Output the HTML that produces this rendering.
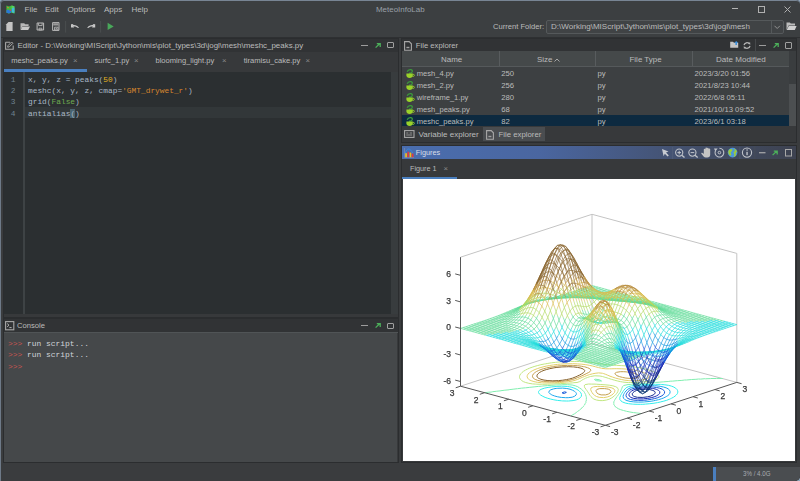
<!DOCTYPE html>
<html><head><meta charset="utf-8">
<style>
*{margin:0;padding:0;box-sizing:border-box}
html{background:#8fa6bc}body{width:800px;height:481px;overflow:hidden;background:#3c3f41;border-radius:4px 4px 5px 0}
body{position:relative;font-family:"Liberation Sans",sans-serif;font-size:7.8px;color:#bbbbbb}
.a{position:absolute}
.t{position:absolute;white-space:nowrap;line-height:10px}
.mono{font-family:"Liberation Mono",monospace;font-size:7.85px}
svg.a{overflow:visible}
</style></head><body>
<!-- workspace bg -->
<div class="a" style="left:0;top:37px;width:800px;height:444px;background:#3a3c3e"></div>
<!-- window frame -->
<div class="a" style="left:0;top:0;width:800px;height:481px;border-top:1px solid #788594;border-left:1px solid #6e7a88;border-radius:4px 4px 4px 0;pointer-events:none"></div>
<!-- title/menu -->
<svg class="a" style="left:5.8px;top:4.8px" width="9" height="9" viewBox="0 0 9 9"><path d="M0.4 0.6L3 1.4L5.6 0.4L8.4 1.2V8.4L5.6 7.6L3 8.6L0.4 7.8Z" fill="#3cbc3c"/><path d="M5.6 0.4L8.4 1.2V8.4L5.6 7.6Z" fill="#58d060"/><path d="M6 3.2L8.4 2.6V7.8L6 7.2Z" fill="#40b8e0"/><path d="M0.4 5.2L2 4.6L3.6 5.6L5.4 4.2V7.6L3 8.6L0.4 7.8Z" fill="#2a78d8"/><circle cx="2" cy="2.6" r="0.8" fill="#e07a30"/><circle cx="4.4" cy="5.2" r="0.7" fill="#d04060"/></svg>
<div class="t" style="left:24.5px;top:5px;font-size:8px">File</div>
<div class="t" style="left:45px;top:5px;font-size:8px">Edit</div>
<div class="t" style="left:67.5px;top:5px;font-size:8.1px">Options</div>
<div class="t" style="left:104px;top:5px;font-size:8px">Apps</div>
<div class="t" style="left:131.5px;top:5px;font-size:8px">Help</div>
<div class="t" style="left:376px;top:5px;color:#9aa0a8;font-size:7.95px">MeteoInfoLab</div>
<div class="a" style="left:732px;top:8px;width:6px;height:1px;background:#b4b4b4"></div>
<div class="a" style="left:758px;top:6px;width:6.5px;height:6.5px;border:1px solid #b0b0b0"></div>
<svg class="a" style="left:784px;top:6px" width="7" height="7"><path d="M0.5 0.5L6.5 6.5M6.5 0.5L0.5 6.5" stroke="#b0b0b0" stroke-width="1"/></svg>

<!-- toolbar icons -->
<svg class="a" style="left:0;top:0" width="120" height="37">
 <path d="M8.5 22H12.6V31.1H6.3V24.2Z" fill="#c4c4c4"/>
 <path d="M20.5 23.2H24.2L25.2 24.3H28.6V26H22.6L20.5 30Z" fill="#b8b8b8"/><path d="M22.4 26.6H30L28.2 30H20.6Z" fill="#c8c8c8"/>
 <path d="M37.1 23H43.6V30H37.1Z" fill="none" stroke="#bcbcbc" stroke-width="1"/><path d="M38.6 23.2V25.6H42.1V23.2" fill="none" stroke="#bcbcbc" stroke-width="0.9"/><path d="M39 28.2H41.8V30H39Z" fill="none" stroke="#bcbcbc" stroke-width="0.8"/>
 <path d="M52.6 22.6H59V30.4H52.6Z" fill="none" stroke="#b8b8b8" stroke-width="1"/><path d="M53.2 23.2H58.4V25.4H53.2Z" fill="#9c9c9c"/><path d="M54.6 27.2H58V30H54.6Z" fill="none" stroke="#b8b8b8" stroke-width="0.9"/><path d="M55.6 28.2H57V29.2H55.6Z" fill="#b8b8b8"/>
 <rect x="65.2" y="21" width="0.9" height="11.6" fill="#4c5052"/>
 <path d="M71 24.2L73.6 24.1L72.6 25.2C74.8 24.8 77.6 25.3 79 28.1L78 28.1C76.8 26.6 74.8 26.2 73.3 26.5L74.2 27.6L71 27.6Z" fill="#c8c8c8"/>
 <path d="M95.2 24.2L92.6 24.1L93.6 25.2C91.4 24.8 88.6 25.3 87.2 28.1L88.2 28.1C89.4 26.6 91.4 26.2 92.9 26.5L92 27.6L95.2 27.6Z" fill="#c8c8c8"/>
 <rect x="100.2" y="21" width="0.9" height="11.6" fill="#4c5052"/>
 <path d="M107.6 22.8L113.7 26.5L107.6 30.1Z" fill="#49a85a"/>
</svg>
<div class="t" style="left:493px;top:22px;font-size:7.6px">Current Folder:</div>
<div class="a" style="left:546px;top:19.5px;width:238px;height:14.5px;background:#404345;border:1px solid #55595b;border-radius:2px"></div>
<div class="a" style="left:770.5px;top:20.5px;width:1px;height:12.5px;background:#55595b"></div>
<div class="t" style="left:551px;top:22px;font-size:8.05px">D:\Working\MIScript\Jython\mis\plot_types\3d\jogl\mesh</div>
<svg class="a" style="left:773.5px;top:25px" width="7" height="5"><path d="M0.5 0.8L3.2 3.5L5.9 0.8" stroke="#9a9a9a" fill="none" stroke-width="0.9"/></svg>
<svg class="a" style="left:786px;top:22px" width="11" height="9"><path d="M0.5 0.5H3.8L4.8 1.6H9V3.4H2.6L0.5 8Z" fill="#bcbcbc"/><path d="M2.8 3.9H10.6L8.8 8H0.7Z" fill="#d0d0d0"/></svg>
<div class="a" style="left:1px;top:37px;width:799px;height:1px;background:#2e3032"></div>

<!-- ===== Editor panel ===== -->
<div class="a" style="left:3px;top:38px;width:396px;height:279.5px;background:#37393b;border:1px solid #2b2d2f"></div>
<div class="a" style="left:4px;top:39px;width:394px;height:13px;background:#313335"></div>
<svg class="a" style="left:5px;top:41px" width="9" height="9"><path d="M0.6 1.2H5M8.2 4.4V8.3H0.6V1.2" fill="none" stroke="#a8a8a8" stroke-width="1.1"/><path d="M2.6 6.2L3 4.6L6.6 1L7.9 2.3L4.3 5.9Z" fill="none" stroke="#a8a8a8" stroke-width="1"/></svg>
<div class="t" style="left:17.5px;top:40.5px;font-size:7.95px">Editor - D:\Working\MIScript\Jython\mis\plot_types\3d\jogl\mesh\meshc_peaks.py</div>
<div class="a" style="left:361px;top:45px;width:7px;height:1.2px;background:#9c9c9c"></div>
<svg class="a" style="left:375px;top:42.5px" width="6" height="5"><path d="M0.6 4.6L4.6 0.8M1.8 0.6H5.2V4" fill="none" stroke="#4caf5a" stroke-width="1.3"/></svg>
<div class="a" style="left:387px;top:42px;width:7px;height:6px;border:1px solid #a0a0a0;border-radius:1px"></div>
<!-- tabs -->
<div class="t" style="left:11.2px;top:56px;font-size:7.55px">meshc_peaks.py</div><div class="t" style="left:73px;top:56px;color:#8a8a8a">×</div>
<div class="t" style="left:94.5px;top:56px;font-size:7.55px">surfc_1.py</div><div class="t" style="left:134px;top:56px;color:#8a8a8a">×</div>
<div class="t" style="left:155.5px;top:56px;font-size:7.55px">blooming_light.py</div><div class="t" style="left:222px;top:56px;color:#8a8a8a">×</div>
<div class="t" style="left:243.7px;top:56px;font-size:7.55px">tiramisu_cake.py</div><div class="t" style="left:305.5px;top:56px;color:#8a8a8a">×</div>
<div class="a" style="left:4px;top:69px;width:83px;height:2.5px;background:#4a7fbf"></div>
<!-- code -->
<div class="a" style="left:4px;top:71.5px;width:387px;height:242px;background:#2b2f31"></div>
<div class="a" style="left:391px;top:71.5px;width:7px;height:242px;background:#383c3e"></div>
<div class="a" style="left:23px;top:71.5px;width:2px;height:242px;background:#3e4345"></div>
<div class="a" style="left:25px;top:107px;width:366px;height:10.5px;background:#323739"></div>
<div class="t mono" style="left:10.8px;top:73.9px;color:#6f8290;line-height:11.2px">1<br>2<br>3<br>4</div>
<div class="t mono" style="left:28px;top:73.9px;color:#a9b7c6;line-height:11.2px;font-size:7.85px">x, y, z = peaks(<span style="color:#e6b422">50</span>)<br>meshc(x, y, z, cmap=<span style="color:#d7852e">'GMT_drywet_r'</span>)<br>grid(<span style="color:#6eaa50">False</span>)<br>antialias<span style="background:#4a6470">(</span>)</div>

<!-- ===== Console ===== -->
<div class="a" style="left:3px;top:318px;width:396px;height:145px;background:#37393b;border:1px solid #2b2d2f"></div>
<div class="a" style="left:4px;top:319px;width:394px;height:13px;background:#313335"></div>
<svg class="a" style="left:5px;top:321px" width="10" height="9"><rect x="0.6" y="0.6" width="8.2" height="8.2" fill="none" stroke="#a8a8a8" stroke-width="1.1"/><path d="M2.2 2.6L4 4.2L2.2 5.8M4.4 6.6H6.6" fill="none" stroke="#c0c0c0" stroke-width="0.9"/></svg>
<div class="t" style="left:17px;top:321px;font-size:7.65px">Console</div>
<div class="a" style="left:361px;top:325px;width:7px;height:1.2px;background:#9c9c9c"></div>
<svg class="a" style="left:375px;top:322.5px" width="6" height="5"><path d="M0.6 4.6L4.6 0.8M1.8 0.6H5.2V4" fill="none" stroke="#4caf5a" stroke-width="1.3"/></svg>
<div class="a" style="left:387px;top:322.5px;width:7px;height:6.5px;border:1px solid #a0a0a0;border-radius:1px"></div>
<div class="a" style="left:4px;top:332px;width:394px;height:1px;background:#505456"></div>
<div class="a" style="left:4px;top:333px;width:393px;height:129px;background:#45484a"></div>
<div class="t mono" style="left:8px;top:338.2px;color:#c75450;line-height:11.2px;font-size:7.95px">&gt;&gt;&gt;<br>&gt;&gt;&gt;<br>&gt;&gt;&gt;</div>
<div class="t mono" style="left:27px;top:338.2px;color:#d0d4d8;line-height:11.2px;font-size:7.95px">run script...<br>run script...</div>

<!-- ===== File explorer ===== -->
<div class="a" style="left:401px;top:38px;width:396px;height:104.5px;background:#37393b;border:1px solid #2b2d2f"></div>
<div class="a" style="left:402px;top:39px;width:394px;height:12px;background:#313335"></div>
<svg class="a" style="left:404px;top:40.5px" width="8" height="10"><path d="M0.6 0.6H5.2L7.4 2.8V9.2H0.6Z" fill="none" stroke="#a8a8a8" stroke-width="1.1"/><path d="M2.4 5.8H5.4V7.2H2.4Z" fill="#a0a0a0"/></svg>
<div class="t" style="left:415.8px;top:40.5px;font-size:7.7px">File explorer</div>
<svg class="a" style="left:730px;top:41px" width="9" height="7"><path d="M0.2 0.8H3L4 1.8H8.2V6.8H0.2Z" fill="#c4c4c4"/><path d="M6.2 0L8.2 2H7V4H5.4V2H4.2Z" fill="#3f8fd8"/></svg>
<svg class="a" style="left:743px;top:41.5px" width="8" height="7"><path d="M1 3.2A3 3 0 0 1 6.4 2M7 3.8A3 3 0 0 1 1.6 5" fill="none" stroke="#b8b8b8" stroke-width="1.2"/><path d="M5 0.6L7.2 0.6L7.2 2.9Z" fill="#b8b8b8"/><path d="M3 6.4L0.8 6.4L0.8 4.1Z" fill="#b8b8b8"/></svg>
<div class="a" style="left:754.5px;top:39px;width:1px;height:12px;background:#46494b"></div>
<div class="a" style="left:759px;top:45px;width:6.5px;height:1.2px;background:#9c9c9c"></div>
<svg class="a" style="left:772.5px;top:42.5px" width="6" height="5"><path d="M0.6 4.6L4.6 0.8M1.8 0.6H5.2V4" fill="none" stroke="#4caf5a" stroke-width="1.3"/></svg>
<div class="a" style="left:785px;top:42px;width:6.5px;height:6.5px;border:1px solid #a0a0a0;border-radius:1px"></div>
<div class="a" style="left:402px;top:51px;width:387px;height:15.5px;background:#45494a"></div>
<div class="a" style="left:402px;top:66px;width:387px;height:1px;background:#55595b"></div>
<div class="a" style="left:499px;top:51px;width:1px;height:15px;background:#585c5e"></div>
<div class="a" style="left:595px;top:51px;width:1px;height:15px;background:#585c5e"></div>
<div class="a" style="left:692px;top:51px;width:1px;height:15px;background:#585c5e"></div>
<div class="t" style="left:441px;top:55px;font-size:7.95px">Name</div>
<div class="t" style="left:537px;top:55px;font-size:7.95px">Size</div>
<svg class="a" style="left:553.5px;top:57.5px" width="6" height="4"><path d="M0.5 3.5L3 1L5.5 3.5" fill="none" stroke="#b0b0b0" stroke-width="0.9"/></svg>
<div class="t" style="left:629.5px;top:55px;font-size:7.95px">File Type</div>
<div class="t" style="left:716px;top:55px;font-size:8.05px">Date Modified</div>
<div class="a" style="left:402px;top:67px;width:387px;height:59px;background:#3d4042"></div>
<div class="a" style="left:402px;top:115px;width:387px;height:11px;background:#0d2a40"></div>
<div class="a" style="left:789px;top:51px;width:7px;height:75px;background:#4c4f51"></div>
<div class="a" style="left:789px;top:51px;width:7px;height:33px;background:#3a3d3f"></div>
<div id="rows">
<svg class="a" style="left:406px;top:68.7px" width="9" height="9"><path d="M1.2 2.8Q2 0.4 4.6 0.6Q7 0.8 6 3Q5.2 4.4 3 4.2" fill="none" stroke="#3c9a3c" stroke-width="1.3"/><path d="M0.4 4.4H6.8V6.6Q6.6 9 3.6 9Q0.6 9 0.4 6.6Z" fill="#9ad22a"/><path d="M6.6 5.2Q8.6 5.2 8.4 6.6Q8.2 7.6 6.4 7.4" fill="none" stroke="#9ad22a" stroke-width="0.8"/></svg>
<div class="t" style="left:416.8px;top:68.8px;font-size:7.55px">mesh_4.py</div>
<div class="t" style="left:501.3px;top:68.8px;font-size:7.7px">250</div>
<div class="t" style="left:597.5px;top:68.8px;font-size:7.7px">py</div>
<div class="t" style="left:694.5px;top:68.8px;font-size:7.7px">2023/3/20 01:56</div>
<svg class="a" style="left:406px;top:80.7px" width="9" height="9"><path d="M1.2 2.8Q2 0.4 4.6 0.6Q7 0.8 6 3Q5.2 4.4 3 4.2" fill="none" stroke="#3c9a3c" stroke-width="1.3"/><path d="M0.4 4.4H6.8V6.6Q6.6 9 3.6 9Q0.6 9 0.4 6.6Z" fill="#9ad22a"/><path d="M6.6 5.2Q8.6 5.2 8.4 6.6Q8.2 7.6 6.4 7.4" fill="none" stroke="#9ad22a" stroke-width="0.8"/></svg>
<div class="t" style="left:416.8px;top:80.8px;font-size:7.55px">mesh_2.py</div>
<div class="t" style="left:501.3px;top:80.8px;font-size:7.7px">256</div>
<div class="t" style="left:597.5px;top:80.8px;font-size:7.7px">py</div>
<div class="t" style="left:694.5px;top:80.8px;font-size:7.7px">2021/8/23 10:44</div>
<svg class="a" style="left:406px;top:92.7px" width="9" height="9"><path d="M1.2 2.8Q2 0.4 4.6 0.6Q7 0.8 6 3Q5.2 4.4 3 4.2" fill="none" stroke="#3c9a3c" stroke-width="1.3"/><path d="M0.4 4.4H6.8V6.6Q6.6 9 3.6 9Q0.6 9 0.4 6.6Z" fill="#9ad22a"/><path d="M6.6 5.2Q8.6 5.2 8.4 6.6Q8.2 7.6 6.4 7.4" fill="none" stroke="#9ad22a" stroke-width="0.8"/></svg>
<div class="t" style="left:416.8px;top:92.8px;font-size:7.55px">wireframe_1.py</div>
<div class="t" style="left:501.3px;top:92.8px;font-size:7.7px">280</div>
<div class="t" style="left:597.5px;top:92.8px;font-size:7.7px">py</div>
<div class="t" style="left:694.5px;top:92.8px;font-size:7.7px">2022/6/8 05:11</div>
<svg class="a" style="left:406px;top:104.7px" width="9" height="9"><path d="M1.2 2.8Q2 0.4 4.6 0.6Q7 0.8 6 3Q5.2 4.4 3 4.2" fill="none" stroke="#3c9a3c" stroke-width="1.3"/><path d="M0.4 4.4H6.8V6.6Q6.6 9 3.6 9Q0.6 9 0.4 6.6Z" fill="#9ad22a"/><path d="M6.6 5.2Q8.6 5.2 8.4 6.6Q8.2 7.6 6.4 7.4" fill="none" stroke="#9ad22a" stroke-width="0.8"/></svg>
<div class="t" style="left:416.8px;top:104.8px;font-size:7.55px">mesh_peaks.py</div>
<div class="t" style="left:501.3px;top:104.8px;font-size:7.7px">68</div>
<div class="t" style="left:597.5px;top:104.8px;font-size:7.7px">py</div>
<div class="t" style="left:694.5px;top:104.8px;font-size:7.7px">2021/10/13 09:52</div>
<svg class="a" style="left:406px;top:116.7px" width="9" height="9"><path d="M1.2 2.8Q2 0.4 4.6 0.6Q7 0.8 6 3Q5.2 4.4 3 4.2" fill="none" stroke="#3c9a3c" stroke-width="1.3"/><path d="M0.4 4.4H6.8V6.6Q6.6 9 3.6 9Q0.6 9 0.4 6.6Z" fill="#9ad22a"/><path d="M6.6 5.2Q8.6 5.2 8.4 6.6Q8.2 7.6 6.4 7.4" fill="none" stroke="#9ad22a" stroke-width="0.8"/></svg>
<div class="t" style="left:416.8px;top:116.8px;font-size:7.55px">meshc_peaks.py</div>
<div class="t" style="left:501.3px;top:116.8px;font-size:7.7px">82</div>
<div class="t" style="left:597.5px;top:116.8px;font-size:7.7px">py</div>
<div class="t" style="left:694.5px;top:116.8px;font-size:7.7px">2023/6/1 03:18</div>
</div>
<div class="a" style="left:402px;top:126px;width:394px;height:16px;background:#37393b"></div>
<div class="a" style="left:483px;top:127px;width:62px;height:14px;background:#4a4d50"></div>
<svg class="a" style="left:404px;top:130px" width="11" height="8"><rect x="0.6" y="0.6" width="9.4" height="6.8" fill="none" stroke="#a8a8a8" stroke-width="1.1"/><path d="M2.2 3H4.4M5.6 3H8.2M2.2 5H8.2" stroke="#a0a0a0" stroke-width="0.9"/></svg>
<div class="t" style="left:418.5px;top:129.5px;font-size:8.05px">Variable explorer</div>
<svg class="a" style="left:486px;top:129.5px" width="8" height="10"><path d="M0.6 0.6H5.2L7.4 2.8V9.2H0.6Z" fill="none" stroke="#a8a8a8" stroke-width="1.1"/><path d="M2.4 5.8H5.4V7.2H2.4Z" fill="#a0a0a0"/></svg>
<div class="t" style="left:498.5px;top:129.5px;font-size:7.8px">File explorer</div>

<!-- ===== Figures ===== -->
<div class="a" style="left:401px;top:145px;width:396px;height:318px;background:#37393b;border:1px solid #2b2d2f"></div>
<div class="a" style="left:402px;top:146px;width:394px;height:13px;background:linear-gradient(90deg,#4a6eaf 0%,#4a66a0 35%,#434f6a 75%,#3d4250 100%)"></div>
<svg class="a" style="left:404px;top:148px" width="10" height="10"><path d="M0.5 0V9.5H10" stroke="#8090b0" stroke-width="0.6" fill="none"/><path d="M1 5.5C3 -0.5 6 -0.5 9 5.5" stroke="#3a8ae0" stroke-width="0.9" fill="none"/><rect x="1.2" y="5.2" width="1.7" height="4" fill="#f0c020"/><rect x="3.4" y="3.8" width="1.7" height="5.4" fill="#e03a40"/><rect x="5.6" y="4.6" width="1.7" height="4.6" fill="#f0c020"/><rect x="7.8" y="5.6" width="1.7" height="3.6" fill="#e03a40"/></svg>
<div class="t" style="left:415.8px;top:148px;color:#d8dee8;font-size:7.3px">Figures</div>
<!-- figure toolbar -->
<svg class="a" style="left:655px;top:144px" width="145" height="18">
 <path d="M7 5L13.5 7.5L11 8.6L13.8 11.4L12.6 12.6L9.8 9.8L8.6 12.2Z" fill="#c8ccd2"/>
 <rect x="17.3" y="3" width="0.8" height="12" fill="#52607a"/>
 <circle cx="24.2" cy="8.6" r="3.6" fill="none" stroke="#c0c4ca" stroke-width="1.1"/><path d="M22.4 8.6H26M24.2 6.8V10.4" stroke="#c0c4ca" stroke-width="1"/><path d="M26.8 11.2L29.5 13.6" stroke="#c0c4ca" stroke-width="1.3"/>
 <circle cx="37.4" cy="8.6" r="3.6" fill="none" stroke="#c0c4ca" stroke-width="1.1"/><path d="M35.6 8.6H39.2" stroke="#c0c4ca" stroke-width="1"/><path d="M40 11.2L42.7 13.6" stroke="#c0c4ca" stroke-width="1.3"/>
 <path d="M48.6 12.6L46.4 9.8Q45.9 9 46.7 8.7Q47.4 8.5 48 9.2L48.8 10V5.6Q48.8 4.8 49.6 4.8Q50.4 4.8 50.4 5.6V4.4Q50.4 3.6 51.2 3.6Q52 3.6 52 4.4V4.6Q52 3.8 52.8 3.8Q53.6 3.8 53.6 4.6V5.4Q53.6 4.6 54.4 4.6Q55.2 4.6 55.2 5.4V10.6Q55.2 13.6 52.2 13.6H50.8Q49.4 13.6 48.6 12.6Z" fill="#c4c4c4"/>
 <path d="M64.4 4.2A4.4 4.4 0 1 1 60.6 6.4" fill="none" stroke="#c0c4ca" stroke-width="1.1"/><path d="M59 4.4L62.6 4.6L60.4 7.6Z" fill="#c0c4ca"/><circle cx="64.4" cy="8.6" r="1.3" fill="none" stroke="#c0c4ca" stroke-width="1"/>
 <circle cx="77.6" cy="8.6" r="4.8" fill="#4a96dc"/><path d="M74.2 5.6Q76 4.4 77.4 5.2L77 7L75.6 8.4L76.4 10.6L75.4 12Q73 10.4 73.2 7.6Z" fill="#9ccc3a"/><path d="M79.2 4.4Q81.4 5.2 82 7.4L80.6 9.2L81 11.2Q79.8 12.6 78.6 13L79.4 10.6L78.4 8.6L79.8 7Z" fill="#9ccc3a"/>
 <rect x="84.5" y="3" width="0.8" height="12" fill="#4e5870"/>
 <circle cx="92" cy="8.6" r="4.6" fill="none" stroke="#c0c4ca" stroke-width="1.1"/><rect x="91.4" y="7.8" width="1.3" height="3.4" fill="#c8ccd2"/><circle cx="92.05" cy="6.1" r="0.75" fill="#c8ccd2"/>
 <rect x="99.5" y="2" width="0.8" height="13" fill="#474d58"/>
 <rect x="104" y="8.2" width="6.5" height="1.1" fill="#b4b4b4"/>
 <path d="M117.6 11.1L121.6 7.3M118.8 7.1H122.2V10.5" fill="none" stroke="#4caf5a" stroke-width="1.3"/>
 <rect x="130.5" y="5.5" width="6" height="6.5" fill="none" stroke="#a8a8a8" stroke-width="1"/>
</svg>
<div class="t" style="left:410px;top:164px;font-size:7.25px">Figure 1</div><div class="t" style="left:443.5px;top:163.5px;color:#8a8a8a">×</div>
<div class="a" style="left:402px;top:177px;width:55px;height:2px;background:#4a7fbf"></div>
<div class="a" style="left:402.5px;top:179px;width:392.5px;height:282px;background:#ffffff"></div>

<!-- status -->
<div class="a" style="left:713px;top:467px;width:87px;height:14px;background:#4a4d50;border-bottom-right-radius:5px"></div>
<div class="a" style="left:713px;top:467px;width:3px;height:14px;background:#4a7fbf"></div>
<div class="t" style="left:743px;top:468.8px;color:#a8acb0;font-size:7.1px;transform:scaleX(0.87);transform-origin:0 0">3% / 4.0G</div>
<svg class="a" style="left:0;top:0;will-change:transform" width="800" height="481" viewBox="0 0 800 481"><g><path d="M460.5 257.2L592 214.3" stroke="#c4c4c4" stroke-width="1" fill="none"/><path d="M592 214.3L736.8 253.4" stroke="#c4c4c4" stroke-width="1" fill="none"/><path d="M592 343.3L592 214.3" stroke="#c4c4c4" stroke-width="1" fill="none"/><path d="M736.8 382.4L736.8 253.4" stroke="#c4c4c4" stroke-width="1" fill="none"/><path d="M460.5 386.2L592 343.3" stroke="#c4c4c4" stroke-width="1" fill="none"/><path d="M592 343.3L736.8 382.4" stroke="#c4c4c4" stroke-width="1" fill="none"/><path d="M645.5 389.3L649.9 389.6L652.9 390.4L654.8 391.5L655.2 392.4L655.1 393.2L654.7 393.8L653.1 395L650.8 396L647.7 396.8L643.9 397.3L642.1 397.4L637.9 397.3L637.3 397.3L634.2 396.5L633.7 396.2L632.5 395.3L632.3 394.2L632.3 393.6L632.9 392.7L634.3 391.5L636.4 390.5L639.6 389.7L643.9 389.3L645.5 389.3" stroke="#12268e" stroke-width="1" fill="none"/><path d="M643.9 388L645 388L649.2 388.1L652.5 388.4L653.2 388.5L656.3 389.3L657.4 389.8L658.5 390.3L659.8 391.7L659.9 392L659.6 393.5L659.6 393.6L658.3 394.8L656.5 395.9L654.1 396.9L651.2 397.7L647.8 398.4L643.6 398.8L643.1 398.9L637.9 398.9L637.6 398.9L633.8 398.4L631 397.5L630.1 396.8L629.4 396.3L628.9 394.9L628.9 394.7L629.4 393.4L629.8 392.6L630.3 392.1L631.8 390.9L633.9 389.8L636.6 389L640.3 388.3L643.9 388" stroke="#1a28b4" stroke-width="1" fill="none"/><path d="M641.6 387L646.5 386.8L647.7 386.8L652.5 387L653.5 387.1L656.5 387.5L659.7 388.2L662.1 389.1L662.9 389.6L663.8 390.3L664.6 391.7L664.7 391.8L664.4 393.3L664.1 393.8L663.5 394.6L661.9 395.8L659.8 396.8L658 397.5L657.4 397.8L656 398.2L654.6 398.6L651.4 399.3L647.6 399.9L644.3 400.3L643.2 400.3L638.3 400.4L637.5 400.4L633.9 400.1L630.5 399.5L628 398.5L626.9 397.5L626.5 397.2L626 395.7L626 395.6L626.3 394.2L626.5 393.7L627.1 392.8L628.1 391.5L628.2 391.4L629.6 390.2L631.5 389.2L634 388.3L637.3 387.5L641.4 387L641.6 387M566.2 392.2L566.4 392.4L564.3 393.4L563 393.3L562.1 392.8L564.4 391.9L566.2 392.2" stroke="#1558d8" stroke-width="1" fill="none"/><path d="M638.8 386.2L642.9 385.8L645.7 385.7L648.1 385.7L651.3 385.6L654.5 385.8L656 385.8L660.1 386.3L663.4 387L666.1 387.8L668.2 388.9L669 389.7L669.6 390.2L670.1 391.6L670.1 391.8L669.9 393.1L669.6 393.8L669.1 394.5L667.7 395.7L666.2 396.6L665.9 396.8L663.8 397.9L661.3 398.8L658.5 399.7L655.4 400.4L653.5 400.8L651.9 401.1L648 401.6L644.6 401.9L643.4 402L638.6 402.1L637.9 402.1L633.8 401.9L630 401.4L627 400.6L624.8 399.6L623.5 398.2L623.5 398.2L623.1 396.6L623.1 396.5L623.4 395L623.5 394.7L624.1 393.6L624.7 392.5L625 392.2L626 390.9L627 390L627.3 389.6L629 388.5L631.4 387.5L634.5 386.8L638.3 386.2L638.8 386.2M556.2 388.4L557.2 388.3L562.3 388.1L562.7 388.1L566.8 388.5L570 389.2L572.5 390.2L574.6 391.3L574.8 391.5L575.9 392.6L576.4 393.5L576.3 394.2L576.1 395L574.7 396.2L572.2 397.2L568.2 397.7L565.6 397.7L561.3 397.4L561.2 397.4L557.7 396.8L554.7 396L552.2 395.1L551.8 394.9L550.2 393.9L548.9 392.6L548.9 392.5L549.2 390.9L549.5 390.6L550.8 389.8L553.5 388.9L556.2 388.4" stroke="#1ba7ed" stroke-width="1" fill="none"/><path d="M636.3 385.2L639.5 384.9L643.5 384.6L644.2 384.6L649.3 384.4L649.8 384.3L654.9 384.3L655.5 384.3L660.5 384.4L661.7 384.5L664.8 384.8L668.4 385.3L671.4 386.1L673.9 387.1L675.7 388.2L675.8 388.3L677.1 389.6L677.5 390.4L677.8 391.1L677.8 392.1L677.6 392.9L677.4 393.6L676.4 394.9L676.1 395.2L675.1 396.1L673.4 397.3L671.4 398.3L670.4 398.8L669.2 399.3L666.7 400.3L663.9 401.1L661 401.8L660.8 401.9L657.6 402.6L654 403.2L649.8 403.7L649.8 403.7L645.4 404.1L642.8 404.3L640.3 404.3L637.1 404.3L633.8 404.2L632.5 404.1L628.5 403.7L625.2 403L622.6 402L620.8 400.8L620.8 400.7L619.8 399.4L619.9 398.8L619.7 397.7L619.9 397.3L620.5 395.8L620.5 395.7L621.2 394.4L621.7 393.5L622 393L622.9 391.7L623.2 391.3L623.8 390.3L624.9 389L625.1 388.9L626.2 387.7L628.3 386.7L631.3 385.9L635.1 385.3L636.3 385.2M548.9 387.3L551.9 386.9L556.2 386.5L557.1 386.4L561.4 386.2L563 386.2L567.6 386.5L569.6 386.8L571.1 387.1L573.9 388L574 388L576.1 389L578.1 390.1L579.3 391.1L579.6 391.4L580.8 392.8L581 393.1L581.4 394.3L581.5 394.9L581.3 396.1L581.3 396.4L580.3 397.7L579 398.7L578.7 398.9L576.3 399.9L573.1 400.6L573 400.6L568.6 401L566.3 401L562.3 400.9L561.5 400.8L557.4 400.4L553.9 399.8L550.7 399.1L547.8 398.3L545.1 397.4L542.8 396.3L540.9 395.2L540.7 395.1L539.4 394L538.7 392.9L538.5 392.5L538.7 391.3L539.4 390.4L539.8 390L541.9 389L544.7 388.1L548 387.4L548.9 387.3" stroke="#32eeeb" stroke-width="1" fill="none"/><path d="M641.3 413.6L637.4 413L636.5 412.9L633.5 412.6L629.9 412L626.6 411.3L623.5 410.5L620.7 409.7L618.3 408.7L616.6 407.6L616.6 407.5L614.8 406.3L614.5 405.4L613.9 404.9L613.9 403.6L613.6 403.2L614 402L614 401.3L614.5 400.6L615.2 399.2L615.2 399.2L616.2 397.8L616.7 396.9L617.1 396.5L618.1 395.2L618.5 394.6L619 393.8L620 392.5L620.1 392.3L620.7 391.1L621.2 390.1L621.3 389.6L621.9 388.2L622 388.1L622.3 386.7L623.5 385.9L623.7 385.5L627 384.8L627 384.7L631.1 384.3L634.5 384L635.8 383.9L640.5 383.6L641.5 383.5L645.2 383.3L648.6 383L649.8 382.9L654.4 382.6L655.7 382.4L659.1 382.2L662.9 381.9L663.6 381.8L668.2 381.5L670.2 381.2L672.7 381.1L677.1 380.7L677.3 380.7L681.9 380.4L684.7 380L686.5 380L691 379.6L691.6 379.5L695.9 379.3L698.6 379L700.7 379.1L704.9 378.7L705.6 378.8L710.7 378.6L710.8 378.5L716.3 378.5L716.6 378.4L721.9 378.5L722.7 378.6M484.7 392.7L488.7 392.2L491.1 392.1L492.8 391.7L496.8 391.2L500 390.9L501 390.7L504.9 390.2L509 389.8L509.1 389.7L513.1 389.2L517.3 388.7L517.5 388.7L521.3 388.2L525.6 387.8L525.9 387.8L529.8 387.3L534 386.9L534.1 386.9L538.4 386.4L541.6 386.2L542.8 386L547.3 385.6L549 385.5L551.9 385.3L555.9 385L556.8 385L561.8 384.8L562.2 384.7L567.6 384.7L567.7 384.7L572.1 385L575.3 385.8L577.7 386.7L579.5 387.9L579.6 388L581.3 389.1L582.7 390.4L582.8 390.4L584 391.7L584.5 392.5L584.9 393.2L585.6 394.4L585.6 394.7L586.1 396.1L586.1 396.3L586.4 397.8L586.3 398L586.4 399.4L586.2 399.8L586.3 401L585.8 401.7L585.9 402.5L585.1 403.7L585.1 403.9L584.4 405.2L583.5 406L583.3 406.6L582.1 407.8L581 408.6L580.8 409.1L579.3 410.3L577.6 411.4L577.5 411.5L576.2 412.6L574.5 413.8L572.6 414.8L572.6 414.9L571 416M595.3 379.2L599.2 379.7L601.3 380.8L601.6 381.1L600.5 381L596.2 380.7L594.4 379.5L594.8 379.3L595.3 379.2" stroke="#80eeaf" stroke-width="1" fill="none"/><path d="M588.7 384L585.1 384.6L584 386L584.3 386.3L584.8 387.8L585 387.9L586 389.3L586.2 389.7L587 390.7L587.7 391.7L588 392.2L588.9 393.6L588.9 393.7L589.8 395.1L590.3 395.7L590.9 396.5L592.1 397.7L592.2 397.9L593.9 399.1L596.4 400L599.9 400.6L602.8 400.6L606.6 400L609.2 399.2L611.3 398.1L613 397L614.3 395.9L614.5 395.8L615.8 394.5L616.7 393.4L616.9 393.2L617.7 391.8L618 391.2L618.1 390.3L618.3 389.4L617.9 388.7L617.6 387.8L615.7 386.7L612.9 385.8L609.2 385.2L605.1 384.8L603 384.7L600.8 384.5L596.3 384.2L595 384.1L591.3 384.1L588.7 384M544.3 364L540.9 364.7L537.8 365.5L534.9 366.3L532.2 367.2L529.7 368.1L527.5 369.1L525.5 370.1L525.1 370.4L523.6 371.2L522.1 372.4L521.1 373.5L520.9 373.7L519.9 375L519.7 375.7L519.5 376.5L519.5 377.5L519.8 378.2L520.2 379.1L521.4 380.2L521.5 380.4L523.3 381.6L525.7 382.5L528.8 383.3L532.4 383.9L535.7 384.1L536.8 384.2L541.9 384.3L542.3 384.3L547.7 384.2L547.8 384.2L553 384L553.9 383.9L558 383.7L560.3 383.6L563 383.5L566.9 383.2L567.9 383.2L572.6 382.9L573.9 382.7L577 382.5L579.8 381.6L581.6 380.5L582.1 380L583.3 379.4L585.4 378.3L587.7 377.4L590.5 376.5L594.1 375.9L595.1 375.8L599.9 376L602.5 376.5L603.1 376.7L604.1 377L605.9 377.5L608.6 378.4L611.4 379.3L614.2 380.1L617.2 380.9L620.3 381.6L622.7 382L624 382.2L628.3 382.6L630.7 382.5L633.7 382.5L636.2 382.4L640.2 382.2L641 382.1L645.3 381.7L648.5 381.2L649.2 381.2L652.7 380.5L655.5 379.7L657.7 378.6L658.3 378.1L658.9 377.4L658.9 376.1L658.7 375.7L658 374.6L656.5 373.5L656.4 373.4L654.4 372.3L652.2 371.2L649.6 370.3L646.9 369.5L643.9 368.7L640.7 367.9L637.2 367.3L633.5 366.8L629.9 366.3L629.5 366.3L625.4 365.9L621.3 365.6L620.9 365.6L616.3 365.3L613.7 365.2L611.8 365L607.5 364.7L605 364.4L603.5 364.2L599.7 363.7L596 363.1L593 362.8L592.1 362.6L588.2 362.2L583.9 361.8L583.4 361.8L579.4 361.5L576.2 361.4L574.3 361.4L570.2 361.4L568.8 361.4L564.9 361.6L562.6 361.7L560.1 361.9L555.7 362.3L555.1 362.4L551.6 362.8L547.8 363.4L545.2 363.9L544.3 364" stroke="#c0e680" stroke-width="1" fill="none"/><path d="M593.3 386.8L592.8 387.1L591.1 387.9L590.7 389.3L590.7 389.5L591.2 391.1L591.2 391.1L592.1 392.6L592.3 393L593.1 394L594.4 395.1L594.5 395.3L596.5 396.5L599.2 397.3L603.5 397.6L603.8 397.6L607.2 397L609.8 396.1L611.8 395L611.9 395L613.2 393.8L614.4 392.5L614.5 392.3L614.8 391.1L614.9 390.4L614.2 389.3L614 389L611.9 387.9L608.8 387.2L604.9 386.7L604.3 386.6L600.2 386.4L597.5 386.4L593.7 386.8L593.3 386.8M549.7 365.5L546.2 366.1L543 366.9L540.1 367.7L537.4 368.6L535 369.5L532.8 370.5L530.9 371.6L529.9 372.4L529.3 372.8L528.1 374L527.6 374.9L527.3 375.4L527.1 376.8L527.2 377L527.8 378.4L528.3 378.9L529.2 379.7L531.2 380.7L533.9 381.6L537.3 382.3L541.4 382.7L542.6 382.8L546.1 382.9L549.1 382.9L551.6 382.9L554.5 382.8L557.8 382.6L559.5 382.5L564.1 382.2L564.9 382.1L568.4 381.7L572 381.1L575 380.3L577.6 379.4L579.9 378.4L582.2 377.4L584.5 376.5L586.9 375.5L589.5 374.6L592.5 373.8L595.9 373.2L598.6 372.9L602.1 373.2L602.6 373.3L603.3 373.5L605.3 374.2L607.7 375.2L610 376.2L612.6 377.1L615.3 378L618.2 378.8L621.4 379.5L624.9 380.2L628.8 380.6L629.7 380.7L633.8 380.8L635.8 380.7L640.3 380.4L640.5 380.3L643.9 379.7L646.6 378.9L648.3 377.8L648.4 377.7L648.7 376.2L648.6 375.9L647.3 374.6L646.4 374L645.5 373.4L643.2 372.4L640.5 371.5L637.5 370.7L634.2 370.1L630.5 369.5L629.2 369.4L626.4 369.1L621.9 368.8L621.1 368.8L616.8 368.7L614.9 368.7L611.1 368.8L609.2 368.8L605.7 368.8L601.7 368.3L601.4 368.2L598.6 367.6L595.6 366.8L592.6 366L589.3 365.3L585.8 364.7L581.8 364.2L580.2 364.1L577.5 363.9L572.9 363.7L572.6 363.7L567.1 363.8L567 363.8L562 364L560.5 364.1L557.5 364.4L553.5 364.9L552.2 365.1L549.7 365.5" stroke="#e2cf6b" stroke-width="1" fill="none"/><path d="M599.8 388.6L596.9 389.4L595.9 390.8L596.1 391.3L596.6 392.5L596.8 392.8L598.5 394L601.1 394.9L605.5 394.9L608.3 394.1L610 393L611 391.7L611 391.6L610.3 390.2L608.8 389.4L608.1 389.1L606.8 388.9L604.4 388.6L599.8 388.6M616.4 372.3L616.4 372.4L614.8 373.5L615.4 374.4L616.9 375.6L617 375.7L619.5 376.6L622.5 377.4L625.9 378.1L626 378.1L630.3 378.4L633.1 378.4L637 377.9L638.9 376.8L638.7 375.6L638.1 375L637.2 374.4L634.8 373.4L631.8 372.6L628.2 372L626.7 371.9L623.7 371.7L620.3 371.7L616.6 372.3L616.4 372.3M550 367.2L546.7 367.9L543.7 368.7L541 369.5L538.6 370.5L536.5 371.5L535.2 372.4L534.8 372.7L533.4 373.9L532.8 375L532.6 375.3L532.5 376.8L532.6 376.9L533.4 378.3L534.5 379L535.2 379.4L537.7 380.4L540.9 381.1L543.6 381.4L544.9 381.6L549.6 381.8L550.9 381.8L555.2 381.7L556.4 381.7L561.2 381.4L561.9 381.3L565.4 380.9L569 380.3L572.2 379.5L574.9 378.7L577.3 377.7L579.6 376.8L581.8 375.8L584 374.8L586.2 373.7L588.2 372.7L588.3 372.7L590 371.6L590.9 370.2L590.9 370.1L589.8 368.7L587.6 367.7L587.5 367.7L584.7 366.8L583.7 366.7L581.3 366.2L577.3 365.7L573.3 365.5L572.8 365.4L567.6 365.4L567.1 365.4L562 365.6L561.2 365.7L557.6 366L553.6 366.5L552.7 366.7L550 367.2" stroke="#c49e4d" stroke-width="1" fill="none"/><path d="M553.1 368L549.7 368.7L546.7 369.5L544 370.3L541.7 371.3L539.7 372.4L539 372.9L538.2 373.6L537.1 374.9L537 375.3L537 376.5L537.2 377L538.6 378.3L539.6 378.7L540.9 379.3L544 380.1L545.1 380.2L547.9 380.6L552.7 380.8L553 380.8L558.3 380.6L558.8 380.6L562.7 380.2L566.5 379.6L568.3 379.2L569.8 378.9L572.6 378.1L575.1 377.1L576.1 376.7L577.3 376.1L579.5 375.1L581.4 374L583.2 372.9L583.8 372.4L584.4 371.6L584.7 370.4L584.4 370.1L583.3 369L580.8 368.1L577.5 367.4L573.5 366.9L572.7 366.9L568.8 366.7L566.3 366.8L562.9 366.9L561.2 367L556.9 367.4L554.9 367.7L553.1 368" stroke="#86612a" stroke-width="1" fill="none"/><path d="M605.3 367.5L608 366.6M605.3 367.5L602.3 366.7M608 366.6L610.7 365.8M602.3 366.7L599.4 365.9M610.7 365.8L613.4 364.9M599.4 365.9L596.4 365.1M613.4 364.9L616 364M596.4 365.1L593.5 364.3M616 364L618.7 363.1M593.5 364.3L590.5 363.5M618.7 363.1L621.4 362.3M590.5 363.5L587.6 362.7M621.4 362.3L624.1 361.4M587.6 362.7L584.6 361.9M624.1 361.4L626.8 360.5M584.6 361.9L581.7 361.1M626.8 360.5L629.5 359.6M581.7 361.1L578.7 360.3M629.5 359.6L632.1 358.7M578.7 360.3L575.7 359.5M632.1 358.7L634.8 357.8M575.7 359.5L572.8 358.7M634.8 357.8L637.5 357M572.8 358.7L571.3 358.3M637.5 357L640.2 356.1M640.2 356.1L641.5 355.7M485.6 335.2L484.1 334.8M484.1 334.8L481.2 334M481.2 334L478.2 333.2M478.2 333.2L475.3 332.4M475.3 332.4L472.3 331.6M472.3 331.6L469.4 330.8M469.4 330.8L466.4 330M466.4 330L463.5 329.2M463.5 329.2L460.5 328.4M602.3 366.7L605 365.8M608 366.6L605 365.8M605 365.8L607.7 365M605 365.8L602.1 365M607.7 365L610.4 364.1M602.1 365L599.1 364.2M610.4 364.1L613.1 363.2M599.1 364.2L596.2 363.4M613.1 363.2L615.8 362.3M596.2 363.4L593.2 362.6M615.8 362.3L618.4 361.4M593.2 362.6L590.3 361.8M618.4 361.4L621.1 360.6M590.3 361.8L587.3 361M621.1 360.6L623.8 359.7M587.3 361L584.3 360.2M623.8 359.7L626.5 358.8M584.3 360.2L581.4 359.4M626.5 358.8L629.2 357.9M581.4 359.4L578.4 358.7M629.2 357.9L631.9 357M578.4 358.7L575.5 357.9M631.9 357L634.5 356.2M575.5 357.9L574 357.5M634.5 356.2L637.2 355.3M637.2 355.3L638.6 354.9M488.3 334.3L486.8 333.9M486.8 333.9L483.9 333.1M483.9 333.1L480.9 332.3M480.9 332.3L478 331.5M478 331.5L475 330.7M475 330.7L472 329.9M472 329.9L469.1 329.1M469.1 329.1L466.1 328.3M466.1 328.3L463.2 327.5M599.4 365.9L602.1 365M610.7 365.8L607.7 365M602.1 365L604.8 364.2M607.7 365L604.8 364.2M604.8 364.2L607.4 363.3M604.8 364.2L601.8 363.4M607.4 363.3L610.1 362.4M601.8 363.4L598.8 362.6M610.1 362.4L612.8 361.5M598.8 362.6L595.9 361.8M612.8 361.5L615.5 360.6M595.9 361.8L592.9 361M615.5 360.6L618.2 359.7M592.9 361L590 360.2M618.2 359.7L620.9 358.9M590 360.2L587 359.4M620.9 358.9L623.5 358M587 359.4L584.1 358.6M623.5 358L626.2 357.1M584.1 358.6L581.1 357.8M626.2 357.1L628.9 356.2M581.1 357.8L578.2 357M628.9 356.2L631.6 355.4M578.2 357L575.2 356.2M631.6 355.4L632.9 355M575.2 356.2L573.7 355.8M493.9 334.3L492.5 333.8M492.5 333.8L489.5 333M489.5 333L486.6 332.2M486.6 332.2L483.6 331.4M483.6 331.4L480.6 330.6M480.6 330.6L477.7 329.9M477.7 329.9L474.7 329.1M474.7 329.1L471.8 328.3M471.8 328.3L468.8 327.5M468.8 327.5L465.9 326.7M596.4 365.1L599.1 364.2M613.4 364.9L610.4 364.1M599.1 364.2L601.8 363.4M610.4 364.1L607.4 363.3M601.8 363.4L604.5 362.5M607.4 363.3L604.5 362.5M604.5 362.5L607.2 361.6M604.5 362.5L601.5 361.7M607.2 361.6L609.9 360.7M601.5 361.7L598.6 360.9M609.9 360.7L612.5 359.8M598.6 360.9L595.6 360.1M612.5 359.8L615.2 358.9M595.6 360.1L592.7 359.3M615.2 358.9L617.9 358M592.7 359.3L589.7 358.5M617.9 358L620.6 357.1M589.7 358.5L586.8 357.7M620.6 357.1L623.3 356.3M586.8 357.7L583.8 356.9M623.3 356.3L626 355.4M583.8 356.9L580.8 356.1M626 355.4L628.6 354.6M580.8 356.1L577.9 355.3M628.6 354.6L630 354.2M577.9 355.3L576.4 354.9M496.6 333.4L495.1 333M495.1 333L492.2 332.2M492.2 332.2L489.2 331.4M489.2 331.4L486.3 330.6M486.3 330.6L483.3 329.8M483.3 329.8L480.4 329M480.4 329L477.4 328.2M477.4 328.2L474.5 327.4M474.5 327.4L471.5 326.6M471.5 326.6L468.6 325.8M593.5 364.3L596.2 363.4M616 364L613.1 363.2M596.2 363.4L598.8 362.6M613.1 363.2L610.1 362.4M598.8 362.6L601.5 361.7M610.1 362.4L607.2 361.6M601.5 361.7L604.2 360.8M607.2 361.6L604.2 360.8M604.2 360.8L606.9 359.9M604.2 360.8L601.3 360M606.9 359.9L609.6 359M601.3 360L598.3 359.2M609.6 359L612.3 358.1M598.3 359.2L595.3 358.4M612.3 358.1L614.9 357.2M595.3 358.4L592.4 357.6M614.9 357.2L617.6 356.3M592.4 357.6L589.4 356.8M617.6 356.3L620.3 355.4M589.4 356.8L586.5 356M620.3 355.4L623 354.6M586.5 356L583.5 355.2M623 354.6L625.7 353.8M583.5 355.2L580.6 354.4M625.7 353.8L627 353.4M580.6 354.4L577.6 353.6M577.6 353.6L576.1 353.3M502.3 333.3L500.8 332.9M500.8 332.9L497.8 332.1M497.8 332.1L494.9 331.3M494.9 331.3L491.9 330.5M491.9 330.5L489 329.7M489 329.7L486 328.9M486 328.9L483.1 328.1M483.1 328.1L480.1 327.3M480.1 327.3L477.1 326.5M477.1 326.5L474.2 325.7M474.2 325.7L471.2 324.9M590.5 363.5L593.2 362.6M618.7 363.1L615.8 362.3M593.2 362.6L595.9 361.8M615.8 362.3L612.8 361.5M595.9 361.8L598.6 360.9M612.8 361.5L609.9 360.7M598.6 360.9L601.3 360M609.9 360.7L606.9 359.9M601.3 360L603.9 359.1M606.9 359.9L603.9 359.1M603.9 359.1L606.6 358.2M603.9 359.1L601 358.3M606.6 358.2L609.3 357.3M601 358.3L598 357.5M609.3 357.3L612 356.4M598 357.5L595.1 356.6M612 356.4L614.7 355.4M595.1 356.6L592.1 355.8M614.7 355.4L617.4 354.6M592.1 355.8L589.2 355M617.4 354.6L620 353.7M589.2 355L586.2 354.2M620 353.7L622.7 352.9M586.2 354.2L583.3 353.5M622.7 352.9L624.1 352.6M583.3 353.5L580.3 352.7M580.3 352.7L578.8 352.4M504.9 332.4L503.5 332M503.5 332L500.5 331.1M500.5 331.1L497.6 330.3M497.6 330.3L494.6 329.5M494.6 329.5L491.6 328.8M491.6 328.8L488.7 328M488.7 328L485.7 327.2M485.7 327.2L482.8 326.4M482.8 326.4L479.8 325.6M479.8 325.6L476.9 324.8M720.7 321.1L722 320.6M476.9 324.8L473.9 324M587.6 362.7L590.3 361.8M621.4 362.3L618.4 361.4M590.3 361.8L592.9 361M618.4 361.4L615.5 360.6M592.9 361L595.6 360.1M615.5 360.6L612.5 359.8M595.6 360.1L598.3 359.2M612.5 359.8L609.6 359M598.3 359.2L601 358.3M609.6 359L606.6 358.2M601 358.3L603.7 357.4M606.6 358.2L603.7 357.4M603.7 357.4L606.4 356.4M603.7 357.4L600.7 356.5M606.4 356.4L609 355.5M600.7 356.5L597.8 355.7M609 355.5L611.7 354.6M597.8 355.7L594.8 354.9M611.7 354.6L614.4 353.7M594.8 354.9L591.9 354M614.4 353.7L617.1 352.8M591.9 354L588.9 353.2M617.1 352.8L619.8 352.1M588.9 353.2L585.9 352.5M619.8 352.1L621.1 351.8M585.9 352.5L583 351.8M583 351.8L581.5 351.4M510.6 332.4L509.1 331.9M509.1 331.9L506.2 331M506.2 331L503.2 330.2M503.2 330.2L500.2 329.4M500.2 329.4L497.3 328.6M497.3 328.6L494.3 327.8M494.3 327.8L491.4 327M491.4 327L488.4 326.3M488.4 326.3L485.5 325.5M485.5 325.5L482.5 324.7M482.5 324.7L479.6 323.9M717.7 320.3L719.1 319.8M479.6 323.9L476.6 323.2M584.6 361.9L587.3 361M624.1 361.4L621.1 360.6M587.3 361L590 360.2M621.1 360.6L618.2 359.7M590 360.2L592.7 359.3M618.2 359.7L615.2 358.9M592.7 359.3L595.3 358.4M615.2 358.9L612.3 358.1M595.3 358.4L598 357.5M612.3 358.1L609.3 357.3M598 357.5L600.7 356.5M609.3 357.3L606.4 356.4M600.7 356.5L603.4 355.6M606.4 356.4L603.4 355.6M603.4 355.6L606.1 354.6M603.4 355.6L600.4 354.7M606.1 354.6L608.8 353.7M600.4 354.7L597.5 353.9M608.8 353.7L611.5 352.8M597.5 353.9L594.5 353M611.5 352.8L614.1 351.9M594.5 353L591.6 352.2M614.1 351.9L616.8 351.2M591.6 352.2L588.6 351.4M616.8 351.2L618.2 351M588.6 351.4L585.7 350.7M585.7 350.7L582.7 350.1M582.7 350.1L581.2 349.9M513.3 331.5L511.8 330.9M511.8 330.9L508.8 330M508.8 330L505.9 329.1M505.9 329.1L502.9 328.3M502.9 328.3L500 327.6M500 327.6L497 326.8M497 326.8L494.1 326.1M494.1 326.1L491.1 325.3M491.1 325.3L488.2 324.6M488.2 324.6L485.2 323.8M712.1 320.3L713.4 319.9M485.2 323.8L482.2 323M713.4 319.9L716.1 319M482.2 323L479.3 322.3M581.7 361.1L584.3 360.2M626.8 360.5L623.8 359.7M584.3 360.2L587 359.4M623.8 359.7L620.9 358.9M587 359.4L589.7 358.5M620.9 358.9L617.9 358M589.7 358.5L592.4 357.6M617.9 358L614.9 357.2M592.4 357.6L595.1 356.6M614.9 357.2L612 356.4M595.1 356.6L597.8 355.7M612 356.4L609 355.5M597.8 355.7L600.4 354.7M609 355.5L606.1 354.6M600.4 354.7L603.1 353.8M606.1 354.6L603.1 353.8M603.1 353.8L605.8 352.8M603.1 353.8L600.2 352.9M605.8 352.8L608.5 351.8M600.2 352.9L597.2 352M608.5 351.8L611.2 350.9M597.2 352L594.3 351.1M611.2 350.9L613.9 350.2M594.3 351.1L591.3 350.3M613.9 350.2L616.5 349.7M591.3 350.3L588.4 349.6M616.5 349.7L617.9 349.7M588.4 349.6L585.4 349M585.4 349L583.9 348.9M516 330.4L514.5 329.8M514.5 329.8L511.5 328.8M511.5 328.8L508.6 327.9M508.6 327.9L505.6 327.2M505.6 327.2L502.7 326.4M502.7 326.4L499.7 325.8M499.7 325.8L496.7 325.1M496.7 325.1L493.8 324.4M703.8 321.3L705.1 320.9M493.8 324.4L490.8 323.6M705.1 320.9L707.8 320M490.8 323.6L487.9 322.9M707.8 320L710.5 319.1M487.9 322.9L484.9 322.1M710.5 319.1L713.2 318.2M484.9 322.1L482 321.4M578.7 360.3L581.4 359.4M629.5 359.6L626.5 358.8M581.4 359.4L584.1 358.6M626.5 358.8L623.5 358M584.1 358.6L586.8 357.7M623.5 358L620.6 357.1M586.8 357.7L589.4 356.8M620.6 357.1L617.6 356.3M589.4 356.8L592.1 355.8M617.6 356.3L614.7 355.4M592.1 355.8L594.8 354.9M614.7 355.4L611.7 354.6M594.8 354.9L597.5 353.9M611.7 354.6L608.8 353.7M597.5 353.9L600.2 352.9M608.8 353.7L605.8 352.8M600.2 352.9L602.9 351.8M605.8 352.8L602.9 351.8M602.9 351.8L605.5 350.8M602.9 351.8L599.9 350.9M605.5 350.8L608.2 349.9M599.9 350.9L596.9 349.9M608.2 349.9L610.9 349.1M596.9 349.9L594 349M610.9 349.1L613.6 348.6M594 349L591 348.3M613.6 348.6L614.9 348.6M591 348.3L588.1 347.7M588.1 347.7L585.1 347.4M585.1 347.4L583.6 347.5M521.6 330.6L520.1 329.8M520.1 329.8L517.2 328.5M517.2 328.5L514.2 327.4M514.2 327.4L511.2 326.6M511.2 326.6L508.3 325.8M508.3 325.8L505.3 325.2M505.3 325.2L502.4 324.6M502.4 324.6L499.4 324M698.1 321.4L699.5 320.9M499.4 324L496.5 323.3M699.5 320.9L702.2 320M496.5 323.3L493.5 322.7M702.2 320L704.8 319.2M493.5 322.7L490.6 322M704.8 319.2L707.5 318.3M490.6 322L487.6 321.2M707.5 318.3L710.2 317.4M487.6 321.2L484.7 320.5M575.7 359.5L578.4 358.7M632.1 358.7L629.2 357.9M578.4 358.7L581.1 357.8M629.2 357.9L626.2 357.1M581.1 357.8L583.8 356.9M626.2 357.1L623.3 356.3M583.8 356.9L586.5 356M623.3 356.3L620.3 355.4M586.5 356L589.2 355M620.3 355.4L617.4 354.6M589.2 355L591.9 354M617.4 354.6L614.4 353.7M591.9 354L594.5 353M614.4 353.7L611.5 352.8M594.5 353L597.2 352M611.5 352.8L608.5 351.8M597.2 352L599.9 350.9M608.5 351.8L605.5 350.8M599.9 350.9L602.6 349.8M605.5 350.8L602.6 349.8M602.6 349.8L605.3 348.7M602.6 349.8L599.6 348.7M605.3 348.7L608 347.8M599.6 348.7L596.7 347.7M608 347.8L610.6 347.1M596.7 347.7L593.7 346.8M610.6 347.1L613.3 347M593.7 346.8L590.8 346.2M613.3 347L614.7 347.2M590.8 346.2L587.8 345.9M587.8 345.9L586.3 346M524.3 329.2L522.8 328.2M522.8 328.2L519.8 326.8M519.8 326.8L516.9 325.7M516.9 325.7L513.9 324.9M513.9 324.9L511 324.3M511 324.3L508 323.7M508 323.7L505.1 323.2M692.5 321.4L693.8 321M505.1 323.2L502.1 322.7M693.8 321L696.5 320.1M502.1 322.7L499.2 322.2M696.5 320.1L699.2 319.2M499.2 322.2L496.2 321.6M699.2 319.2L701.9 318.4M496.2 321.6L493.2 321M701.9 318.4L704.6 317.5M493.2 321L490.3 320.3M704.6 317.5L707.2 316.6M490.3 320.3L487.3 319.6M572.8 358.7L575.5 357.9M634.8 357.8L631.9 357M575.5 357.9L578.2 357M631.9 357L628.9 356.2M578.2 357L580.8 356.1M628.9 356.2L626 355.4M580.8 356.1L583.5 355.2M626 355.4L623 354.6M583.5 355.2L586.2 354.2M623 354.6L620 353.7M586.2 354.2L588.9 353.2M620 353.7L617.1 352.8M588.9 353.2L591.6 352.2M617.1 352.8L614.1 351.9M591.6 352.2L594.3 351.1M614.1 351.9L611.2 350.9M594.3 351.1L596.9 349.9M611.2 350.9L608.2 349.9M596.9 349.9L599.6 348.7M608.2 349.9L605.3 348.7M599.6 348.7L602.3 347.5M605.3 348.7L602.3 347.5M602.3 347.5L605 346.4M602.3 347.5L599.4 346.3M605 346.4L607.7 345.5M599.4 346.3L596.4 345.2M607.7 345.5L610.4 345M596.4 345.2L593.4 344.4M610.4 345L613 345.2M593.4 344.4L590.5 344M613 345.2L614.4 345.8M590.5 344L587.5 344.2M587.5 344.2L586.1 344.6M529.9 329.7L528.4 328.3M528.4 328.3L525.5 326.2M525.5 326.2L522.5 324.6M522.5 324.6L519.6 323.5M519.6 323.5L516.6 322.8M516.6 322.8L513.7 322.3M684.2 322.4L685.5 321.9M513.7 322.3L510.7 322M685.5 321.9L688.2 321M510.7 322L507.8 321.7M688.2 321L690.9 320.1M507.8 321.7L504.8 321.4M690.9 320.1L693.6 319.2M504.8 321.4L501.8 321M693.6 319.2L696.2 318.4M501.8 321L498.9 320.5M696.2 318.4L698.9 317.5M498.9 320.5L495.9 319.9M698.9 317.5L701.6 316.7M495.9 319.9L493 319.3M701.6 316.7L704.3 315.8M493 319.3L490 318.6M637.5 357L634.5 356.2M573.9 356.6L575.2 356.2M634.5 356.2L631.6 355.4M575.2 356.2L577.9 355.3M631.6 355.4L628.6 354.6M577.9 355.3L580.6 354.4M628.6 354.6L625.7 353.8M580.6 354.4L583.3 353.5M625.7 353.8L622.7 352.9M583.3 353.5L585.9 352.5M622.7 352.9L619.8 352.1M585.9 352.5L588.6 351.4M619.8 352.1L616.8 351.2M588.6 351.4L591.3 350.3M616.8 351.2L613.9 350.2M591.3 350.3L594 349M613.9 350.2L610.9 349.1M594 349L596.7 347.7M610.9 349.1L608 347.8M596.7 347.7L599.4 346.3M608 347.8L605 346.4M599.4 346.3L602 344.9M605 346.4L602 344.9M602 344.9L604.7 343.6M602 344.9L599.1 343.4M604.7 343.6L607.4 342.6M599.1 343.4L596.1 342.3M607.4 342.6L610.1 342.3M596.1 342.3L593.2 341.6M610.1 342.3L612.8 342.8M593.2 341.6L590.2 341.6M612.8 342.8L614.1 343.7M590.2 341.6L587.3 342.6M587.3 342.6L585.8 343.5M535.6 330.9L534.1 329M534.1 329L531.1 325.9M531.1 325.9L528.2 323.5M528.2 323.5L525.2 321.8M525.2 321.8L522.3 320.8M522.3 320.8L519.3 320.2M678.5 322.4L679.9 321.8M519.3 320.2L516.3 320M679.9 321.8L682.6 320.8M516.3 320L513.4 319.9M682.6 320.8L685.2 320M513.4 319.9L510.4 319.9M685.2 320L687.9 319.2M510.4 319.9L507.5 319.8M687.9 319.2L690.6 318.4M507.5 319.8L504.5 319.6M690.6 318.4L693.3 317.5M504.5 319.6L501.6 319.3M693.3 317.5L696 316.7M501.6 319.3L498.6 318.8M696 316.7L698.7 315.9M498.6 318.8L495.7 318.3M698.7 315.9L701.3 315M495.7 318.3L492.7 317.7M640.2 356.1L637.2 355.3M637.2 355.3L635.8 354.9M576.3 354.1L577.6 353.6M577.6 353.6L580.3 352.7M580.3 352.7L583 351.8M583 351.8L585.7 350.7M585.7 350.7L588.4 349.6M618 350.2L616.5 349.7M588.4 349.6L591 348.3M616.5 349.7L613.6 348.6M591 348.3L593.7 346.8M613.6 348.6L610.6 347.1M593.7 346.8L596.4 345.2M610.6 347.1L607.7 345.5M596.4 345.2L599.1 343.4M607.7 345.5L604.7 343.6M599.1 343.4L601.8 341.7M604.7 343.6L601.8 341.7M601.8 341.7L604.5 340.1M601.8 341.7L598.8 340M604.5 340.1L607.1 338.9M598.8 340L595.9 338.8M607.1 338.9L609.8 338.5M595.9 338.8L592.9 338.4M609.8 338.5L612.5 339.2M592.9 338.4L590 339.2M612.5 339.2L615.2 341.3M590 339.2L587 341.1M615.2 341.3L616.5 343.2M587 341.1L585.5 342.5M538.2 328.4L536.8 326.2M536.8 326.2L533.8 322.6M533.8 322.6L530.8 319.9M530.8 319.9L527.9 318.2M670.2 323.4L671.5 322.6M527.9 318.2L524.9 317.2M671.5 322.6L674.2 321.3M524.9 317.2L522 316.9M674.2 321.3L676.9 320.4M522 316.9L519 317.1M676.9 320.4L679.6 319.6M519 317.1L516.1 317.4M679.6 319.6L682.3 318.9M516.1 317.4L513.1 317.7M682.3 318.9L685 318.2M513.1 317.7L510.2 318M685 318.2L687.6 317.4M510.2 318L507.2 318.1M687.6 317.4L690.3 316.7M507.2 318.1L504.3 318M690.3 316.7L693 315.9M504.3 318L501.3 317.7M693 315.9L695.7 315M501.3 317.7L498.3 317.2M695.7 315L698.4 314.2M498.3 317.2L495.4 316.7M581.4 350.6L582.7 350.1M582.7 350.1L585.4 349M585.4 349L588.1 347.7M588.1 347.7L590.8 346.2M614.8 347.8L613.3 347M590.8 346.2L593.4 344.4M613.3 347L610.4 345M593.4 344.4L596.1 342.3M610.4 345L607.4 342.6M596.1 342.3L598.8 340M607.4 342.6L604.5 340.1M598.8 340L601.5 337.6M604.5 340.1L601.5 337.6M601.5 337.6L604.2 335.4M601.5 337.6L598.5 335.6M604.2 335.4L606.9 333.8M598.5 335.6L595.6 334.6M606.9 333.8L609.6 333.2M595.6 334.6L592.6 334.9M609.6 333.2L612.2 333.9M592.6 334.9L589.7 336.5M612.2 333.9L614.9 336.3M589.7 336.5L586.7 339.6M614.9 336.3L616.3 338.4M586.7 339.6L585.2 341.6M543.9 330.3L542.4 327.4M542.4 327.4L539.4 322.4M539.4 322.4L536.5 318.3M661.9 325.1L663.2 323.7M536.5 318.3L535 316.8M663.2 323.7L665.9 321.7M665.9 321.7L668.6 320.3M668.6 320.3L671.3 319.4M671.3 319.4L674 318.8M674 318.8L676.6 318.2M520.2 313.9L518.8 314.3M676.6 318.2L679.3 317.7M518.8 314.3L515.8 315.2M679.3 317.7L682 317.1M515.8 315.2L512.8 315.9M682 317.1L684.7 316.5M512.8 315.9L509.9 316.3M684.7 316.5L687.4 315.8M509.9 316.3L506.9 316.5M687.4 315.8L690.1 315M506.9 316.5L504 316.4M690.1 315L692.7 314.2M504 316.4L501 316.1M692.7 314.2L695.4 313.4M501 316.1L498.1 315.7M583.8 348.1L585.1 347.4M585.1 347.4L587.8 345.9M587.8 345.9L590.5 344M614.5 346.3L613 345.2M590.5 344L593.2 341.6M613 345.2L610.1 342.3M593.2 341.6L595.9 338.8M610.1 342.3L607.1 338.9M595.9 338.8L598.5 335.6M607.1 338.9L604.2 335.4M598.5 335.6L599.9 334M604.2 335.4L602.7 333.9M590.9 332.3L589.4 333.7M613.3 328.4L614.6 329.7M589.4 333.7L586.5 337.8M614.6 329.7L617.3 334.2M586.5 337.8L585 340.2M617.3 334.2L618.7 337.2M546.6 326.2L545.1 323M545.1 323L543.6 320.2M656.2 323.9L657.6 322.2M657.6 322.2L660.3 319.9M660.3 319.9L663 318.5M663 318.5L665.6 317.7M665.6 317.7L668.3 317.3M668.3 317.3L671 317M671 317L673.7 316.7M673.7 316.7L676.4 316.4M520 311.5L518.5 312.2M676.4 316.4L679.1 316M518.5 312.2L515.5 313.5M679.1 316L681.7 315.5M515.5 313.5L512.6 314.4M681.7 315.5L684.4 314.9M512.6 314.4L509.6 314.9M684.4 314.9L687.1 314.1M509.6 314.9L506.7 315.1M687.1 314.1L689.8 313.4M506.7 315.1L503.7 314.9M689.8 313.4L692.5 312.6M503.7 314.9L500.8 314.6M586.2 345.1L587.5 344.2M587.5 344.2L590.2 341.6M614.3 344.6L612.8 342.8M590.2 341.6L592.9 338.4M612.8 342.8L609.8 338.5M592.9 338.4L595.6 334.6M609.8 338.5L606.9 333.8M595.6 334.6L596.9 332.5M606.9 333.8L605.4 331.6M590.6 328.6L589.1 330.6M589.1 330.6L586.2 335.5M615.7 324.8L617.1 327.4M586.2 335.5L584.7 338.1M617.1 327.4L619.7 333.7M619.7 333.7L621.1 337.1M552.2 328.1L550.7 324.5M647.9 326.4L649.3 323.9M550.7 324.5L549.2 321M649.3 323.9L651.9 320M651.9 320L654.6 317.3M654.6 317.3L657.3 315.7M657.3 315.7L660 315M660 315L662.7 314.8M662.7 314.8L665.4 314.9M665.4 314.9L668 315M668 315L670.7 315.1M670.7 315.1L673.4 315.1M673.4 315.1L676.1 314.9M519.7 309.8L518.2 310.7M676.1 314.9L678.8 314.5M518.2 310.7L515.3 312.2M678.8 314.5L681.5 313.9M515.3 312.2L512.3 313.1M681.5 313.9L684.2 313.3M512.3 313.1L509.3 313.6M684.2 313.3L686.8 312.5M509.3 313.6L506.4 313.7M686.8 312.5L689.5 311.7M506.4 313.7L503.4 313.5M585.9 343.8L587.3 342.6M587.3 342.6L590 339.2M614 341.9L612.5 339.2M590 339.2L592.6 334.9M612.5 339.2L609.6 333.2M592.6 334.9L594 332.3M609.6 333.2L608.1 330.2M590.3 324.8L588.9 327.2M588.9 327.2L585.9 332.4M585.9 332.4L584.4 334.8M618.1 324.9L619.5 328.2M619.5 328.2L620.8 331.4M557.8 329.8L556.4 326.3M642.3 324.3L643.6 321.6M556.4 326.3L553.4 318.5M643.6 321.6L646.3 317.2M553.4 318.5L551.9 314.6M646.3 317.2L647.6 315.6M658.4 311.4L659.7 311.7M659.7 311.7L662.4 312.3M662.4 312.3L665.1 313M665.1 313L667.8 313.5M667.8 313.5L670.5 313.7M670.5 313.7L673.1 313.7M673.1 313.7L675.8 313.4M519.4 308.8L517.9 309.8M675.8 313.4L678.5 313M517.9 309.8L515 311.2M678.5 313L681.2 312.4M515 311.2L512 312.1M681.2 312.4L683.9 311.7M512 312.1L509.1 312.4M683.9 311.7L686.6 310.9M509.1 312.4L506.1 312.4M585.7 342.7L587 341.1M616.7 344.5L615.2 341.3M587 341.1L589.7 336.5M615.2 341.3L612.2 333.9M589.7 336.5L591 333.7M612.2 333.9L610.8 330.1M587.1 326L585.6 328.5M585.6 328.5L584.2 330.6M617.9 321.8L619.2 324.9M619.2 324.9L621.9 330.3M621.9 330.3L623.2 332M634 327.3L635.3 324.9M635.3 324.9L638 319.6M560.5 323.7L559 320.1M638 319.6L639.3 317.2M559 320.1L557.6 315.9M658.1 309.1L659.5 309.7M659.5 309.7L662.1 310.8M662.1 310.8L664.8 311.7M664.8 311.7L667.5 312.3M667.5 312.3L670.2 312.5M670.2 312.5L672.9 312.4M522.1 305.9L520.6 307.3M672.9 312.4L675.6 312M520.6 307.3L517.7 309.3M675.6 312L678.2 311.5M517.7 309.3L514.7 310.5M678.2 311.5L680.9 310.8M514.7 310.5L511.8 311.1M680.9 310.8L683.6 310.1M511.8 311.1L508.8 311.3M585.4 341.8L586.7 339.6M616.4 340.7L614.9 336.3M586.7 339.6L589.4 333.7M614.9 336.3L613.4 331.7M589.4 333.7L590.8 330.2M586.8 322.2L585.4 324.4M585.4 324.4L582.4 327.8M617.6 321.2L618.9 323.9M582.4 327.8L580.9 329.1M618.9 323.9L621.6 327.4M621.6 327.4L623 327.9M625.6 327.7L627 327M627 327L629.7 323.4M569.1 328.7L567.6 326.9M629.7 323.4L632.3 318.6M567.6 326.9L564.7 321.2M632.3 318.6L633.7 316M564.7 321.2L563.2 317.4M657.8 307.9L659.2 308.7M659.2 308.7L661.9 310M661.9 310L664.6 310.8M664.6 310.8L667.2 311.2M667.2 311.2L669.9 311.3M669.9 311.3L672.6 311.1M521.8 306L520.4 307.2M672.6 311.1L675.3 310.6M520.4 307.2L517.4 308.9M675.3 310.6L678 310M517.4 308.9L514.4 309.8M678 310L680.7 309.3M514.4 309.8L511.5 310.1M585.1 340.7L586.5 337.8M616.1 335.1L614.6 329.7M586.5 337.8L589.1 330.6M614.6 329.7L613.2 324.5M589.1 330.6L590.5 326.5M614.6 317.9L616 320.5M583.6 322.2L582.1 323.6M616 320.5L618.7 323.8M582.1 323.6L579.2 325.3M618.7 323.8L621.3 324.6M579.2 325.3L576.2 325.9M621.3 324.6L624 322.8M576.2 325.9L573.3 324.7M624 322.8L626.7 319M573.3 324.7L570.3 321.4M626.7 319L628 316.4M570.3 321.4L568.8 318.5M657.6 307.5L658.9 308.3M658.9 308.3L661.6 309.4M661.6 309.4L664.3 310M664.3 310L667 310.2M667 310.2L669.6 310.1M524.5 303.7L523 305.2M669.6 310.1L672.3 309.7M523 305.2L520.1 307.3M672.3 309.7L675 309.1M520.1 307.3L517.1 308.4M675 309.1L677.7 308.4M517.1 308.4L514.2 308.9M618.8 340.2L617.3 334.2M584.8 339.1L586.2 335.5M617.3 334.2L615.9 328.3M586.2 335.5L588.9 327.2M588.9 327.2L590.2 322.9M611.7 317.1L613 319.5M613 319.5L615.7 322.3M583.3 319.8L581.9 320.7M615.7 322.3L618.4 322.7M581.9 320.7L578.9 321.4M618.4 322.7L621.1 320.4M578.9 321.4L576 320.4M621.1 320.4L623.8 316M576 320.4L573 317M623.8 316L625.1 313.2M573 317L571.5 314M654.6 305.8L656 306.7M656 306.7L658.6 308.1M658.6 308.1L661.3 308.9M661.3 308.9L664 309.2M664 309.2L666.7 309.2M666.7 309.2L669.4 308.8M524.2 304.5L522.8 305.7M669.4 308.8L672.1 308.3M522.8 305.7L519.8 307.1M672.1 308.3L674.7 307.6M519.8 307.1L516.9 307.8M618.5 333.8L617.1 327.4M584.6 336.5L585.9 332.4M617.1 327.4L615.6 321.7M585.9 332.4L587.3 328M608.7 317.8L610.1 319.9M610.1 319.9L612.7 322.2M586 317.4L584.6 318.3M612.7 322.2L615.4 322M584.6 318.3L581.6 318.9M615.4 322L618.1 319.1M581.6 318.9L578.6 317.8M618.1 319.1L619.5 316.6M578.6 317.8L577.2 316M651.7 304.2L653 305.3M653 305.3L655.7 306.8M655.7 306.8L658.4 307.8M658.4 307.8L661.1 308.2M661.1 308.2L663.7 308.3M663.7 308.3L666.4 308M526.9 302.9L525.5 304.3M666.4 308L669.1 307.4M525.5 304.3L522.5 305.9M669.1 307.4L671.8 306.8M522.5 305.9L519.5 306.7M621.2 340.5L619.7 333.7M619.7 333.7L618.3 327.7M584.3 332.9L585.6 328.5M585.6 328.5L587 324.3M605.8 319.1L607.1 320.9M607.1 320.9L609.8 322.6M588.7 317.4L587.2 318.1M609.8 322.6L612.5 321.8M587.2 318.1L584.3 318.4M612.5 321.8L615.2 318.4M584.3 318.4L581.3 317M615.2 318.4L616.5 315.6M581.3 317L579.8 315M648.7 302.9L650 304M650 304L652.7 305.7M652.7 305.7L655.4 306.8M655.4 306.8L658.1 307.3M658.1 307.3L660.8 307.4M660.8 307.4L663.5 307.1M529.6 301.6L528.1 303M663.5 307.1L666.1 306.6M528.1 303L525.2 304.8M666.1 306.6L668.8 306M525.2 304.8L522.2 305.7M620.9 334.4L619.5 328.2M619.5 328.2L618 323.4M584 328.6L585.4 324.4M585.4 324.4L586.7 320.9M600.1 317L601.5 318.8M601.5 318.8L604.2 321.8M594.4 317.8L592.9 318.6M604.2 321.8L606.8 323.1M592.9 318.6L589.9 319.5M606.8 323.1L609.5 321.8M589.9 319.5L587 319.4M609.5 321.8L612.2 317.9M587 319.4L584 317.5M612.2 317.9L613.5 314.9M584 317.5L582.5 315.3M645.8 301.8L647.1 303M647.1 303L649.8 304.8M649.8 304.8L652.5 305.9M652.5 305.9L655.1 306.4M655.1 306.4L657.8 306.5M657.8 306.5L660.5 306.3M532.3 300.4L530.8 301.9M660.5 306.3L663.2 305.8M530.8 301.9L527.9 303.8M663.2 305.8L665.9 305.2M527.9 303.8L524.9 304.8M620.7 329.7L619.2 324.9M581.1 331.9L582.4 327.8M619.2 324.9L617.7 321.7M582.4 327.8L583.8 324.4M602.9 318L601.5 318.8M597.2 318.6L598.5 320.1M601.5 318.8L598.5 320.1M598.5 320.1L601.2 322.6M598.5 320.1L595.6 321.1M601.2 322.6L603.9 323.3M595.6 321.1L592.6 321.5M603.9 323.3L606.6 321.6M592.6 321.5L589.6 320.9M606.6 321.6L609.2 317.4M589.6 320.9L586.7 318.6M609.2 317.4L610.6 314.4M586.7 318.6L583.7 313.8M583.7 313.8L582.3 309.9M642.8 301.1L644.1 302.3M644.1 302.3L646.8 304M646.8 304L649.5 305.1M649.5 305.1L652.2 305.7M652.2 305.7L654.9 305.7M654.9 305.7L657.6 305.5M535 299.5L533.5 301.1M657.6 305.5L660.2 305M533.5 301.1L530.5 302.9M660.2 305L662.9 304.4M530.5 302.9L527.6 303.9M623.4 335L621.9 330.3M621.9 330.3L618.9 323.9M580.8 327L582.1 323.6M618.9 323.9L616 320.5M582.1 323.6L583.5 321.2M616 320.5L613 319.5M613 319.5L610.1 319.9M610.1 319.9L607.1 320.9M591.5 317.6L592.9 318.6M607.1 320.9L604.2 321.8M592.9 318.6L595.6 321.1M604.2 321.8L601.2 322.6M595.6 321.1L598.2 323M601.2 322.6L598.2 323M598.2 323L599.6 323.2M598.2 323L595.3 322.9M602.3 322.3L603.6 321.3M595.3 322.9L592.3 321.9M603.6 321.3L606.3 317M592.3 321.9L589.4 319.3M606.3 317L607.6 314M589.4 319.3L586.4 314.4M586.4 314.4L584.9 310.5M639.8 300.6L641.2 301.7M641.2 301.7L643.9 303.4M643.9 303.4L646.5 304.5M646.5 304.5L649.2 304.9M649.2 304.9L651.9 305M651.9 305L654.6 304.7M537.7 298.9L536.2 300.4M654.6 304.7L657.3 304.2M536.2 300.4L533.2 302.2M657.3 304.2L660 303.6M533.2 302.2L530.3 303.1M623.1 330.5L621.6 327.4M577.8 328.6L579.2 325.3M621.6 327.4L618.7 323.8M579.2 325.3L581.9 320.7M618.7 323.8L615.7 322.3M581.9 320.7L584.6 318.3M615.7 322.3L612.7 322.2M584.6 318.3L587.2 318.1M612.7 322.2L609.8 322.6M587.2 318.1L589.9 319.5M609.8 322.6L606.8 323.1M589.9 319.5L592.6 321.5M606.8 323.1L603.9 323.3M592.6 321.5L595.3 322.9M603.9 323.3L602.4 323.3M595.3 322.9L596.6 322.9M599.3 321.8L600.7 320.8M600.7 320.8L603.3 316.6M593.5 320.3L592.1 319M603.3 316.6L604.7 313.6M592.1 319L589.1 314.1M589.1 314.1L587.6 310.4M636.9 300.4L638.2 301.4M638.2 301.4L640.9 303M640.9 303L643.6 303.9M643.6 303.9L646.3 304.3M646.3 304.3L649 304.3M649 304.3L651.6 304M540.3 298.6L538.9 299.9M651.6 304L654.3 303.5M538.9 299.9L535.9 301.5M654.3 303.5L657 302.8M535.9 301.5L533 302.4M574.9 328.9L576.2 325.9M622.8 326.5L621.3 324.6M576.2 325.9L578.9 321.4M621.3 324.6L618.4 322.7M578.9 321.4L581.6 318.9M618.4 322.7L615.4 322M581.6 318.9L584.3 318.4M615.4 322L612.5 321.8M584.3 318.4L587 319.4M612.5 321.8L609.5 321.8M587 319.4L589.6 320.9M609.5 321.8L606.6 321.6M589.6 320.9L592.3 321.9M606.6 321.6L603.6 321.3M592.3 321.9L593.7 321.8M603.6 321.3L600.7 320.8M596.4 320.6L597.7 319.6M600.7 320.8L597.7 319.6M597.7 319.6L600.4 315.6M597.7 319.6L594.7 317.1M600.4 315.6L603.1 310.2M594.7 317.1L591.8 312.7M603.1 310.2L604.4 307.1M591.8 312.7L590.3 309.3M633.9 300.4L635.3 301.3M635.3 301.3L638 302.6M638 302.6L640.6 303.4M640.6 303.4L643.3 303.7M643.3 303.7L646 303.6M646 303.6L648.7 303.3M543 298.4L541.6 299.6M648.7 303.3L651.4 302.7M541.6 299.6L538.6 301M651.4 302.7L654.1 302M538.6 301L535.6 301.7M628.5 330.1L627 327M571.9 327.6L573.3 324.7M627 327L624 322.8M573.3 324.7L576 320.4M624 322.8L621.1 320.4M576 320.4L578.6 317.8M621.1 320.4L618.1 319.1M578.6 317.8L581.3 317M618.1 319.1L615.2 318.4M581.3 317L584 317.5M615.2 318.4L612.2 317.9M584 317.5L586.7 318.6M612.2 317.9L609.2 317.4M586.7 318.6L589.4 319.3M609.2 317.4L606.3 317M589.4 319.3L592.1 319M606.3 317L603.3 316.6M592.1 319L594.7 317.1M603.3 316.6L600.4 315.6M594.7 317.1L597.4 313.6M600.4 315.6L597.4 313.6M597.4 313.6L598.8 311.3M597.4 313.6L594.5 310M594.5 310L593 307.2M628.3 298.7L629.6 299.7M629.6 299.7L632.3 301.3M632.3 301.3L635 302.4M635 302.4L637.7 303M637.7 303L640.4 303.1M640.4 303.1L643.1 303M548.7 295.8L547.2 297.3M643.1 303L645.7 302.6M547.2 297.3L544.2 299.4M645.7 302.6L648.4 302M544.2 299.4L541.3 300.6M648.4 302L651.1 301.3M541.3 300.6L538.3 301.1M566.3 330L567.6 326.9M631.1 326.6L629.7 323.4M567.6 326.9L570.3 321.4M629.7 323.4L626.7 319M570.3 321.4L573 317M626.7 319L623.8 316M573 317L574.3 315.6M623.8 316L622.3 315.1M582.4 313.4L583.7 313.8M583.7 313.8L586.4 314.4M586.4 314.4L589.1 314.1M589.1 314.1L591.8 312.7M604.5 310.4L603.1 310.2M591.8 312.7L594.5 310M603.1 310.2L601.6 309.5M594.5 310L595.8 308.1M625.3 299.2L626.7 300.1M626.7 300.1L629.4 301.3M629.4 301.3L632 302.2M632 302.2L634.7 302.6M634.7 302.6L637.4 302.6M637.4 302.6L640.1 302.3M551.4 296.3L549.9 297.6M640.1 302.3L642.8 301.8M549.9 297.6L546.9 299.2M642.8 301.8L645.5 301.2M546.9 299.2L544 300.1M645.5 301.2L648.1 300.5M544 300.1L541 300.5M636.8 328.7L635.3 324.9M563.3 324.3L564.7 321.2M635.3 324.9L632.3 318.6M564.7 321.2L566 318.4M632.3 318.6L630.9 316.2M619.7 298.2L621 299.1M621 299.1L623.7 300.4M623.7 300.4L626.4 301.4M626.4 301.4L629.1 301.9M629.1 301.9L631.8 302.1M631.8 302.1L634.5 302M557 294.4L555.5 295.8M634.5 302L637.1 301.7M555.5 295.8L552.6 297.8M637.1 301.7L639.8 301.1M552.6 297.8L549.6 299.1M639.8 301.1L642.5 300.5M549.6 299.1L546.6 299.7M642.5 300.5L645.2 299.7M546.6 299.7L543.7 299.9M555 329L556.4 326.3M556.4 326.3L559 320.1M639.5 323.3L638 319.6M559 320.1L560.4 316.8M638 319.6L636.5 316.5M616.7 298.9L618.1 299.6M618.1 299.6L620.8 300.6M620.8 300.6L623.5 301.3M623.5 301.3L626.1 301.7M626.1 301.7L628.8 301.7M628.8 301.7L631.5 301.5M559.7 295.5L558.2 296.6M631.5 301.5L634.2 301M558.2 296.6L555.2 298.1M634.2 301L636.9 300.4M555.2 298.1L552.3 298.9M636.9 300.4L639.6 299.7M552.3 298.9L549.3 299.3M639.6 299.7L642.2 299M549.3 299.3L546.4 299.3M549.4 327L550.7 324.5M550.7 324.5L553.4 318.5M645.1 325.3L643.6 321.6M553.4 318.5L554.7 315.1M643.6 321.6L642.1 318.2M611.1 298.1L612.4 298.8M612.4 298.8L615.1 299.9M615.1 299.9L617.8 300.7M617.8 300.7L620.5 301.2M620.5 301.2L623.2 301.3M623.2 301.3L625.9 301.2M565.3 294.6L563.8 295.7M625.9 301.2L628.5 300.9M563.8 295.7L560.9 297.2M628.5 300.9L631.2 300.4M560.9 297.2L557.9 298.2M631.2 300.4L633.9 299.7M557.9 298.2L555 298.7M633.9 299.7L636.6 299M555 298.7L552 298.8M636.6 299L639.3 298.2M552 298.8L549.1 298.6M541.1 329L542.4 327.4M542.4 327.4L545.1 323M545.1 323L546.4 320.2M650.7 327.1L649.3 323.9M649.3 323.9L646.3 317.2M646.3 317.2L644.8 314M608.1 298.4L609.5 299M609.5 299L612.2 300M612.2 300L614.9 300.6M614.9 300.6L617.5 300.9M617.5 300.9L620.2 300.9M571 294.3L569.5 295.2M620.2 300.9L622.9 300.7M569.5 295.2L566.5 296.6M622.9 300.7L625.6 300.3M566.5 296.6L563.6 297.6M625.6 300.3L628.3 299.7M563.6 297.6L560.6 298.2M628.3 299.7L631 299M560.6 298.2L557.7 298.4M631 299L633.6 298.2M557.7 298.4L554.7 298.3M633.6 298.2L636.3 297.4M554.7 298.3L551.7 298M532.7 330L534.1 329M534.1 329L536.8 326.2M536.8 326.2L539.4 322.4M539.4 322.4L540.8 319.8M653.4 322.8L651.9 320M651.9 320L650.5 317M602.5 297L603.9 297.8M603.9 297.8L606.5 299.1M606.5 299.1L609.2 300M609.2 300L611.9 300.4M611.9 300.4L614.6 300.6M576.6 294.6L575.1 295.3M614.6 300.6L617.3 300.5M575.1 295.3L572.2 296.4M617.3 300.5L620 300.1M572.2 296.4L569.2 297.3M620 300.1L622.6 299.6M569.2 297.3L566.2 297.8M622.6 299.6L625.3 299M566.2 297.8L563.3 298M625.3 299L628 298.2M563.3 298L560.3 298M628 298.2L630.7 297.5M560.3 298L557.4 297.7M630.7 297.5L633.4 296.6M557.4 297.7L554.4 297.3M527.1 329.2L528.4 328.3M528.4 328.3L531.1 325.9M531.1 325.9L533.8 322.6M533.8 322.6L536.5 318.3M536.5 318.3L537.8 315.5M659.1 324.4L657.6 322.2M657.6 322.2L654.6 317.3M654.6 317.3L653.2 314.7M599.6 296.9L600.9 297.8M600.9 297.8L603.6 299M603.6 299L606.3 299.8M606.3 299.8L608.9 300.1M582.2 295.5L580.8 295.8M608.9 300.1L611.6 300.2M580.8 295.8L577.8 296.6M611.6 300.2L614.3 299.9M577.8 296.6L574.8 297.2M614.3 299.9L617 299.5M574.8 297.2L571.9 297.6M617 299.5L619.7 298.9M571.9 297.6L568.9 297.8M619.7 298.9L622.4 298.2M568.9 297.8L566 297.8M622.4 298.2L625 297.5M566 297.8L563 297.5M625 297.5L627.7 296.7M563 297.5L560.1 297.1M627.7 296.7L630.4 295.8M560.1 297.1L557.1 296.5M518.8 330.4L520.1 329.8M520.1 329.8L522.8 328.2M522.8 328.2L525.5 326.2M525.5 326.2L528.2 323.5M528.2 323.5L530.8 319.9M530.8 319.9L532.2 317.6M664.7 325.2L663.2 323.7M663.2 323.7L660.3 319.9M660.3 319.9L657.3 315.7M657.3 315.7L655.8 313.5M596.6 296.9L597.9 297.8M593.8 296.1L592.3 296.2M597.9 297.8L600.6 298.9M592.3 296.2L589.3 296.4M600.6 298.9L603.3 299.5M589.3 296.4L586.4 296.7M603.3 299.5L606 299.8M586.4 296.7L583.4 297.1M606 299.8L608.7 299.7M583.4 297.1L580.5 297.4M608.7 299.7L611.4 299.4M580.5 297.4L577.5 297.7M611.4 299.4L614 298.9M577.5 297.7L574.6 297.7M614 298.9L616.7 298.2M574.6 297.7L571.6 297.6M616.7 298.2L619.4 297.5M571.6 297.6L568.7 297.3M619.4 297.5L622.1 296.7M568.7 297.3L565.7 296.9M622.1 296.7L624.8 295.9M565.7 296.9L562.8 296.4M624.8 295.9L627.5 295.1M562.8 296.4L559.8 295.8M507.8 332.4L509.1 331.9M509.1 331.9L511.8 330.9M511.8 330.9L514.5 329.8M514.5 329.8L517.2 328.5M517.2 328.5L519.8 326.8M519.8 326.8L522.5 324.6M522.5 324.6L525.2 321.8M525.2 321.8L527.9 318.2M527.9 318.2L529.2 315.9M667.4 323L665.9 321.7M665.9 321.7L663 318.5M663 318.5L660 315M660 315L658.5 313.1M605.3 297.8L603.9 297.8M603.9 297.8L600.9 297.8M591 295L592.3 296.2M600.9 297.8L597.9 297.8M592.3 296.2L595 297.7M597.9 297.8L595 297.7M595 297.7L597.7 298.7M595 297.7L592 297.8M597.7 298.7L600.4 299.2M592 297.8L589.1 297.8M600.4 299.2L603 299.3M589.1 297.8L586.1 297.9M603 299.3L605.7 299.2M586.1 297.9L583.2 297.9M605.7 299.2L608.4 298.7M583.2 297.9L580.2 297.8M608.4 298.7L611.1 298.2M580.2 297.8L577.3 297.6M611.1 298.2L613.8 297.5M577.3 297.6L574.3 297.2M613.8 297.5L616.5 296.8M574.3 297.2L571.3 296.8M616.5 296.8L619.1 296M571.3 296.8L568.4 296.3M619.1 296L621.8 295.1M568.4 296.3L565.4 295.7M621.8 295.1L624.5 294.3M565.4 295.7L562.5 295M499.4 333.3L500.8 332.9M500.8 332.9L503.5 332M503.5 332L506.2 331M506.2 331L508.8 330M508.8 330L511.5 328.8M511.5 328.8L514.2 327.4M514.2 327.4L516.9 325.7M516.9 325.7L519.6 323.5M519.6 323.5L522.3 320.8M522.3 320.8L524.9 317.2M673 323.5L671.5 322.6M524.9 317.2L526.3 315M671.5 322.6L668.6 320.3M668.6 320.3L665.6 317.7M665.6 317.7L662.7 314.8M662.7 314.8L659.7 311.7M659.7 311.7L658.2 310.1M613.9 298.5L612.4 298.8M612.4 298.8L609.5 299M609.5 299L606.5 299.1M606.5 299.1L603.6 299M588 295.4L589.3 296.4M603.6 299L600.6 298.9M589.3 296.4L592 297.8M600.6 298.9L597.7 298.7M592 297.8L594.7 298.6M597.7 298.7L594.7 298.6M594.7 298.6L597.4 298.9M594.7 298.6L591.8 298.4M597.4 298.9L600.1 298.9M591.8 298.4L588.8 298.2M600.1 298.9L602.8 298.6M588.8 298.2L585.8 297.9M602.8 298.6L605.4 298.1M585.8 297.9L582.9 297.6M605.4 298.1L608.1 297.5M582.9 297.6L579.9 297.2M608.1 297.5L610.8 296.8M579.9 297.2L577 296.7M610.8 296.8L613.5 296M577 296.7L574 296.2M613.5 296L616.2 295.2M574 296.2L571.1 295.6M616.2 295.2L618.9 294.3M571.1 295.6L568.1 294.9M618.9 294.3L621.6 293.5M568.1 294.9L565.2 294.2M491.1 334.3L492.5 333.8M492.5 333.8L495.1 333M495.1 333L497.8 332.1M497.8 332.1L500.5 331.1M500.5 331.1L503.2 330.2M503.2 330.2L505.9 329.1M505.9 329.1L508.6 327.9M508.6 327.9L511.2 326.6M511.2 326.6L513.9 324.9M513.9 324.9L516.6 322.8M516.6 322.8L519.3 320.2M519.3 320.2L522 316.9M675.7 322.1L674.2 321.3M522 316.9L523.3 314.9M674.2 321.3L671.3 319.4M671.3 319.4L668.3 317.3M668.3 317.3L665.4 314.9M665.4 314.9L662.4 312.3M662.4 312.3L659.5 309.7M659.5 309.7L658 308.4M622.5 298.7L621 299.1M621 299.1L618.1 299.6M618.1 299.6L615.1 299.9M615.1 299.9L612.2 300M612.2 300L609.2 300M609.2 300L606.3 299.8M585 295.9L586.4 296.7M606.3 299.8L603.3 299.5M586.4 296.7L589.1 297.8M603.3 299.5L600.4 299.2M589.1 297.8L591.8 298.4M600.4 299.2L597.4 298.9M591.8 298.4L594.4 298.5M597.4 298.9L594.4 298.5M594.4 298.5L597.1 298.4M594.4 298.5L591.5 298.1M597.1 298.4L599.8 298M591.5 298.1L588.5 297.7M599.8 298L602.5 297.4M588.5 297.7L585.6 297.2M602.5 297.4L605.2 296.8M585.6 297.2L582.6 296.7M605.2 296.8L607.9 296M582.6 296.7L579.7 296.1M607.9 296L610.5 295.2M579.7 296.1L576.7 295.5M610.5 295.2L613.2 294.4M576.7 295.5L573.8 294.8M613.2 294.4L615.9 293.5M573.8 294.8L570.8 294.1M615.9 293.5L618.6 292.7M570.8 294.1L567.8 293.3M484.1 334.8L486.8 333.9M486.8 333.9L489.5 333M489.5 333L492.2 332.2M492.2 332.2L494.9 331.3M494.9 331.3L497.6 330.3M497.6 330.3L500.2 329.4M500.2 329.4L502.9 328.3M502.9 328.3L505.6 327.2M505.6 327.2L508.3 325.8M508.3 325.8L511 324.3M511 324.3L513.7 322.3M513.7 322.3L516.3 320M681.3 322.4L679.9 321.8M516.3 320L519 317.1M679.9 321.8L676.9 320.4M519 317.1L520.4 315.3M676.9 320.4L674 318.8M674 318.8L671 317M671 317L668 315M668 315L665.1 313M665.1 313L662.1 310.8M662.1 310.8L659.2 308.7M659.2 308.7L657.7 307.7M631.1 299.6L629.6 299.7M629.6 299.7L626.7 300.1M626.7 300.1L623.7 300.4M623.7 300.4L620.8 300.6M620.8 300.6L617.8 300.7M617.8 300.7L614.9 300.6M614.9 300.6L611.9 300.4M579.4 294.9L580.8 295.8M611.9 300.4L608.9 300.1M580.8 295.8L583.4 297.1M608.9 300.1L606 299.8M583.4 297.1L586.1 297.9M606 299.8L603 299.3M586.1 297.9L588.8 298.2M603 299.3L600.1 298.9M588.8 298.2L591.5 298.1M600.1 298.9L597.1 298.4M591.5 298.1L594.2 297.9M597.1 298.4L594.2 297.9M594.2 297.9L596.9 297.4M594.2 297.9L591.2 297.3M596.9 297.4L599.5 296.8M591.2 297.3L588.3 296.7M599.5 296.8L602.2 296M588.3 296.7L585.3 296.1M602.2 296L604.9 295.3M585.3 296.1L582.4 295.4M604.9 295.3L607.6 294.5M582.4 295.4L579.4 294.7M607.6 294.5L610.3 293.6M579.4 294.7L576.4 294M610.3 293.6L613 292.8M576.4 294L573.5 293.2M613 292.8L615.6 291.9M573.5 293.2L570.5 292.5M481.2 334L483.9 333.1M483.9 333.1L486.6 332.2M486.6 332.2L489.2 331.4M489.2 331.4L491.9 330.5M491.9 330.5L494.6 329.5M494.6 329.5L497.3 328.6M497.3 328.6L500 327.6M500 327.6L502.7 326.4M502.7 326.4L505.3 325.2M505.3 325.2L508 323.7M508 323.7L510.7 322M687 322.4L685.5 321.9M510.7 322L513.4 319.9M685.5 321.9L682.6 320.8M513.4 319.9L516.1 317.4M682.6 320.8L679.6 319.6M516.1 317.4L518.8 314.3M679.6 319.6L676.6 318.2M518.8 314.3L520.1 312.5M676.6 318.2L673.7 316.7M673.7 316.7L670.7 315.1M670.7 315.1L667.8 313.5M667.8 313.5L664.8 311.7M664.8 311.7L661.9 310M661.9 310L658.9 308.3M658.9 308.3L656 306.7M656 306.7L653 305.3M653 305.3L650 304M650 304L647.1 303M647.1 303L644.1 302.3M644.1 302.3L641.2 301.7M641.2 301.7L638.2 301.4M638.2 301.4L635.3 301.3M635.3 301.3L632.3 301.3M632.3 301.3L629.4 301.3M629.4 301.3L626.4 301.4M626.4 301.4L623.5 301.3M623.5 301.3L620.5 301.2M620.5 301.2L617.5 300.9M573.8 294.4L575.1 295.3M617.5 300.9L614.6 300.6M575.1 295.3L577.8 296.6M614.6 300.6L611.6 300.2M577.8 296.6L580.5 297.4M611.6 300.2L608.7 299.7M580.5 297.4L583.2 297.9M608.7 299.7L605.7 299.2M583.2 297.9L585.8 297.9M605.7 299.2L602.8 298.6M585.8 297.9L588.5 297.7M602.8 298.6L599.8 298M588.5 297.7L591.2 297.3M599.8 298L596.9 297.4M591.2 297.3L593.9 296.7M596.9 297.4L593.9 296.7M593.9 296.7L596.6 296.1M593.9 296.7L590.9 296.1M596.6 296.1L599.3 295.3M590.9 296.1L588 295.4M599.3 295.3L602 294.5M588 295.4L585 294.7M602 294.5L604.6 293.7M585 294.7L582.1 293.9M604.6 293.7L607.3 292.8M582.1 293.9L579.1 293.2M607.3 292.8L610 292M579.1 293.2L576.2 292.4M610 292L612.7 291.1M576.2 292.4L573.2 291.6M478.2 333.2L480.9 332.3M480.9 332.3L483.6 331.4M483.6 331.4L486.3 330.6M486.3 330.6L489 329.7M489 329.7L491.6 328.8M491.6 328.8L494.3 327.8M494.3 327.8L497 326.8M497 326.8L499.7 325.8M499.7 325.8L502.4 324.6M502.4 324.6L505.1 323.2M505.1 323.2L507.8 321.7M689.7 321.4L688.2 321M507.8 321.7L510.4 319.9M688.2 321L685.2 320M510.4 319.9L513.1 317.7M685.2 320L682.3 318.9M513.1 317.7L515.8 315.2M682.3 318.9L679.3 317.7M515.8 315.2L518.5 312.2M679.3 317.7L676.4 316.4M518.5 312.2L519.8 310.5M676.4 316.4L673.4 315.1M673.4 315.1L670.5 313.7M670.5 313.7L667.5 312.3M667.5 312.3L664.6 310.8M664.6 310.8L661.6 309.4M661.6 309.4L658.6 308.1M658.6 308.1L655.7 306.8M655.7 306.8L652.7 305.7M652.7 305.7L649.8 304.8M649.8 304.8L646.8 304M646.8 304L643.9 303.4M643.9 303.4L640.9 303M640.9 303L638 302.6M638 302.6L635 302.4M635 302.4L632 302.2M632 302.2L629.1 301.9M629.1 301.9L626.1 301.7M626.1 301.7L623.2 301.3M568.1 294.4L569.5 295.2M623.2 301.3L620.2 300.9M569.5 295.2L572.2 296.4M620.2 300.9L617.3 300.5M572.2 296.4L574.8 297.2M617.3 300.5L614.3 299.9M574.8 297.2L577.5 297.7M614.3 299.9L611.4 299.4M577.5 297.7L580.2 297.8M611.4 299.4L608.4 298.7M580.2 297.8L582.9 297.6M608.4 298.7L605.4 298.1M582.9 297.6L585.6 297.2M605.4 298.1L602.5 297.4M585.6 297.2L588.3 296.7M602.5 297.4L599.5 296.8M588.3 296.7L590.9 296.1M599.5 296.8L596.6 296.1M590.9 296.1L593.6 295.3M596.6 296.1L593.6 295.3M593.6 295.3L596.3 294.6M593.6 295.3L590.7 294.6M596.3 294.6L599 293.7M590.7 294.6L587.7 293.9M599 293.7L601.7 292.9M587.7 293.9L584.8 293.1M601.7 292.9L604.4 292M584.8 293.1L581.8 292.3M604.4 292L607 291.2M581.8 292.3L578.9 291.5M607 291.2L609.7 290.3M578.9 291.5L575.9 290.8M475.3 332.4L478 331.5M478 331.5L480.6 330.6M480.6 330.6L483.3 329.8M483.3 329.8L486 328.9M486 328.9L488.7 328M488.7 328L491.4 327M491.4 327L494.1 326.1M494.1 326.1L496.7 325.1M496.7 325.1L499.4 324M499.4 324L502.1 322.7M695.3 321.4L693.8 321M502.1 322.7L504.8 321.4M693.8 321L690.9 320.1M504.8 321.4L507.5 319.8M690.9 320.1L687.9 319.2M507.5 319.8L510.2 318M687.9 319.2L685 318.2M510.2 318L512.8 315.9M685 318.2L682 317.1M512.8 315.9L515.5 313.5M682 317.1L679.1 316M515.5 313.5L518.2 310.7M679.1 316L676.1 314.9M518.2 310.7L519.6 309.2M676.1 314.9L673.1 313.7M673.1 313.7L670.2 312.5M670.2 312.5L667.2 311.2M667.2 311.2L664.3 310M664.3 310L661.3 308.9M661.3 308.9L658.4 307.8M658.4 307.8L655.4 306.8M655.4 306.8L652.5 305.9M652.5 305.9L649.5 305.1M649.5 305.1L646.5 304.5M646.5 304.5L643.6 303.9M643.6 303.9L640.6 303.4M640.6 303.4L637.7 303M637.7 303L634.7 302.6M634.7 302.6L631.8 302.1M631.8 302.1L628.8 301.7M562.5 295L563.8 295.7M628.8 301.7L625.9 301.2M563.8 295.7L566.5 296.6M625.9 301.2L622.9 300.7M566.5 296.6L569.2 297.3M622.9 300.7L620 300.1M569.2 297.3L571.9 297.6M620 300.1L617 299.5M571.9 297.6L574.6 297.7M617 299.5L614 298.9M574.6 297.7L577.3 297.6M614 298.9L611.1 298.2M577.3 297.6L579.9 297.2M611.1 298.2L608.1 297.5M579.9 297.2L582.6 296.7M608.1 297.5L605.2 296.8M582.6 296.7L585.3 296.1M605.2 296.8L602.2 296M585.3 296.1L588 295.4M602.2 296L599.3 295.3M588 295.4L590.7 294.6M599.3 295.3L596.3 294.6M590.7 294.6L593.4 293.8M596.3 294.6L593.4 293.8M593.4 293.8L596 293M593.4 293.8L590.4 293M596 293L598.7 292.1M590.4 293L587.4 292.3M598.7 292.1L601.4 291.2M587.4 292.3L584.5 291.5M601.4 291.2L604.1 290.4M584.5 291.5L581.5 290.7M604.1 290.4L606.8 289.5M581.5 290.7L578.6 289.9M472.3 331.6L475 330.7M475 330.7L477.7 329.9M477.7 329.9L480.4 329M480.4 329L483.1 328.1M483.1 328.1L485.7 327.2M485.7 327.2L488.4 326.3M488.4 326.3L491.1 325.3M491.1 325.3L493.8 324.4M493.8 324.4L496.5 323.3M700.9 321.3L699.5 320.9M496.5 323.3L499.2 322.2M699.5 320.9L696.5 320.1M499.2 322.2L501.8 321M696.5 320.1L693.6 319.2M501.8 321L504.5 319.6M693.6 319.2L690.6 318.4M504.5 319.6L507.2 318.1M690.6 318.4L687.6 317.4M507.2 318.1L509.9 316.3M687.6 317.4L684.7 316.5M509.9 316.3L512.6 314.4M684.7 316.5L681.7 315.5M512.6 314.4L515.3 312.2M681.7 315.5L678.8 314.5M515.3 312.2L517.9 309.8M678.8 314.5L675.8 313.4M517.9 309.8L520.6 307.3M675.8 313.4L672.9 312.4M520.6 307.3L522 306M672.9 312.4L669.9 311.3M669.9 311.3L667 310.2M667 310.2L664 309.2M664 309.2L661.1 308.2M661.1 308.2L658.1 307.3M658.1 307.3L655.1 306.4M655.1 306.4L652.2 305.7M652.2 305.7L649.2 304.9M649.2 304.9L646.3 304.3M646.3 304.3L643.3 303.7M643.3 303.7L640.4 303.1M640.4 303.1L637.4 302.6M554.2 295.4L555.5 295.8M637.4 302.6L634.5 302M555.5 295.8L558.2 296.6M634.5 302L631.5 301.5M558.2 296.6L560.9 297.2M631.5 301.5L628.5 300.9M560.9 297.2L563.6 297.6M628.5 300.9L625.6 300.3M563.6 297.6L566.2 297.8M625.6 300.3L622.6 299.6M566.2 297.8L568.9 297.8M622.6 299.6L619.7 298.9M568.9 297.8L571.6 297.6M619.7 298.9L616.7 298.2M571.6 297.6L574.3 297.2M616.7 298.2L613.8 297.5M574.3 297.2L577 296.7M613.8 297.5L610.8 296.8M577 296.7L579.7 296.1M610.8 296.8L607.9 296M579.7 296.1L582.4 295.4M607.9 296L604.9 295.3M582.4 295.4L585 294.7M604.9 295.3L602 294.5M585 294.7L587.7 293.9M602 294.5L599 293.7M587.7 293.9L590.4 293M599 293.7L596 293M590.4 293L593.1 292.2M596 293L593.1 292.2M593.1 292.2L595.8 291.3M593.1 292.2L590.1 291.4M595.8 291.3L598.5 290.5M590.1 291.4L587.2 290.6M598.5 290.5L601.1 289.6M587.2 290.6L584.2 289.8M601.1 289.6L603.8 288.7M584.2 289.8L581.3 289M469.4 330.8L472 329.9M472 329.9L474.7 329.1M474.7 329.1L477.4 328.2M477.4 328.2L480.1 327.3M480.1 327.3L482.8 326.4M482.8 326.4L485.5 325.5M485.5 325.5L488.2 324.6M488.2 324.6L490.8 323.6M706.6 321.3L705.1 320.9M490.8 323.6L493.5 322.7M705.1 320.9L702.2 320M493.5 322.7L496.2 321.6M702.2 320L699.2 319.2M496.2 321.6L498.9 320.5M699.2 319.2L696.2 318.4M498.9 320.5L501.6 319.3M696.2 318.4L693.3 317.5M501.6 319.3L504.3 318M693.3 317.5L690.3 316.7M504.3 318L506.9 316.5M690.3 316.7L687.4 315.8M506.9 316.5L509.6 314.9M687.4 315.8L684.4 314.9M509.6 314.9L512.3 313.1M684.4 314.9L681.5 313.9M512.3 313.1L515 311.2M681.5 313.9L678.5 313M515 311.2L517.7 309.3M678.5 313L675.6 312M517.7 309.3L520.4 307.2M675.6 312L672.6 311.1M520.4 307.2L523 305.2M672.6 311.1L669.6 310.1M523 305.2L524.4 304.3M669.6 310.1L666.7 309.2M666.7 309.2L663.7 308.3M663.7 308.3L660.8 307.4M660.8 307.4L657.8 306.5M657.8 306.5L654.9 305.7M654.9 305.7L651.9 305M651.9 305L649 304.3M649 304.3L646 303.6M545.8 297.3L547.2 297.3M646 303.6L643.1 303M547.2 297.3L549.9 297.6M643.1 303L640.1 302.3M549.9 297.6L552.6 297.8M640.1 302.3L637.1 301.7M552.6 297.8L555.2 298.1M637.1 301.7L634.2 301M555.2 298.1L557.9 298.2M634.2 301L631.2 300.4M557.9 298.2L560.6 298.2M631.2 300.4L628.3 299.7M560.6 298.2L563.3 298M628.3 299.7L625.3 299M563.3 298L566 297.8M625.3 299L622.4 298.2M566 297.8L568.7 297.3M622.4 298.2L619.4 297.5M568.7 297.3L571.3 296.8M619.4 297.5L616.5 296.8M571.3 296.8L574 296.2M616.5 296.8L613.5 296M574 296.2L576.7 295.5M613.5 296L610.5 295.2M576.7 295.5L579.4 294.7M610.5 295.2L607.6 294.5M579.4 294.7L582.1 293.9M607.6 294.5L604.6 293.7M582.1 293.9L584.8 293.1M604.6 293.7L601.7 292.9M584.8 293.1L587.4 292.3M601.7 292.9L598.7 292.1M587.4 292.3L590.1 291.4M598.7 292.1L595.8 291.3M590.1 291.4L592.8 290.5M595.8 291.3L592.8 290.5M592.8 290.5L595.5 289.7M592.8 290.5L589.9 289.7M595.5 289.7L598.2 288.8M589.9 289.7L586.9 288.9M598.2 288.8L600.9 287.9M586.9 288.9L583.9 288.1M466.4 330L469.1 329.1M469.1 329.1L471.8 328.3M471.8 328.3L474.5 327.4M474.5 327.4L477.1 326.5M477.1 326.5L479.8 325.6M479.8 325.6L482.5 324.7M482.5 324.7L485.2 323.8M485.2 323.8L487.9 322.9M709.3 320.4L707.8 320M487.9 322.9L490.6 322M707.8 320L704.8 319.2M490.6 322L493.2 321M704.8 319.2L701.9 318.4M493.2 321L495.9 319.9M701.9 318.4L698.9 317.5M495.9 319.9L498.6 318.8M698.9 317.5L696 316.7M498.6 318.8L501.3 317.7M696 316.7L693 315.9M501.3 317.7L504 316.4M693 315.9L690.1 315M504 316.4L506.7 315.1M690.1 315L687.1 314.1M506.7 315.1L509.3 313.6M687.1 314.1L684.2 313.3M509.3 313.6L512 312.1M684.2 313.3L681.2 312.4M512 312.1L514.7 310.5M681.2 312.4L678.2 311.5M514.7 310.5L517.4 308.9M678.2 311.5L675.3 310.6M517.4 308.9L520.1 307.3M675.3 310.6L672.3 309.7M520.1 307.3L522.8 305.7M672.3 309.7L669.4 308.8M522.8 305.7L525.5 304.3M669.4 308.8L666.4 308M525.5 304.3L528.1 303M666.4 308L663.5 307.1M528.1 303L530.8 301.9M663.5 307.1L660.5 306.3M530.8 301.9L533.5 301.1M660.5 306.3L657.6 305.5M533.5 301.1L536.2 300.4M657.6 305.5L654.6 304.7M536.2 300.4L538.9 299.9M654.6 304.7L651.6 304M538.9 299.9L541.6 299.6M651.6 304L648.7 303.3M541.6 299.6L544.2 299.4M648.7 303.3L645.7 302.6M544.2 299.4L546.9 299.2M645.7 302.6L642.8 301.8M546.9 299.2L549.6 299.1M642.8 301.8L639.8 301.1M549.6 299.1L552.3 298.9M639.8 301.1L636.9 300.4M552.3 298.9L555 298.7M636.9 300.4L633.9 299.7M555 298.7L557.7 298.4M633.9 299.7L631 299M557.7 298.4L560.3 298M631 299L628 298.2M560.3 298L563 297.5M628 298.2L625 297.5M563 297.5L565.7 296.9M625 297.5L622.1 296.7M565.7 296.9L568.4 296.3M622.1 296.7L619.1 296M568.4 296.3L571.1 295.6M619.1 296L616.2 295.2M571.1 295.6L573.8 294.8M616.2 295.2L613.2 294.4M573.8 294.8L576.4 294M613.2 294.4L610.3 293.6M576.4 294L579.1 293.2M610.3 293.6L607.3 292.8M579.1 293.2L581.8 292.3M607.3 292.8L604.4 292M581.8 292.3L584.5 291.5M604.4 292L601.4 291.2M584.5 291.5L587.2 290.6M601.4 291.2L598.5 290.5M587.2 290.6L589.9 289.7M598.5 290.5L595.5 289.7M589.9 289.7L592.5 288.9M595.5 289.7L592.5 288.9M592.5 288.9L595.2 288M592.5 288.9L589.6 288.1M595.2 288L597.9 287.1M589.6 288.1L586.6 287.3M463.5 329.2L466.1 328.3M466.1 328.3L468.8 327.5M468.8 327.5L471.5 326.6M471.5 326.6L474.2 325.7M474.2 325.7L476.9 324.8M476.9 324.8L479.6 323.9M479.6 323.9L482.2 323M714.9 320.3L713.4 319.9M482.2 323L484.9 322.1M713.4 319.9L710.5 319.1M484.9 322.1L487.6 321.2M710.5 319.1L707.5 318.3M487.6 321.2L490.3 320.3M707.5 318.3L704.6 317.5M490.3 320.3L493 319.3M704.6 317.5L701.6 316.7M493 319.3L495.7 318.3M701.6 316.7L698.7 315.9M495.7 318.3L498.3 317.2M698.7 315.9L695.7 315M498.3 317.2L501 316.1M695.7 315L692.7 314.2M501 316.1L503.7 314.9M692.7 314.2L689.8 313.4M503.7 314.9L506.4 313.7M689.8 313.4L686.8 312.5M506.4 313.7L509.1 312.4M686.8 312.5L683.9 311.7M509.1 312.4L511.8 311.1M683.9 311.7L680.9 310.8M511.8 311.1L514.4 309.8M680.9 310.8L678 310M514.4 309.8L517.1 308.4M678 310L675 309.1M517.1 308.4L519.8 307.1M675 309.1L672.1 308.3M519.8 307.1L522.5 305.9M672.1 308.3L669.1 307.4M522.5 305.9L525.2 304.8M669.1 307.4L666.1 306.6M525.2 304.8L527.9 303.8M666.1 306.6L663.2 305.8M527.9 303.8L530.5 302.9M663.2 305.8L660.2 305M530.5 302.9L533.2 302.2M660.2 305L657.3 304.2M533.2 302.2L535.9 301.5M657.3 304.2L654.3 303.5M535.9 301.5L538.6 301M654.3 303.5L651.4 302.7M538.6 301L541.3 300.6M651.4 302.7L648.4 302M541.3 300.6L544 300.1M648.4 302L645.5 301.2M544 300.1L546.6 299.7M645.5 301.2L642.5 300.5M546.6 299.7L549.3 299.3M642.5 300.5L639.6 299.7M549.3 299.3L552 298.8M639.6 299.7L636.6 299M552 298.8L554.7 298.3M636.6 299L633.6 298.2M554.7 298.3L557.4 297.7M633.6 298.2L630.7 297.5M557.4 297.7L560.1 297.1M630.7 297.5L627.7 296.7M560.1 297.1L562.8 296.4M627.7 296.7L624.8 295.9M562.8 296.4L565.4 295.7M624.8 295.9L621.8 295.1M565.4 295.7L568.1 294.9M621.8 295.1L618.9 294.3M568.1 294.9L570.8 294.1M618.9 294.3L615.9 293.5M570.8 294.1L573.5 293.2M615.9 293.5L613 292.8M573.5 293.2L576.2 292.4M613 292.8L610 292M576.2 292.4L578.9 291.5M610 292L607 291.2M578.9 291.5L581.5 290.7M607 291.2L604.1 290.4M581.5 290.7L584.2 289.8M604.1 290.4L601.1 289.6M584.2 289.8L586.9 288.9M601.1 289.6L598.2 288.8M586.9 288.9L589.6 288.1M598.2 288.8L595.2 288M589.6 288.1L592.3 287.2M595.2 288L592.3 287.2M592.3 287.2L595 286.3M592.3 287.2L589.3 286.4M460.5 328.4L463.2 327.5M463.2 327.5L465.9 326.7M465.9 326.7L468.6 325.8M468.6 325.8L471.2 324.9M471.2 324.9L473.9 324M723.5 321L722 320.6M473.9 324L476.6 323.2M722 320.6L719.1 319.8M476.6 323.2L479.3 322.3M719.1 319.8L716.1 319M479.3 322.3L482 321.4M716.1 319L713.2 318.2M482 321.4L484.7 320.5M713.2 318.2L710.2 317.4M484.7 320.5L487.3 319.6M710.2 317.4L707.2 316.6M487.3 319.6L490 318.6M707.2 316.6L704.3 315.8M490 318.6L492.7 317.7M704.3 315.8L701.3 315M492.7 317.7L495.4 316.7M701.3 315L698.4 314.2M495.4 316.7L498.1 315.7M698.4 314.2L695.4 313.4M498.1 315.7L500.8 314.6M695.4 313.4L692.5 312.6M500.8 314.6L503.4 313.5M692.5 312.6L689.5 311.7M503.4 313.5L506.1 312.4M689.5 311.7L686.6 310.9M506.1 312.4L508.8 311.3M686.6 310.9L683.6 310.1M508.8 311.3L511.5 310.1M683.6 310.1L680.7 309.3M511.5 310.1L514.2 308.9M680.7 309.3L677.7 308.4M514.2 308.9L516.9 307.8M677.7 308.4L674.7 307.6M516.9 307.8L519.5 306.7M674.7 307.6L671.8 306.8M519.5 306.7L522.2 305.7M671.8 306.8L668.8 306M522.2 305.7L524.9 304.8M668.8 306L665.9 305.2M524.9 304.8L527.6 303.9M665.9 305.2L662.9 304.4M527.6 303.9L530.3 303.1M662.9 304.4L660 303.6M530.3 303.1L533 302.4M660 303.6L657 302.8M533 302.4L535.6 301.7M657 302.8L654.1 302M535.6 301.7L538.3 301.1M654.1 302L651.1 301.3M538.3 301.1L541 300.5M651.1 301.3L648.1 300.5M541 300.5L543.7 299.9M648.1 300.5L645.2 299.7M543.7 299.9L546.4 299.3M645.2 299.7L642.2 299M546.4 299.3L549.1 298.6M642.2 299L639.3 298.2M549.1 298.6L551.7 298M639.3 298.2L636.3 297.4M551.7 298L554.4 297.3M636.3 297.4L633.4 296.6M554.4 297.3L557.1 296.5M633.4 296.6L630.4 295.8M557.1 296.5L559.8 295.8M630.4 295.8L627.5 295.1M559.8 295.8L562.5 295M627.5 295.1L624.5 294.3M562.5 295L565.2 294.2M624.5 294.3L621.6 293.5M565.2 294.2L567.8 293.3M621.6 293.5L618.6 292.7M567.8 293.3L570.5 292.5M618.6 292.7L615.6 291.9M570.5 292.5L573.2 291.6M615.6 291.9L612.7 291.1M573.2 291.6L575.9 290.8M612.7 291.1L609.7 290.3M575.9 290.8L578.6 289.9M609.7 290.3L606.8 289.5M578.6 289.9L581.3 289M606.8 289.5L603.8 288.7M581.3 289L583.9 288.1M603.8 288.7L600.9 287.9M583.9 288.1L586.6 287.3M600.9 287.9L597.9 287.1M586.6 287.3L589.3 286.4M597.9 287.1L595 286.3M589.3 286.4L592 285.5M595 286.3L592 285.5" stroke="#60dc98" stroke-width="0.65" fill="none"/><path d="M571.3 358.3L569.8 357.9M569.8 357.9L566.9 357.2M641.5 355.7L642.9 355.3M566.9 357.2L563.9 356.4M642.9 355.3L645.6 354.5M563.9 356.4L561 355.6M645.6 354.5L648.2 353.7M561 355.6L558 354.8M648.2 353.7L650.9 353M558 354.8L555.1 354.1M650.9 353L653.6 352.3M555.1 354.1L552.1 353.3M653.6 352.3L656.3 351.7M552.1 353.3L549.2 352.5M656.3 351.7L659 351.1M549.2 352.5L546.2 351.8M659 351.1L661.7 350.5M546.2 351.8L543.2 351M661.7 350.5L664.3 349.9M543.2 351L540.3 350.2M664.3 349.9L667 349.3M540.3 350.2L537.3 349.5M667 349.3L669.7 348.6M537.3 349.5L534.4 348.7M669.7 348.6L672.4 347.8M534.4 348.7L531.4 347.9M672.4 347.8L675.1 347M531.4 347.9L528.5 347.1M675.1 347L677.8 346.1M528.5 347.1L525.5 346.3M677.8 346.1L680.4 345.1M525.5 346.3L522.6 345.5M680.4 345.1L683.1 344M522.6 345.5L519.6 344.6M683.1 344L685.8 342.9M519.6 344.6L516.6 343.8M685.8 342.9L688.5 341.8M516.6 343.8L513.7 343M688.5 341.8L691.2 340.6M513.7 343L510.7 342.1M691.2 340.6L693.9 339.5M510.7 342.1L507.8 341.3M693.9 339.5L696.5 338.4M507.8 341.3L504.8 340.5M696.5 338.4L699.2 337.4M504.8 340.5L501.9 339.6M699.2 337.4L701.9 336.4M501.9 339.6L498.9 338.8M701.9 336.4L704.6 335.4M498.9 338.8L496 338M704.6 335.4L707.3 334.4M496 338L493 337.2M707.3 334.4L710 333.5M493 337.2L490.1 336.4M710 333.5L712.6 332.6M490.1 336.4L487.1 335.6M712.6 332.6L715.3 331.7M487.1 335.6L485.6 335.2M715.3 331.7L718 330.8M718 330.8L720.7 329.9M720.7 329.9L723.4 329M723.4 329L726.1 328.1M726.1 328.1L728.7 327.2M728.7 327.2L731.4 326.4M731.4 326.4L734.1 325.5M734.1 325.5L736.8 324.6M574 357.5L572.5 357.1M572.5 357.1L569.6 356.3M638.6 354.9L639.9 354.5M569.6 356.3L566.6 355.5M639.9 354.5L642.6 353.8M566.6 355.5L563.7 354.7M642.6 353.8L645.3 353.1M563.7 354.7L560.7 354M645.3 353.1L648 352.5M560.7 354L557.7 353.2M648 352.5L650.7 352M557.7 353.2L554.8 352.5M650.7 352L653.3 351.5M554.8 352.5L551.8 351.8M653.3 351.5L656 351.1M551.8 351.8L548.9 351.1M656 351.1L658.7 350.7M548.9 351.1L545.9 350.3M658.7 350.7L661.4 350.3M545.9 350.3L543 349.6M661.4 350.3L664.1 349.8M543 349.6L540 348.8M664.1 349.8L666.8 349.2M540 348.8L537.1 348.1M666.8 349.2L669.4 348.6M537.1 348.1L534.1 347.3M669.4 348.6L672.1 347.7M534.1 347.3L531.2 346.5M672.1 347.7L674.8 346.8M531.2 346.5L528.2 345.6M674.8 346.8L677.5 345.7M528.2 345.6L525.2 344.8M677.5 345.7L680.2 344.5M525.2 344.8L522.3 343.9M680.2 344.5L682.9 343.2M522.3 343.9L519.3 343.1M682.9 343.2L685.5 341.9M519.3 343.1L516.4 342.2M685.5 341.9L688.2 340.6M516.4 342.2L513.4 341.4M688.2 340.6L690.9 339.3M513.4 341.4L510.5 340.5M690.9 339.3L693.6 338.1M510.5 340.5L507.5 339.7M693.6 338.1L696.3 336.9M507.5 339.7L504.6 338.8M696.3 336.9L699 335.8M504.6 338.8L501.6 338M699 335.8L701.6 334.7M501.6 338L498.6 337.2M701.6 334.7L704.3 333.7M498.6 337.2L495.7 336.3M704.3 333.7L707 332.7M495.7 336.3L492.7 335.5M707 332.7L709.7 331.8M492.7 335.5L489.8 334.7M709.7 331.8L712.4 330.9M489.8 334.7L488.3 334.3M712.4 330.9L715.1 330M715.1 330L717.7 329.1M717.7 329.1L720.4 328.2M720.4 328.2L723.1 327.3M723.1 327.3L725.8 326.4M725.8 326.4L728.5 325.6M728.5 325.6L731.2 324.7M731.2 324.7L733.8 323.8M632.9 355L634.3 354.6M573.7 355.8L572.3 355.4M634.3 354.6L637 353.8M572.3 355.4L569.3 354.7M637 353.8L639.6 353.2M569.3 354.7L566.3 353.9M639.6 353.2L642.3 352.6M566.3 353.9L563.4 353.2M642.3 352.6L645 352.2M563.4 353.2L560.4 352.5M645 352.2L647.7 351.9M560.4 352.5L557.5 351.8M647.7 351.9L650.4 351.6M557.5 351.8L554.5 351.1M650.4 351.6L653.1 351.5M554.5 351.1L551.6 350.4M653.1 351.5L655.7 351.4M551.6 350.4L548.6 349.7M655.7 351.4L658.4 351.2M548.6 349.7L545.7 349M658.4 351.2L661.1 351M545.7 349L542.7 348.3M661.1 351L663.8 350.6M542.7 348.3L539.7 347.6M663.8 350.6L666.5 350M539.7 347.6L536.8 346.8M666.5 350L669.2 349.2M536.8 346.8L533.8 346M669.2 349.2L671.8 348.2M533.8 346L530.9 345.1M671.8 348.2L674.5 347M530.9 345.1L527.9 344.3M674.5 347L677.2 345.6M527.9 344.3L525 343.4M677.2 345.6L679.9 344.1M525 343.4L522 342.5M679.9 344.1L682.6 342.5M522 342.5L519.1 341.6M682.6 342.5L685.3 340.9M519.1 341.6L516.1 340.7M685.3 340.9L688 339.4M516.1 340.7L513.1 339.8M688 339.4L690.6 338M513.1 339.8L510.2 338.9M690.6 338L693.3 336.6M510.2 338.9L507.2 338M693.3 336.6L696 335.3M507.2 338L504.3 337.2M696 335.3L698.7 334.2M504.3 337.2L501.3 336.3M698.7 334.2L701.4 333.1M501.3 336.3L498.4 335.5M701.4 333.1L704.1 332M498.4 335.5L495.4 334.7M704.1 332L706.7 331.1M495.4 334.7L493.9 334.3M706.7 331.1L709.4 330.1M709.4 330.1L712.1 329.2M712.1 329.2L714.8 328.3M714.8 328.3L717.5 327.4M717.5 327.4L720.2 326.5M720.2 326.5L722.8 325.7M722.8 325.7L725.5 324.8M725.5 324.8L728.2 323.9M728.2 323.9L730.9 323M630 354.2L631.3 353.8M576.4 354.9L574.9 354.5M631.3 353.8L634 353.1M574.9 354.5L572 353.8M634 353.1L636.7 352.6M572 353.8L569 353.1M636.7 352.6L639.4 352.2M569 353.1L566.1 352.4M639.4 352.2L642.1 352M566.1 352.4L563.1 351.8M642.1 352L644.7 352M563.1 351.8L560.2 351.1M644.7 352L647.4 352.2M560.2 351.1L557.2 350.5M647.4 352.2L650.1 352.4M557.2 350.5L554.2 349.9M650.1 352.4L652.8 352.7M554.2 349.9L551.3 349.3M652.8 352.7L655.5 353M551.3 349.3L548.3 348.7M655.5 353L658.2 353.1M548.3 348.7L545.4 348M658.2 353.1L660.8 352.9M545.4 348L542.4 347.3M660.8 352.9L662.2 352.7M542.4 347.3L539.5 346.6M539.5 346.6L536.5 345.7M536.5 345.7L533.6 344.9M670.2 349.9L671.6 349.2M533.6 344.9L530.6 344M671.6 349.2L674.3 347.5M530.6 344L527.7 343M674.3 347.5L676.9 345.7M527.7 343L524.7 342M676.9 345.7L679.6 343.7M524.7 342L521.7 341.1M679.6 343.7L682.3 341.8M521.7 341.1L518.8 340.1M682.3 341.8L685 339.9M518.8 340.1L515.8 339.1M685 339.9L687.7 338.1M515.8 339.1L512.9 338.2M687.7 338.1L690.4 336.5M512.9 338.2L509.9 337.2M690.4 336.5L693 335M509.9 337.2L507 336.3M693 335L695.7 333.7M507 336.3L504 335.5M695.7 333.7L698.4 332.5M504 335.5L501.1 334.6M698.4 332.5L701.1 331.4M501.1 334.6L498.1 333.8M701.1 331.4L703.8 330.3M498.1 333.8L496.6 333.4M703.8 330.3L706.5 329.4M706.5 329.4L709.1 328.4M709.1 328.4L711.8 327.5M711.8 327.5L714.5 326.6M714.5 326.6L717.2 325.7M717.2 325.7L719.9 324.9M719.9 324.9L722.6 324M722.6 324L725.3 323.1M725.3 323.1L727.9 322.2M627 353.4L628.4 353.1M628.4 353.1L631.1 352.5M576.1 353.3L574.7 352.9M631.1 352.5L633.7 352.2M574.7 352.9L571.7 352.3M633.7 352.2L636.4 352M571.7 352.3L568.8 351.7M636.4 352L639.1 352.2M568.8 351.7L565.8 351.1M639.1 352.2L641.8 352.5M565.8 351.1L562.8 350.6M641.8 352.5L644.5 353.2M562.8 350.6L559.9 350.1M644.5 353.2L647.2 354M559.9 350.1L556.9 349.6M647.2 354L648.5 354.4M556.9 349.6L554 349.1M554 349.1L551 348.6M551 348.6L548.1 348.1M548.1 348.1L545.1 347.4M545.1 347.4L542.2 346.7M542.2 346.7L539.2 345.8M539.2 345.8L536.2 344.9M536.2 344.9L533.3 343.9M533.3 343.9L530.3 342.9M530.3 342.9L527.4 341.8M675.3 346.9L676.7 345.7M527.4 341.8L524.4 340.7M676.7 345.7L679.4 343.2M524.4 340.7L521.5 339.6M679.4 343.2L682 340.9M521.5 339.6L518.5 338.6M682 340.9L684.7 338.7M518.5 338.6L515.6 337.5M684.7 338.7L687.4 336.7M515.6 337.5L512.6 336.5M687.4 336.7L690.1 334.9M512.6 336.5L509.7 335.5M690.1 334.9L692.8 333.4M509.7 335.5L506.7 334.6M692.8 333.4L695.5 332M506.7 334.6L503.7 333.7M695.5 332L698.1 330.8M503.7 333.7L502.3 333.3M698.1 330.8L700.8 329.7M700.8 329.7L703.5 328.6M703.5 328.6L706.2 327.7M706.2 327.7L708.9 326.7M708.9 326.7L711.6 325.8M711.6 325.8L714.2 324.9M714.2 324.9L716.9 324.1M716.9 324.1L719.6 323.2M719.6 323.2L722.3 322.3M722.3 322.3L725 321.4M624.1 352.6L625.4 352.3M625.4 352.3L628.1 351.9M578.8 352.4L577.3 352.1M628.1 351.9L630.8 351.8M577.3 352.1L574.4 351.5M630.8 351.8L633.5 351.9M574.4 351.5L571.4 350.9M633.5 351.9L636.1 352.5M571.4 350.9L568.5 350.5M636.1 352.5L638.8 353.4M568.5 350.5L565.5 350.1M638.8 353.4L641.5 354.6M565.5 350.1L562.6 349.8M641.5 354.6L642.9 355.4M562.6 349.8L559.6 349.5M559.6 349.5L556.7 349.2M556.7 349.2L553.7 348.9M553.7 348.9L550.8 348.4M550.8 348.4L547.8 347.9M547.8 347.9L544.8 347.2M544.8 347.2L541.9 346.3M541.9 346.3L538.9 345.3M538.9 345.3L536 344.3M536 344.3L533 343.1M533 343.1L530.1 341.9M530.1 341.9L527.1 340.6M527.1 340.6L524.2 339.4M677.7 343.8L679.1 342.3M524.2 339.4L521.2 338.1M679.1 342.3L681.8 339.6M521.2 338.1L518.2 337M681.8 339.6L684.5 337.1M518.2 337L515.3 335.8M684.5 337.1L687.1 335M515.3 335.8L512.3 334.8M687.1 335L689.8 333.1M512.3 334.8L509.4 333.8M689.8 333.1L692.5 331.6M509.4 333.8L506.4 332.9M692.5 331.6L695.2 330.2M506.4 332.9L504.9 332.4M695.2 330.2L697.9 329M697.9 329L700.6 327.9M700.6 327.9L703.2 326.9M703.2 326.9L705.9 326M705.9 326L708.6 325M708.6 325L711.3 324.1M711.3 324.1L714 323.3M714 323.3L716.7 322.4M716.7 322.4L719.3 321.5M719.3 321.5L720.7 321.1M621.1 351.8L622.5 351.6M622.5 351.6L625.1 351.3M581.5 351.4L580 351.1M625.1 351.3L627.8 351.4M580 351.1L577.1 350.6M627.8 351.4L630.5 351.9M577.1 350.6L574.1 350.2M630.5 351.9L633.2 352.9M574.1 350.2L571.2 350M633.2 352.9L635.9 354.5M571.2 350L568.2 349.8M635.9 354.5L637.2 355.5M568.2 349.8L565.3 349.7M565.3 349.7L562.3 349.7M562.3 349.7L559.3 349.7M559.3 349.7L556.4 349.5M556.4 349.5L553.4 349.3M553.4 349.3L550.5 348.8M550.5 348.8L547.5 348.2M547.5 348.2L544.6 347.3M544.6 347.3L541.6 346.3M541.6 346.3L538.7 345.1M538.7 345.1L535.7 343.7M535.7 343.7L532.7 342.3M532.7 342.3L529.8 340.8M529.8 340.8L526.8 339.3M526.8 339.3L523.9 337.9M677.5 342.5L678.8 340.8M523.9 337.9L520.9 336.5M678.8 340.8L681.5 337.8M520.9 336.5L518 335.2M681.5 337.8L684.2 335.2M518 335.2L515 334M684.2 335.2L686.9 333M515 334L512.1 332.9M686.9 333L689.5 331.2M512.1 332.9L510.6 332.4M689.5 331.2L692.2 329.7M692.2 329.7L694.9 328.4M694.9 328.4L697.6 327.2M697.6 327.2L700.3 326.2M700.3 326.2L703 325.2M703 325.2L705.7 324.3M705.7 324.3L708.3 323.4M708.3 323.4L711 322.5M711 322.5L713.7 321.6M713.7 321.6L716.4 320.7M716.4 320.7L717.7 320.3M618.2 351L619.5 350.7M619.5 350.7L622.2 350.6M622.2 350.6L624.9 350.9M581.2 349.9L579.8 349.7M624.9 350.9L627.6 351.8M579.8 349.7L576.8 349.5M627.6 351.8L630.2 353.4M576.8 349.5L573.8 349.4M630.2 353.4L631.6 354.5M573.8 349.4L570.9 349.5M570.9 349.5L567.9 349.8M567.9 349.8L565 350.1M565 350.1L562 350.4M562 350.4L559.1 350.6M559.1 350.6L556.1 350.6M556.1 350.6L553.2 350.3M553.2 350.3L550.2 349.8M550.2 349.8L547.3 348.9M547.3 348.9L544.3 347.8M544.3 347.8L541.3 346.4M541.3 346.4L538.4 344.8M538.4 344.8L535.4 343.1M535.4 343.1L532.5 341.3M532.5 341.3L529.5 339.5M529.5 339.5L526.6 337.8M526.6 337.8L523.6 336.1M677.2 340.5L678.5 338.6M523.6 336.1L520.7 334.6M678.5 338.6L681.2 335.5M520.7 334.6L517.7 333.2M681.2 335.5L683.9 333M517.7 333.2L514.7 332M683.9 333L686.6 330.9M514.7 332L513.3 331.5M686.6 330.9L689.3 329.1M689.3 329.1L692 327.7M692 327.7L694.6 326.5M694.6 326.5L697.3 325.4M697.3 325.4L700 324.4M700 324.4L702.7 323.5M702.7 323.5L705.4 322.6M705.4 322.6L708.1 321.7M708.1 321.7L710.7 320.8M710.7 320.8L712.1 320.3M617.9 349.7L619.2 349.7M619.2 349.7L621.9 350.2M583.9 348.9L582.4 348.7M621.9 350.2L624.6 351.4M582.4 348.7L579.5 348.6M624.6 351.4L627.3 353.5M579.5 348.6L576.5 348.8M627.3 353.5L628.6 354.9M576.5 348.8L573.6 349.3M573.6 349.3L570.6 349.9M570.6 349.9L567.7 350.7M567.7 350.7L564.7 351.4M564.7 351.4L563.2 351.7M539.6 345.3L538.1 344.3M538.1 344.3L535.2 342.1M535.2 342.1L532.2 339.9M532.2 339.9L529.3 337.8M529.3 337.8L526.3 335.8M526.3 335.8L523.3 334M676.9 337.6L678.3 335.8M523.3 334L520.4 332.4M678.3 335.8L681 332.8M520.4 332.4L517.4 331M681 332.8L683.6 330.5M517.4 331L516 330.4M683.6 330.5L686.3 328.6M686.3 328.6L689 327M689 327L691.7 325.7M691.7 325.7L694.4 324.6M694.4 324.6L697.1 323.6M697.1 323.6L699.7 322.7M699.7 322.7L702.4 321.7M702.4 321.7L703.8 321.3M614.9 348.6L616.3 348.5M616.3 348.5L619 349.1M619 349.1L621.6 350.6M583.6 347.5L582.2 347.5M621.6 350.6L624.3 352.9M582.2 347.5L579.2 348M624.3 352.9L625.7 354.6M579.2 348L576.3 348.8M576.3 348.8L573.3 350M573.3 350L570.4 351.3M570.4 351.3L568.9 351.9M539.3 344.5L537.8 343.2M537.8 343.2L534.9 340.5M534.9 340.5L531.9 337.9M531.9 337.9L529 335.5M529 335.5L526 333.3M674 338L675.3 335.9M526 333.3L523.1 331.4M675.3 335.9L678 332.6M523.1 331.4L521.6 330.6M678 332.6L680.7 329.9M680.7 329.9L683.4 327.9M683.4 327.9L686.1 326.3M686.1 326.3L688.7 324.9M688.7 324.9L691.4 323.8M691.4 323.8L694.1 322.8M694.1 322.8L696.8 321.8M696.8 321.8L698.1 321.4M614.7 347.2L616 347.5M616 347.5L618.7 348.9M586.3 346L584.9 346.1M618.7 348.9L621.4 351.4M584.9 346.1L581.9 346.8M621.4 351.4L622.7 353.3M581.9 346.8L578.9 348M578.9 348L576 349.7M576 349.7L573 351.6M573 351.6L571.6 352.6M539.1 342.8L537.6 341.2M537.6 341.2L534.6 338M534.6 338L531.7 335M531.7 335L528.7 332.4M671 337.8L672.4 335.6M528.7 332.4L525.8 330.1M672.4 335.6L675 332M525.8 330.1L524.3 329.2M675 332L677.7 329.2M677.7 329.2L680.4 327M680.4 327L683.1 325.4M683.1 325.4L685.8 324M685.8 324L688.5 322.9M688.5 322.9L691.1 321.9M691.1 321.9L692.5 321.4M614.4 345.8L615.7 346.3M615.7 346.3L618.4 348.6M586.1 344.6L584.6 345.1M618.4 348.6L619.8 350.5M584.6 345.1L581.6 346.7M581.6 346.7L578.7 348.8M578.7 348.8L577.2 350.1M538.8 339.7L537.3 337.8M537.3 337.8L534.3 334.2M534.3 334.2L531.4 331M668.1 337L669.4 334.6M531.4 331L529.9 329.7M669.4 334.6L672.1 330.9M672.1 330.9L674.8 328M674.8 328L677.5 325.9M677.5 325.9L680.1 324.3M680.1 324.3L682.8 323M682.8 323L684.2 322.4M569.8 357.9L572.5 357.1M572.5 357.1L573.9 356.6M614.1 343.7L615.5 344.5M615.5 344.5L618.1 347.6M585.8 343.5L584.3 344.4M618.1 347.6L619.5 349.9M584.3 344.4L581.4 347.1M581.4 347.1L579.9 348.7M541.5 339.4L540 337.1M540 337.1L537 332.8M537 332.8L535.6 330.9M665.1 335.2L666.5 332.9M666.5 332.9L669.1 329.2M669.1 329.2L671.8 326.4M671.8 326.4L674.5 324.4M674.5 324.4L677.2 322.9M677.2 322.9L678.5 322.4M566.9 357.2L569.6 356.3M569.6 356.3L572.3 355.4M635.8 354.9L634.3 354.6M572.3 355.4L574.9 354.5M634.3 354.6L631.3 353.8M574.9 354.5L576.3 354.1M631.3 353.8L628.4 353.1M628.4 353.1L625.4 352.3M625.4 352.3L622.5 351.6M622.5 351.6L619.5 350.7M619.5 350.7L618 350.2M616.5 343.2L617.9 345.1M585.5 342.5L584 344M617.9 345.1L619.2 347.7M584 344L581.1 347.7M581.1 347.7L579.6 349.8M544.1 338.3L542.7 335.6M542.7 335.6L539.7 330.7M659.5 337.6L660.8 334.7M539.7 330.7L538.2 328.4M660.8 334.7L663.5 330.2M663.5 330.2L666.2 326.8M666.2 326.8L668.9 324.3M668.9 324.3L670.2 323.4M563.9 356.4L566.6 355.5M642.9 355.3L639.9 354.5M566.6 355.5L569.3 354.7M639.9 354.5L637 353.8M569.3 354.7L572 353.8M637 353.8L634 353.1M572 353.8L574.7 352.9M634 353.1L631.1 352.5M574.7 352.9L577.3 352.1M631.1 352.5L628.1 351.9M577.3 352.1L580 351.1M628.1 351.9L625.1 351.3M580 351.1L581.4 350.6M625.1 351.3L622.2 350.6M622.2 350.6L619.2 349.7M619.2 349.7L616.3 348.5M616.3 348.5L614.8 347.8M616.3 338.4L617.6 340.5M585.2 341.6L583.8 343.6M617.6 340.5L620.3 346.3M583.8 343.6L582.3 345.9M620.3 346.3L621.6 349.7M546.8 336.1L545.4 333.1M545.4 333.1L543.9 330.3M656.5 333.3L657.9 330.7M657.9 330.7L660.5 326.6M660.5 326.6L661.9 325.1M561 355.6L563.7 354.7M645.6 354.5L642.6 353.8M563.7 354.7L566.3 353.9M642.6 353.8L639.6 353.2M566.3 353.9L569 353.1M639.6 353.2L636.7 352.6M569 353.1L571.7 352.3M636.7 352.6L633.7 352.2M571.7 352.3L574.4 351.5M633.7 352.2L630.8 351.8M574.4 351.5L577.1 350.6M630.8 351.8L627.8 351.4M577.1 350.6L579.8 349.7M627.8 351.4L624.9 350.9M579.8 349.7L582.4 348.7M624.9 350.9L621.9 350.2M582.4 348.7L583.8 348.1M621.9 350.2L619 349.1M619 349.1L616 347.5M616 347.5L614.5 346.3M585 340.2L583.5 342.7M618.7 337.2L620 340.3M583.5 342.7L582 345.1M620 340.3L621.4 343.7M552.5 339.2L551 336.1M551 336.1L548 329.5M650.9 333.2L652.2 330.3M548 329.5L546.6 326.2M652.2 330.3L654.9 325.7M654.9 325.7L656.2 323.9M558 354.8L560.7 354M648.2 353.7L645.3 353.1M560.7 354L563.4 353.2M645.3 353.1L642.3 352.6M563.4 353.2L566.1 352.4M642.3 352.6L639.4 352.2M566.1 352.4L568.8 351.7M639.4 352.2L636.4 352M568.8 351.7L571.4 350.9M636.4 352L633.5 351.9M571.4 350.9L574.1 350.2M633.5 351.9L630.5 351.9M574.1 350.2L576.8 349.5M630.5 351.9L627.6 351.8M576.8 349.5L579.5 348.6M627.6 351.8L624.6 351.4M579.5 348.6L582.2 347.5M624.6 351.4L621.6 350.6M582.2 347.5L584.9 346.1M621.6 350.6L618.7 348.9M584.9 346.1L586.2 345.1M618.7 348.9L615.7 346.3M615.7 346.3L614.3 344.6M584.7 338.1L583.2 340.7M583.2 340.7L581.7 343M621.1 337.1L622.4 340.5M622.4 340.5L623.8 343.6M642.6 337.9L643.9 334.8M555.2 335.1L553.7 331.7M643.9 334.8L646.6 328.9M553.7 331.7L552.2 328.1M646.6 328.9L647.9 326.4M555.1 354.1L557.7 353.2M650.9 353L648 352.5M557.7 353.2L560.4 352.5M648 352.5L645 352.2M560.4 352.5L563.1 351.8M645 352.2L642.1 352M563.1 351.8L565.8 351.1M642.1 352L639.1 352.2M565.8 351.1L568.5 350.5M639.1 352.2L636.1 352.5M568.5 350.5L571.2 350M636.1 352.5L633.2 352.9M571.2 350L573.8 349.4M633.2 352.9L630.2 353.4M573.8 349.4L576.5 348.8M630.2 353.4L627.3 353.5M576.5 348.8L579.2 348M627.3 353.5L624.3 352.9M579.2 348L581.9 346.8M624.3 352.9L621.4 351.4M581.9 346.8L584.6 345.1M621.4 351.4L618.4 348.6M584.6 345.1L585.9 343.8M618.4 348.6L615.5 344.5M615.5 344.5L614 341.9M584.4 334.8L583 337.3M583 337.3L580 341.4M620.8 331.4L622.2 334.6M580 341.4L578.5 342.9M622.2 334.6L624.8 339.7M624.8 339.7L626.2 341.2M636.9 335.1L638.3 332.5M560.8 336.1L559.3 333.3M638.3 332.5L640.9 326.9M559.3 333.3L557.8 329.8M640.9 326.9L642.3 324.3M552.1 353.3L554.8 352.5M653.6 352.3L650.7 352M554.8 352.5L557.5 351.8M650.7 352L647.7 351.9M557.5 351.8L560.2 351.1M647.7 351.9L644.7 352M560.2 351.1L562.8 350.6M644.7 352L641.8 352.5M562.8 350.6L565.5 350.1M641.8 352.5L638.8 353.4M565.5 350.1L568.2 349.8M638.8 353.4L635.9 354.5M568.2 349.8L570.9 349.5M635.9 354.5L634.4 355M570.9 349.5L573.6 349.3M573.6 349.3L576.3 348.8M576.3 348.8L578.9 348M578.9 348L581.6 346.7M581.6 346.7L584.3 344.4M619.6 349.9L618.1 347.6M584.3 344.4L585.7 342.7M618.1 347.6L616.7 344.5M584.2 330.6L582.7 332.7M582.7 332.7L579.7 336M579.7 336L576.8 338.2M623.2 332L624.6 333.7M576.8 338.2L575.3 338.7M624.6 333.7L627.3 334.7M627.3 334.7L629.9 333.2M569.4 337.8L567.9 336.8M629.9 333.2L632.6 329.7M567.9 336.8L565 333M632.6 329.7L634 327.3M565 333L562 327.4M562 327.4L560.5 323.7M549.2 352.5L551.8 351.8M656.3 351.7L653.3 351.5M551.8 351.8L554.5 351.1M653.3 351.5L650.4 351.6M554.5 351.1L557.2 350.5M650.4 351.6L647.4 352.2M557.2 350.5L559.9 350.1M647.4 352.2L644.5 353.2M559.9 350.1L562.6 349.8M644.5 353.2L641.5 354.6M562.6 349.8L565.3 349.7M641.5 354.6L640 355.5M565.3 349.7L567.9 349.8M567.9 349.8L570.6 349.9M570.6 349.9L573.3 350M573.3 350L576 349.7M576 349.7L578.7 348.8M578.7 348.8L581.4 347.1M581.4 347.1L584 344M619.4 348.6L617.9 345.1M584 344L585.4 341.8M617.9 345.1L616.4 340.7M580.9 329.1L579.5 330.3M579.5 330.3L576.5 331.8M623 327.9L624.3 328.4M576.5 331.8L573.5 331.9M624.3 328.4L625.6 327.7M573.5 331.9L570.6 330.4M570.6 330.4L569.1 328.7M546.2 351.8L548.9 351.1M659 351.1L656 351.1M548.9 351.1L551.6 350.4M656 351.1L653.1 351.5M551.6 350.4L554.2 349.9M653.1 351.5L650.1 352.4M554.2 349.9L556.9 349.6M650.1 352.4L647.2 354M556.9 349.6L559.6 349.5M647.2 354L645.7 355M559.6 349.5L562.3 349.7M562.3 349.7L565 350.1M565 350.1L567.7 350.7M567.7 350.7L570.4 351.3M570.4 351.3L573 351.6M573 351.6L574.4 351.5M579.7 349L581.1 347.7M581.1 347.7L583.8 343.6M619.1 345.4L617.6 340.5M583.8 343.6L585.1 340.7M617.6 340.5L616.1 335.1M543.2 351L545.9 350.3M661.7 350.5L658.7 350.7M545.9 350.3L548.6 349.7M658.7 350.7L655.7 351.4M548.6 349.7L551.3 349.3M655.7 351.4L652.8 352.7M551.3 349.3L554 349.1M652.8 352.7L651.3 353.8M554 349.1L556.7 349.2M556.7 349.2L559.3 349.7M559.3 349.7L562 350.4M562 350.4L564.7 351.4M564.7 351.4L566.1 352M621.8 351.6L620.3 346.3M582.2 345.4L583.5 342.7M620.3 346.3L618.8 340.2M583.5 342.7L584.8 339.1M540.3 350.2L543 349.6M664.3 349.9L661.4 350.3M543 349.6L545.7 349M661.4 350.3L658.4 351.2M545.7 349L548.3 348.7M658.4 351.2L655.5 353M548.3 348.7L551 348.6M655.5 353L654 354.3M551 348.6L553.7 348.9M553.7 348.9L556.4 349.5M556.4 349.5L559.1 350.6M559.1 350.6L560.4 351.3M621.5 346.7L620 340.3M581.9 344.1L583.2 340.7M620 340.3L618.5 333.8M583.2 340.7L584.6 336.5M537.3 349.5L540 348.8M667 349.3L664.1 349.8M540 348.8L542.7 348.3M664.1 349.8L661.1 351M542.7 348.3L545.4 348M661.1 351L658.2 353.1M545.4 348L548.1 348.1M658.2 353.1L656.7 354.6M548.1 348.1L550.8 348.4M550.8 348.4L553.4 349.3M553.4 349.3L556.1 350.6M556.1 350.6L557.5 351.5M581.6 341.4L583 337.3M583 337.3L584.3 332.9M534.4 348.7L537.1 348.1M669.7 348.6L666.8 349.2M537.1 348.1L539.7 347.6M666.8 349.2L663.8 350.6M539.7 347.6L542.4 347.3M663.8 350.6L660.8 352.9M542.4 347.3L545.1 347.4M660.8 352.9L659.4 354.7M545.1 347.4L547.8 347.9M547.8 347.9L550.5 348.8M550.5 348.8L553.2 350.3M553.2 350.3L554.5 351.4M623.9 347.3L622.4 340.5M578.7 345.3L580 341.4M622.4 340.5L620.9 334.4M580 341.4L582.7 332.7M582.7 332.7L584 328.6M531.4 347.9L534.1 347.3M672.4 347.8L669.4 348.6M534.1 347.3L536.8 346.8M669.4 348.6L666.5 350M536.8 346.8L539.5 346.6M666.5 350L665 351.3M539.5 346.6L542.2 346.7M542.2 346.7L544.8 347.2M544.8 347.2L547.5 348.2M547.5 348.2L550.2 349.8M550.2 349.8L551.5 350.9M623.6 340.6L622.2 334.6M578.4 340.2L579.7 336M622.2 334.6L620.7 329.7M579.7 336L581.1 331.9M528.5 347.1L531.2 346.5M675.1 347L672.1 347.7M531.2 346.5L533.8 346M672.1 347.7L669.2 349.2M533.8 346L536.5 345.7M669.2 349.2L667.7 350.5M536.5 345.7L539.2 345.8M539.2 345.8L541.9 346.3M541.9 346.3L544.6 347.3M544.6 347.3L547.3 348.9M547.3 348.9L548.6 350M626.3 345.6L624.8 339.7M575.4 342.2L576.8 338.2M624.8 339.7L623.4 335M576.8 338.2L579.5 330.3M579.5 330.3L580.8 327M599.6 323.2L600.9 323.3M600.9 323.3L602.3 322.3M525.5 346.3L528.2 345.6M677.8 346.1L674.8 346.8M528.2 345.6L530.9 345.1M674.8 346.8L671.8 348.2M530.9 345.1L533.6 344.9M671.8 348.2L670.4 349.4M533.6 344.9L536.2 344.9M536.2 344.9L538.9 345.3M538.9 345.3L541.6 346.3M541.6 346.3L544.3 347.8M544.3 347.8L545.6 348.8M626 338.2L624.6 333.7M575.2 335.5L576.5 331.8M624.6 333.7L623.1 330.5M576.5 331.8L577.8 328.6M602.4 323.3L600.9 323.3M596.6 322.9L598 322.9M600.9 323.3L598 322.9M598 322.9L599.3 321.8M598 322.9L595 321.7M595 321.7L593.5 320.3M522.6 345.5L525.2 344.8M680.4 345.1L677.5 345.7M525.2 344.8L527.9 344.3M677.5 345.7L674.5 347M527.9 344.3L530.6 344M674.5 347L671.6 349.2M530.6 344L533.3 343.9M671.6 349.2L670.1 350.9M533.3 343.9L536 344.3M536 344.3L538.7 345.1M538.7 345.1L541.3 346.4M541.3 346.4L542.7 347.3M628.7 339L627.3 334.7M572.2 335.4L573.5 331.9M627.3 334.7L624.3 328.4M573.5 331.9L574.9 328.9M624.3 328.4L622.8 326.5M593.7 321.8L595 321.7M595 321.7L596.4 320.6M519.6 344.6L522.3 343.9M683.1 344L680.2 344.5M522.3 343.9L525 343.4M680.2 344.5L677.2 345.6M525 343.4L527.7 343M677.2 345.6L674.3 347.5M527.7 343L530.3 342.9M674.3 347.5L672.8 349M530.3 342.9L533 343.1M533 343.1L535.7 343.7M535.7 343.7L538.4 344.8M538.4 344.8L539.7 345.6M566.6 339.9L567.9 336.8M631.4 337.4L629.9 333.2M567.9 336.8L570.6 330.4M629.9 333.2L628.5 330.1M570.6 330.4L571.9 327.6M516.6 343.8L519.3 343.1M685.8 342.9L682.9 343.2M519.3 343.1L522 342.5M682.9 343.2L679.9 344.1M522 342.5L524.7 342M679.9 344.1L676.9 345.7M524.7 342L527.4 341.8M676.9 345.7L675.5 346.9M527.4 341.8L530.1 341.9M530.1 341.9L532.7 342.3M532.7 342.3L535.4 343.1M535.4 343.1L538.1 344.3M538.1 344.3L539.5 345.1M563.6 336L565 333M634.1 333.7L632.6 329.7M565 333L566.3 330M632.6 329.7L631.1 326.6M513.7 343L516.4 342.2M688.5 341.8L685.5 341.9M516.4 342.2L519.1 341.6M685.5 341.9L682.6 342.5M519.1 341.6L521.7 341.1M682.6 342.5L679.6 343.7M521.7 341.1L524.4 340.7M679.6 343.7L676.7 345.7M524.4 340.7L527.1 340.6M676.7 345.7L675.2 347.1M527.1 340.6L529.8 340.8M529.8 340.8L532.5 341.3M532.5 341.3L535.2 342.1M535.2 342.1L537.8 343.2M537.8 343.2L539.2 343.8M558 335.8L559.3 333.3M639.7 336.8L638.3 332.5M559.3 333.3L562 327.4M638.3 332.5L636.8 328.7M562 327.4L563.3 324.3M510.7 342.1L513.4 341.4M691.2 340.6L688.2 340.6M513.4 341.4L516.1 340.7M688.2 340.6L685.3 340.9M516.1 340.7L518.8 340.1M685.3 340.9L682.3 341.8M518.8 340.1L521.5 339.6M682.3 341.8L679.4 343.2M521.5 339.6L524.2 339.4M679.4 343.2L677.9 344.3M524.2 339.4L526.8 339.3M526.8 339.3L529.5 339.5M529.5 339.5L532.2 339.9M532.2 339.9L534.9 340.5M534.9 340.5L537.6 341.2M537.6 341.2L538.9 341.4M549.6 337.6L551 336.1M551 336.1L553.7 331.7M645.4 338.7L643.9 334.8M553.7 331.7L555 329M643.9 334.8L640.9 326.9M640.9 326.9L639.5 323.3M507.8 341.3L510.5 340.5M693.9 339.5L690.9 339.3M510.5 340.5L513.1 339.8M690.9 339.3L688 339.4M513.1 339.8L515.8 339.1M688 339.4L685 339.9M515.8 339.1L518.5 338.6M685 339.9L682 340.9M518.5 338.6L521.2 338.1M682 340.9L679.1 342.3M521.2 338.1L523.9 337.9M679.1 342.3L677.6 343.3M523.9 337.9L526.6 337.8M526.6 337.8L529.3 337.8M529.3 337.8L531.9 337.9M531.9 337.9L534.6 338M534.6 338L537.3 337.8M537.3 337.8L540 337.1M540 337.1L542.7 335.6M542.7 335.6L545.4 333.1M545.4 333.1L548 329.5M548 329.5L549.4 327M648.1 332.5L646.6 328.9M646.6 328.9L645.1 325.3M504.8 340.5L507.5 339.7M696.5 338.4L693.6 338.1M507.5 339.7L510.2 338.9M693.6 338.1L690.6 338M510.2 338.9L512.9 338.2M690.6 338L687.7 338.1M512.9 338.2L515.6 337.5M687.7 338.1L684.7 338.7M515.6 337.5L518.2 337M684.7 338.7L681.8 339.6M518.2 337L520.9 336.5M681.8 339.6L678.8 340.8M520.9 336.5L523.6 336.1M678.8 340.8L677.3 341.5M523.6 336.1L526.3 335.8M526.3 335.8L529 335.5M529 335.5L531.7 335M531.7 335L534.3 334.2M534.3 334.2L537 332.8M537 332.8L539.7 330.7M539.7 330.7L541.1 329M653.7 333.1L652.2 330.3M652.2 330.3L650.7 327.1M501.9 339.6L504.6 338.8M699.2 337.4L696.3 336.9M504.6 338.8L507.2 338M696.3 336.9L693.3 336.6M507.2 338L509.9 337.2M693.3 336.6L690.4 336.5M509.9 337.2L512.6 336.5M690.4 336.5L687.4 336.7M512.6 336.5L515.3 335.8M687.4 336.7L684.5 337.1M515.3 335.8L518 335.2M684.5 337.1L681.5 337.8M518 335.2L520.7 334.6M681.5 337.8L678.5 338.6M520.7 334.6L523.3 334M678.5 338.6L677.1 339M523.3 334L526 333.3M526 333.3L528.7 332.4M528.7 332.4L531.4 331M531.4 331L532.7 330M662.3 336.2L660.8 334.7M660.8 334.7L657.9 330.7M657.9 330.7L654.9 325.7M654.9 325.7L653.4 322.8M498.9 338.8L501.6 338M701.9 336.4L699 335.8M501.6 338L504.3 337.2M699 335.8L696 335.3M504.3 337.2L507 336.3M696 335.3L693 335M507 336.3L509.7 335.5M693 335L690.1 334.9M509.7 335.5L512.3 334.8M690.1 334.9L687.1 335M512.3 334.8L515 334M687.1 335L684.2 335.2M515 334L517.7 333.2M684.2 335.2L681.2 335.5M517.7 333.2L520.4 332.4M681.2 335.5L678.3 335.8M520.4 332.4L523.1 331.4M678.3 335.8L675.3 335.9M523.1 331.4L525.8 330.1M675.3 335.9L672.4 335.6M525.8 330.1L527.1 329.2M672.4 335.6L669.4 334.6M669.4 334.6L666.5 332.9M666.5 332.9L663.5 330.2M663.5 330.2L660.5 326.6M660.5 326.6L659.1 324.4M496 338L498.6 337.2M704.6 335.4L701.6 334.7M498.6 337.2L501.3 336.3M701.6 334.7L698.7 334.2M501.3 336.3L504 335.5M698.7 334.2L695.7 333.7M504 335.5L506.7 334.6M695.7 333.7L692.8 333.4M506.7 334.6L509.4 333.8M692.8 333.4L689.8 333.1M509.4 333.8L512.1 332.9M689.8 333.1L686.9 333M512.1 332.9L514.7 332M686.9 333L683.9 333M514.7 332L517.4 331M683.9 333L681 332.8M517.4 331L518.8 330.4M681 332.8L678 332.6M678 332.6L675 332M675 332L672.1 330.9M672.1 330.9L669.1 329.2M669.1 329.2L666.2 326.8M666.2 326.8L664.7 325.2M493 337.2L495.7 336.3M707.3 334.4L704.3 333.7M495.7 336.3L498.4 335.5M704.3 333.7L701.4 333.1M498.4 335.5L501.1 334.6M701.4 333.1L698.4 332.5M501.1 334.6L503.7 333.7M698.4 332.5L695.5 332M503.7 333.7L506.4 332.9M695.5 332L692.5 331.6M506.4 332.9L507.8 332.4M692.5 331.6L689.5 331.2M689.5 331.2L686.6 330.9M686.6 330.9L683.6 330.5M683.6 330.5L680.7 329.9M680.7 329.9L677.7 329.2M677.7 329.2L674.8 328M674.8 328L671.8 326.4M671.8 326.4L668.9 324.3M668.9 324.3L667.4 323M490.1 336.4L492.7 335.5M710 333.5L707 332.7M492.7 335.5L495.4 334.7M707 332.7L704.1 332M495.4 334.7L498.1 333.8M704.1 332L701.1 331.4M498.1 333.8L499.4 333.3M701.1 331.4L698.1 330.8M698.1 330.8L695.2 330.2M695.2 330.2L692.2 329.7M692.2 329.7L689.3 329.1M689.3 329.1L686.3 328.6M686.3 328.6L683.4 327.9M683.4 327.9L680.4 327M680.4 327L677.5 325.9M677.5 325.9L674.5 324.4M674.5 324.4L673 323.5M487.1 335.6L489.8 334.7M712.6 332.6L709.7 331.8M489.8 334.7L491.1 334.3M709.7 331.8L706.7 331.1M706.7 331.1L703.8 330.3M703.8 330.3L700.8 329.7M700.8 329.7L697.9 329M697.9 329L694.9 328.4M694.9 328.4L692 327.7M692 327.7L689 327M689 327L686.1 326.3M686.1 326.3L683.1 325.4M683.1 325.4L680.1 324.3M680.1 324.3L677.2 322.9M677.2 322.9L675.7 322.1M715.3 331.7L712.4 330.9M712.4 330.9L709.4 330.1M709.4 330.1L706.5 329.4M706.5 329.4L703.5 328.6M703.5 328.6L700.6 327.9M700.6 327.9L697.6 327.2M697.6 327.2L694.6 326.5M694.6 326.5L691.7 325.7M691.7 325.7L688.7 324.9M688.7 324.9L685.8 324M685.8 324L682.8 323M682.8 323L681.3 322.4M718 330.8L715.1 330M715.1 330L712.1 329.2M712.1 329.2L709.1 328.4M709.1 328.4L706.2 327.7M706.2 327.7L703.2 326.9M703.2 326.9L700.3 326.2M700.3 326.2L697.3 325.4M697.3 325.4L694.4 324.6M694.4 324.6L691.4 323.8M691.4 323.8L688.5 322.9M688.5 322.9L687 322.4M720.7 329.9L717.7 329.1M717.7 329.1L714.8 328.3M714.8 328.3L711.8 327.5M711.8 327.5L708.9 326.7M708.9 326.7L705.9 326M705.9 326L703 325.2M703 325.2L700 324.4M700 324.4L697.1 323.6M697.1 323.6L694.1 322.8M694.1 322.8L691.1 321.9M691.1 321.9L689.7 321.4M723.4 329L720.4 328.2M720.4 328.2L717.5 327.4M717.5 327.4L714.5 326.6M714.5 326.6L711.6 325.8M711.6 325.8L708.6 325M708.6 325L705.7 324.3M705.7 324.3L702.7 323.5M702.7 323.5L699.7 322.7M699.7 322.7L696.8 321.8M696.8 321.8L695.3 321.4M726.1 328.1L723.1 327.3M723.1 327.3L720.2 326.5M720.2 326.5L717.2 325.7M717.2 325.7L714.2 324.9M714.2 324.9L711.3 324.1M711.3 324.1L708.3 323.4M708.3 323.4L705.4 322.6M705.4 322.6L702.4 321.7M702.4 321.7L700.9 321.3M728.7 327.2L725.8 326.4M725.8 326.4L722.8 325.7M722.8 325.7L719.9 324.9M719.9 324.9L716.9 324.1M716.9 324.1L714 323.3M714 323.3L711 322.5M711 322.5L708.1 321.7M708.1 321.7L706.6 321.3M731.4 326.4L728.5 325.6M728.5 325.6L725.5 324.8M725.5 324.8L722.6 324M722.6 324L719.6 323.2M719.6 323.2L716.7 322.4M716.7 322.4L713.7 321.6M713.7 321.6L710.7 320.8M710.7 320.8L709.3 320.4M734.1 325.5L731.2 324.7M731.2 324.7L728.2 323.9M728.2 323.9L725.3 323.1M725.3 323.1L722.3 322.3M722.3 322.3L719.3 321.5M719.3 321.5L716.4 320.7M716.4 320.7L714.9 320.3M736.8 324.6L733.8 323.8M733.8 323.8L730.9 323M730.9 323L727.9 322.2M727.9 322.2L725 321.4M725 321.4L723.5 321" stroke="#1edcdc" stroke-width="0.65" fill="none"/><path d="M662.2 352.7L663.5 352.5M663.5 352.5L666.2 351.8M666.2 351.8L668.9 350.6M668.9 350.6L670.2 349.9M648.5 354.4L649.8 354.8M649.8 354.8L652.5 355.6M652.5 355.6L655.2 356.2M655.2 356.2L657.9 356.4M657.9 356.4L660.6 356.2M660.6 356.2L663.3 355.5M663.3 355.5L665.9 354.2M665.9 354.2L668.6 352.5M668.6 352.5L671.3 350.5M671.3 350.5L674 348.1M674 348.1L675.3 346.9M642.9 355.4L644.2 356.1M644.2 356.1L646.9 357.7M646.9 357.7L649.6 359.2M649.6 359.2L652.2 360.3M652.2 360.3L653.6 360.7M667 355.8L668.4 354.5M668.4 354.5L671 351.6M671 351.6L673.7 348.4M673.7 348.4L676.4 345.3M676.4 345.3L677.7 343.8M637.2 355.5L638.6 356.5M638.6 356.5L641.2 358.8M641.2 358.8L643.9 361.2M643.9 361.2L645.3 362.4M669.4 353.9L670.8 351.9M670.8 351.9L673.4 348M673.4 348L676.1 344.2M676.1 344.2L677.5 342.5M631.6 354.5L632.9 355.6M632.9 355.6L635.6 358.4M635.6 358.4L638.3 361.6M638.3 361.6L639.6 363.4M669.1 353.5L670.5 351.1M670.5 351.1L673.2 346.5M673.2 346.5L675.9 342.3M675.9 342.3L677.2 340.5M628.6 354.9L630 356.3M630 356.3L632.6 360M632.6 360L634 362.1M563.2 351.7L561.8 352.1M561.8 352.1L558.8 352.4M558.8 352.4L555.8 352.4M555.8 352.4L552.9 352M552.9 352L549.9 351.1M549.9 351.1L547 349.8M547 349.8L544 348.2M544 348.2L541.1 346.4M541.1 346.4L539.6 345.3M668.9 351.6L670.2 348.8M670.2 348.8L672.9 343.8M672.9 343.8L675.6 339.4M675.6 339.4L676.9 337.6M625.7 354.6L627 356.3M627 356.3L629.7 360.7M629.7 360.7L631 363.3M568.9 351.9L567.4 352.6M567.4 352.6L564.4 353.7M564.4 353.7L561.5 354.5M561.5 354.5L558.5 354.8M558.5 354.8L555.6 354.6M555.6 354.6L552.6 353.7M552.6 353.7L549.7 352.4M549.7 352.4L546.7 350.5M546.7 350.5L543.8 348.3M543.8 348.3L540.8 345.9M540.8 345.9L539.3 344.5M668.6 347.9L669.9 345M669.9 345L672.6 340M672.6 340L674 338M622.7 353.3L624.1 355.1M624.1 355.1L626.7 360M626.7 360L628.1 362.8M571.6 352.6L570.1 353.6M570.1 353.6L567.1 355.4M567.1 355.4L564.2 356.7M564.2 356.7L562.7 357M550.9 354.1L549.4 353.1M549.4 353.1L546.4 350.5M546.4 350.5L543.5 347.6M543.5 347.6L540.5 344.4M540.5 344.4L539.1 342.8M665.7 348.8L667 345.6M667 345.6L669.7 340.1M669.7 340.1L671 337.8M619.8 350.5L621.1 352.3M621.1 352.3L623.8 357.2M623.8 357.2L625.1 360.3M577.2 350.1L575.7 351.4M575.7 351.4L572.8 354.1M572.8 354.1L569.8 356.5M569.8 356.5L568.3 357.5M547.6 351L546.2 349.2M546.2 349.2L543.2 345.5M543.2 345.5L540.3 341.6M540.3 341.6L538.8 339.7M662.7 348.7L664 345.2M664 345.2L666.7 339.4M666.7 339.4L668.1 337M619.5 349.9L620.8 352.2M620.8 352.2L622.2 355.2M579.9 348.7L578.4 350.2M578.4 350.2L575.4 353.6M575.4 353.6L572.5 356.8M572.5 356.8L571 358.1M550.3 352.4L548.9 350.5M548.9 350.5L545.9 346.2M545.9 346.2L542.9 341.6M542.9 341.6L541.5 339.4M659.7 347.1L661.1 343.6M661.1 343.6L663.8 337.6M663.8 337.6L665.1 335.2M619.2 347.7L620.6 350.4M620.6 350.4L621.9 353.7M579.6 349.8L578.1 351.8M578.1 351.8L575.2 355.6M575.2 355.6L573.7 357.3M550.1 348.5L548.6 346.1M548.6 346.1L545.6 340.9M545.6 340.9L544.1 338.3M656.8 343.9L658.1 340.4M658.1 340.4L659.5 337.6M582.3 345.9L580.8 348.2M621.6 349.7L623 353.1M580.8 348.2L577.9 352.6M623 353.1L624.3 356.8M577.9 352.6L576.4 354.6M552.7 347.5L551.3 344.8M551.3 344.8L548.3 339.1M651.1 346L652.5 342.3M548.3 339.1L546.8 336.1M652.5 342.3L655.2 335.9M655.2 335.9L656.5 333.3M582 345.1L580.5 347.6M621.4 343.7L622.7 347.2M580.5 347.6L577.6 352M622.7 347.2L624 350.7M577.6 352L576.1 353.7M558.4 350L556.9 347.8M556.9 347.8L553.9 342.3M645.5 346.1L646.9 342.6M553.9 342.3L552.5 339.2M646.9 342.6L649.5 336M649.5 336L650.9 333.2M581.7 343L580.3 345.4M580.3 345.4L577.3 349.2M623.8 343.6L625.1 346.7M577.3 349.2L575.8 350.5M625.1 346.7L626.5 349.1M561.1 346.2L559.6 344M639.9 343.9L641.2 341M559.6 344L556.6 338.4M641.2 341L642.6 337.9M556.6 338.4L555.2 335.1M578.5 342.9L577 344.4M577 344.4L574.1 346.1M626.2 341.2L627.5 342.8M574.1 346.1L571.1 346.5M627.5 342.8L630.2 343.4M571.1 346.5L568.2 345.5M630.2 343.4L632.9 341.5M568.2 345.5L565.2 343.1M632.9 341.5L635.6 337.7M565.2 343.1L562.3 339M635.6 337.7L636.9 335.1M562.3 339L560.8 336.1M634.4 355L632.9 355.6M632.9 355.6L630 356.3M630 356.3L627 356.3M627 356.3L624.1 355.1M624.1 355.1L621.1 352.3M621.1 352.3L619.6 349.9M575.3 338.7L573.8 339.2M573.8 339.2L570.9 338.8M570.9 338.8L569.4 337.8M640 355.5L638.6 356.5M638.6 356.5L635.6 358.4M635.6 358.4L632.6 360M632.6 360L629.7 360.7M629.7 360.7L626.7 360M626.7 360L623.8 357.2M623.8 357.2L620.8 352.2M620.8 352.2L619.4 348.6M645.7 355L644.2 356.1M644.2 356.1L641.2 358.8M641.2 358.8L638.3 361.6M638.3 361.6L636.8 362.9M574.4 351.5L575.7 351.4M575.7 351.4L578.4 350.2M578.4 350.2L579.7 349M622 354.3L620.6 350.4M620.6 350.4L619.1 345.4M651.3 353.8L649.8 354.8M649.8 354.8L646.9 357.7M646.9 357.7L643.9 361.2M643.9 361.2L642.4 363.2M566.1 352L567.4 352.6M567.4 352.6L570.1 353.6M570.1 353.6L572.8 354.1M572.8 354.1L575.4 353.6M575.4 353.6L578.1 351.8M578.1 351.8L580.8 348.2M580.8 348.2L582.2 345.4M654 354.3L652.5 355.6M652.5 355.6L649.6 359.2M649.6 359.2L648.1 361.4M560.4 351.3L561.8 352.1M561.8 352.1L564.4 353.7M564.4 353.7L567.1 355.4M567.1 355.4L569.8 356.5M569.8 356.5L572.5 356.8M572.5 356.8L575.2 355.6M575.2 355.6L577.9 352.6M624.4 358.7L623 353.1M577.9 352.6L580.5 347.6M623 353.1L621.5 346.7M580.5 347.6L581.9 344.1M656.7 354.6L655.2 356.2M655.2 356.2L652.2 360.3M652.2 360.3L650.8 362.9M557.5 351.5L558.8 352.4M558.8 352.4L561.5 354.5M561.5 354.5L564.2 356.7M564.2 356.7L565.5 357.6M576.2 354.3L577.6 352M624.2 353.8L622.7 347.2M577.6 352L580.3 345.4M622.7 347.2L621.2 340.5M580.3 345.4L581.6 341.4M659.4 354.7L657.9 356.4M657.9 356.4L656.4 358.7M554.5 351.4L555.8 352.4M555.8 352.4L558.5 354.8M558.5 354.8L559.9 356.1M576 352.3L577.3 349.2M577.3 349.2L578.7 345.3M665 351.3L663.5 352.5M663.5 352.5L660.6 356.2M660.6 356.2L659.1 358.7M551.5 350.9L552.9 352M552.9 352L555.6 354.6M555.6 354.6L556.9 356M626.6 353.4L625.1 346.7M575.7 348.1L577 344.4M625.1 346.7L623.6 340.6M577 344.4L578.4 340.2M667.7 350.5L666.2 351.8M666.2 351.8L663.3 355.5M663.3 355.5L661.8 358M548.6 350L549.9 351.1M549.9 351.1L552.6 353.7M552.6 353.7L554 355.2M572.7 349.6L574.1 346.1M574.1 346.1L575.4 342.2M670.4 349.4L668.9 350.6M668.9 350.6L665.9 354.2M665.9 354.2L664.5 356.7M545.6 348.8L547 349.8M547 349.8L549.7 352.4M549.7 352.4L551 353.8M569.8 349.7L571.1 346.5M629 348.3L627.5 342.8M571.1 346.5L573.8 339.2M627.5 342.8L626 338.2M573.8 339.2L575.2 335.5M670.1 350.9L668.6 352.5M668.6 352.5L667.1 354.8M542.7 347.3L544 348.2M544 348.2L546.7 350.5M546.7 350.5L549.4 353.1M549.4 353.1L550.7 354.3M566.8 348.4L568.2 345.5M631.7 348.6L630.2 343.4M568.2 345.5L570.9 338.8M630.2 343.4L628.7 339M570.9 338.8L572.2 335.4M672.8 349L671.3 350.5M671.3 350.5L668.4 354.5M668.4 354.5L666.9 357M539.7 345.6L541.1 346.4M541.1 346.4L543.8 348.3M543.8 348.3L546.4 350.5M546.4 350.5L547.8 351.6M563.9 345.7L565.2 343.1M634.4 346.4L632.9 341.5M565.2 343.1L566.6 339.9M632.9 341.5L631.4 337.4M675.5 346.9L674 348.1M674 348.1L671 351.6M671 351.6L669.6 353.7M539.5 345.1L540.8 345.9M540.8 345.9L543.5 347.6M543.5 347.6L546.2 349.2M546.2 349.2L548.9 350.5M548.9 350.5L550.2 350.7M555.6 348.9L556.9 347.8M556.9 347.8L559.6 344M559.6 344L562.3 339M637.1 342.2L635.6 337.7M562.3 339L563.6 336M635.6 337.7L634.1 333.7M675.2 347.1L673.7 348.4M673.7 348.4L670.8 351.9M670.8 351.9L669.3 354M539.2 343.8L540.5 344.4M540.5 344.4L543.2 345.5M543.2 345.5L545.9 346.2M545.9 346.2L548.6 346.1M548.6 346.1L551.3 344.8M551.3 344.8L553.9 342.3M553.9 342.3L556.6 338.4M642.7 345.3L641.2 341M556.6 338.4L558 335.8M641.2 341L639.7 336.8M677.9 344.3L676.4 345.3M676.4 345.3L673.4 348M673.4 348L670.5 351.1M670.5 351.1L669 352.7M538.9 341.4L540.3 341.6M540.3 341.6L542.9 341.6M542.9 341.6L545.6 340.9M545.6 340.9L548.3 339.1M548.3 339.1L549.6 337.6M648.3 346.1L646.9 342.6M646.9 342.6L645.4 338.7M677.6 343.3L676.1 344.2M676.1 344.2L673.2 346.5M673.2 346.5L670.2 348.8M670.2 348.8L668.7 349.8M654 344.8L652.5 342.3M652.5 342.3L649.5 336M649.5 336L648.1 332.5M677.3 341.5L675.9 342.3M675.9 342.3L672.9 343.8M672.9 343.8L669.9 345M669.9 345L667 345.6M667 345.6L664 345.2M664 345.2L661.1 343.6M661.1 343.6L658.1 340.4M658.1 340.4L655.2 335.9M655.2 335.9L653.7 333.1M677.1 339L675.6 339.4M675.6 339.4L672.6 340M672.6 340L669.7 340.1M669.7 340.1L666.7 339.4M666.7 339.4L663.8 337.6M663.8 337.6L662.3 336.2" stroke="#1298e0" stroke-width="0.65" fill="none"/><path d="M653.6 360.7L654.9 361.1M654.9 361.1L657.6 361.1M657.6 361.1L660.3 360.5M660.3 360.5L663 359.1M663 359.1L665.7 357.1M665.7 357.1L667 355.8M645.3 362.4L646.6 363.6M646.6 363.6L649.3 365.5M649.3 365.5L652 366.8M652 366.8L654.7 367.2M654.7 367.2L656 367M658.7 365.9L660 365.2M660 365.2L662.7 362.7M662.7 362.7L665.4 359.6M665.4 359.6L668.1 355.9M668.1 355.9L669.4 353.9M639.6 363.4L641 365.1M641 365.1L643.7 368.4M643.7 368.4L645 369.8M663.8 363.1L665.1 360.8M665.1 360.8L667.8 356M667.8 356L669.1 353.5M634 362.1L635.3 364.2M635.3 364.2L638 368.7M638 368.7L639.4 370.9M663.5 363.1L664.9 360.2M664.9 360.2L667.5 354.4M667.5 354.4L668.9 351.6M631 363.3L632.4 365.8M632.4 365.8L633.7 368.6M663.2 360.7L664.6 357.3M664.6 357.3L667.3 350.8M667.3 350.8L668.6 347.9M628.1 362.8L629.4 365.7M629.4 365.7L630.8 368.9M562.7 357L561.2 357.4M561.2 357.4L558.3 357.4M558.3 357.4L555.3 356.6M555.3 356.6L552.3 355.2M552.3 355.2L550.9 354.1M663 355.7L664.3 352.1M664.3 352.1L665.7 348.8M625.1 360.3L626.5 363.3M626.5 363.3L627.8 366.7M568.3 357.5L566.9 358.5M566.9 358.5L563.9 359.6M563.9 359.6L560.9 359.9M560.9 359.9L558 359.3M558 359.3L555 357.8M555 357.8L552.1 355.6M552.1 355.6L549.1 352.7M549.1 352.7L547.6 351M660 356L661.4 352.1M661.4 352.1L662.7 348.7M622.2 355.2L623.5 358.2M623.5 358.2L626.2 365.1M626.2 365.1L627.5 368.8M571 358.1L569.5 359.4M569.5 359.4L566.6 361.1M566.6 361.1L563.6 361.8M563.6 361.8L560.7 361.4M560.7 361.4L557.7 359.9M557.7 359.9L554.8 357.5M554.8 357.5L551.8 354.3M551.8 354.3L550.3 352.4M657.1 354.5L658.4 350.6M658.4 350.6L659.7 347.1M621.9 353.7L623.2 357M623.2 357L625.9 364.3M625.9 364.3L627.3 368M573.7 357.3L572.2 358.9M572.2 358.9L569.3 361.2M569.3 361.2L566.3 362.3M566.3 362.3L564.8 362.2M561.9 361.5L560.4 360.9M560.4 360.9L557.4 358.4M557.4 358.4L554.5 355.1M554.5 355.1L551.5 350.9M551.5 350.9L550.1 348.5M651.4 359.1L652.8 355M652.8 355L655.4 347.3M655.4 347.3L656.8 343.9M624.3 356.8L625.7 360.4M576.4 354.6L574.9 356.5M625.7 360.4L627 363.8M574.9 356.5L571.9 359.4M571.9 359.4L569 361M569 361L567.5 361.1M564.6 360.7L563.1 360.2M563.1 360.2L560.1 357.9M560.1 357.9L557.2 354.5M557.2 354.5L554.2 350.1M554.2 350.1L552.7 347.5M648.5 353.4L649.8 349.6M649.8 349.6L651.1 346M624 350.7L625.4 354.1M576.1 353.7L574.6 355.4M625.4 354.1L628.1 360M574.6 355.4L571.7 357.5M628.1 360L629.4 362.1M571.7 357.5L568.7 358.2M568.7 358.2L565.8 357.5M565.8 357.5L562.8 355.5M562.8 355.5L559.9 352.3M559.9 352.3L558.4 350M642.8 352.8L644.2 349.5M644.2 349.5L645.5 346.1M575.8 350.5L574.4 351.8M626.5 349.1L627.8 351.4M574.4 351.8L571.4 353M627.8 351.4L630.5 353.9M571.4 353L568.5 352.9M630.5 353.9L633.2 353.8M568.5 352.9L565.5 351.3M633.2 353.8L635.8 351.3M565.5 351.3L562.5 348.4M635.8 351.3L638.5 346.8M562.5 348.4L561.1 346.2M638.5 346.8L639.9 343.9M636.8 362.9L635.3 364.2M635.3 364.2L632.4 365.8M632.4 365.8L629.4 365.7M629.4 365.7L626.5 363.3M626.5 363.3L623.5 358.2M623.5 358.2L622 354.3M642.4 363.2L641 365.1M641 365.1L638 368.7M638 368.7L636.5 370M627.7 367.7L626.2 365.1M626.2 365.1L623.2 357M623.2 357L621.8 351.6M648.1 361.4L646.6 363.6M646.6 363.6L643.7 368.4M643.7 368.4L642.2 370.7M627.4 368.4L625.9 364.3M625.9 364.3L624.4 358.7M650.8 362.9L649.3 365.5M649.3 365.5L647.8 368.4M565.5 357.6L566.9 358.5M566.9 358.5L569.5 359.4M569.5 359.4L572.2 358.9M572.2 358.9L574.9 356.5M627.1 366L625.7 360.4M574.9 356.5L576.2 354.3M625.7 360.4L624.2 353.8M656.4 358.7L654.9 361.1M654.9 361.1L652 366.8M652 366.8L650.5 370M559.9 356.1L561.2 357.4M561.2 357.4L563.9 359.6M563.9 359.6L566.6 361.1M566.6 361.1L569.3 361.2M569.3 361.2L571.9 359.4M571.9 359.4L574.6 355.4M626.9 360.7L625.4 354.1M574.6 355.4L576 352.3M625.4 354.1L623.9 347.3M659.1 358.7L657.6 361.1M657.6 361.1L654.7 367.2M654.7 367.2L653.2 370.7M556.9 356L558.3 357.4M558.3 357.4L560.9 359.9M560.9 359.9L563.6 361.8M563.6 361.8L566.3 362.3M566.3 362.3L569 361M569 361L571.7 357.5M629.5 366.4L628.1 360M571.7 357.5L574.4 351.8M628.1 360L626.6 353.4M574.4 351.8L575.7 348.1M661.8 358L660.3 360.5M660.3 360.5L658.8 363.6M554 355.2L555.3 356.6M555.3 356.6L558 359.3M558 359.3L560.7 361.4M560.7 361.4L562 361.8M567.4 359.7L568.7 358.2M568.7 358.2L571.4 353M629.3 357.8L627.8 351.4M571.4 353L572.7 349.6M627.8 351.4L626.3 345.6M664.5 356.7L663 359.1M663 359.1L660 365.2M660 365.2L658.6 368.6M551 353.8L552.3 355.2M552.3 355.2L555 357.8M555 357.8L557.7 359.9M557.7 359.9L560.4 360.9M560.4 360.9L563.1 360.2M563.1 360.2L565.8 357.5M565.8 357.5L568.5 352.9M632 359.8L630.5 353.9M568.5 352.9L569.8 349.7M630.5 353.9L629 348.3M667.1 354.8L665.7 357.1M665.7 357.1L662.7 362.7M662.7 362.7L661.2 366M550.7 354.3L552.1 355.6M552.1 355.6L554.8 357.5M554.8 357.5L557.4 358.4M557.4 358.4L560.1 357.9M560.1 357.9L562.8 355.5M562.8 355.5L565.5 351.3M634.6 359.3L633.2 353.8M565.5 351.3L566.8 348.4M633.2 353.8L631.7 348.6M666.9 357L665.4 359.6M665.4 359.6L663.9 362.5M547.8 351.6L549.1 352.7M549.1 352.7L551.8 354.3M551.8 354.3L554.5 355.1M554.5 355.1L557.2 354.5M557.2 354.5L559.9 352.3M559.9 352.3L562.5 348.4M637.3 356.3L635.8 351.3M562.5 348.4L563.9 345.7M635.8 351.3L634.4 346.4M669.6 353.7L668.1 355.9M668.1 355.9L665.1 360.8M665.1 360.8L663.6 363.4M550.2 350.7L551.5 350.9M551.5 350.9L554.2 350.1M554.2 350.1L555.6 348.9M640 351.4L638.5 346.8M638.5 346.8L637.1 342.2M669.3 354L667.8 356M667.8 356L664.9 360.2M664.9 360.2L663.4 362.1M645.6 353.4L644.2 349.5M644.2 349.5L642.7 345.3M669 352.7L667.5 354.4M667.5 354.4L664.6 357.3M664.6 357.3L663.1 358.3M654.2 356.7L652.8 355M652.8 355L649.8 349.6M649.8 349.6L648.3 346.1M668.7 349.8L667.3 350.8M667.3 350.8L664.3 352.1M664.3 352.1L661.4 352.1M661.4 352.1L658.4 350.6M658.4 350.6L655.4 347.3M655.4 347.3L654 344.8" stroke="#1558d8" stroke-width="0.65" fill="none"/><path d="M656 367L657.3 366.7M657.3 366.7L658.7 365.9M645 369.8L646.3 371.2M646.3 371.2L649 373.2M649 373.2L651.7 374.1M651.7 374.1L654.4 373.8M654.4 373.8L657.1 372.1M657.1 372.1L659.8 369.2M659.8 369.2L662.4 365.4M662.4 365.4L663.8 363.1M639.4 370.9L640.7 373.1M640.7 373.1L642 375M660.8 368.7L662.2 366M662.2 366L663.5 363.1M633.7 368.6L635.1 371.3M635.1 371.3L636.4 374M660.6 367.4L661.9 364M661.9 364L663.2 360.7M630.8 368.9L632.1 372.1M632.1 372.1L633.4 375.3M657.6 370.6L658.9 366.8M658.9 366.8L661.6 359.3M661.6 359.3L663 355.7M627.8 366.7L629.2 370.2M629.2 370.2L630.5 373.7M657.3 363.9L658.7 359.8M658.7 359.8L660 356M627.5 368.8L628.9 372.5M628.9 372.5L630.2 376.1M654.4 362.6L655.7 358.5M655.7 358.5L657.1 354.5M627.3 368L628.6 371.6M628.6 371.6L630 374.9M564.8 362.2L563.4 362.2M563.4 362.2L561.9 361.5M648.7 367L650.1 363.1M650.1 363.1L651.4 359.1M627 363.8L628.3 367.2M628.3 367.2L629.7 370M567.5 361.1L566 361.2M566 361.2L564.6 360.7M643.1 367.5L644.4 364.5M644.4 364.5L647.1 357.2M647.1 357.2L648.5 353.4M629.4 362.1L630.7 364.1M630.7 364.1L633.4 365.8M633.4 365.8L636.1 364.8M636.1 364.8L638.8 361.4M638.8 361.4L641.5 356.1M641.5 356.1L642.8 352.8M636.5 370L635.1 371.3M635.1 371.3L632.1 372.1M632.1 372.1L629.2 370.2M629.2 370.2L627.7 367.7M642.2 370.7L640.7 373.1M640.7 373.1L639.2 374.9M630.4 374.9L628.9 372.5M628.9 372.5L627.4 368.4M647.8 368.4L646.3 371.2M646.3 371.2L644.9 374.1M630.1 375.6L628.6 371.6M628.6 371.6L627.1 366M650.5 370L649 373.2M649 373.2L647.5 376.5M629.8 372.7L628.3 367.2M628.3 367.2L626.9 360.7M653.2 370.7L651.7 374.1M651.7 374.1L650.2 377.6M658.8 363.6L657.3 366.7M657.3 366.7L654.4 373.8M654.4 373.8L652.9 377.4M562 361.8L563.4 362.2M563.4 362.2L566 361.2M566 361.2L567.4 359.7M632.2 370.1L630.7 364.1M630.7 364.1L629.3 357.8M658.6 368.6L657.1 372.1M657.1 372.1L655.6 375.7M634.9 371.3L633.4 365.8M633.4 365.8L632 359.8M661.2 366L659.8 369.2M659.8 369.2L658.3 372.6M637.6 369.9L636.1 364.8M636.1 364.8L634.6 359.3M663.9 362.5L662.4 365.4M662.4 365.4L661 368.4M640.3 366L638.8 361.4M638.8 361.4L637.3 356.3M663.6 363.4L662.2 366M662.2 366L660.7 368.4M645.9 367.7L644.4 364.5M644.4 364.5L641.5 356.1M641.5 356.1L640 351.4M663.4 362.1L661.9 364M661.9 364L658.9 366.8M658.9 366.8L657.5 367.4M651.6 364.9L650.1 363.1M650.1 363.1L647.1 357.2M647.1 357.2L645.6 353.4M663.1 358.3L661.6 359.3M661.6 359.3L658.7 359.8M658.7 359.8L655.7 358.5M655.7 358.5L654.2 356.7" stroke="#1a28b4" stroke-width="0.65" fill="none"/><path d="M642 375L643.4 376.9M643.4 376.9L646.1 379.7M646.1 379.7L648.8 381.2M648.8 381.2L651.4 381M651.4 381L654.1 379.2M654.1 379.2L656.8 375.9M656.8 375.9L659.5 371.4M659.5 371.4L660.8 368.7M636.4 374L637.7 376.8M637.7 376.8L640.4 381.6M640.4 381.6L641.8 383.4M655.2 379.5L656.5 377M656.5 377L659.2 370.8M659.2 370.8L660.6 367.4M633.4 375.3L634.8 378.4M634.8 378.4L636.1 381.3M654.9 377.7L656.3 374.3M656.3 374.3L657.6 370.6M630.5 373.7L631.8 377.2M631.8 377.2L633.2 380.5M652 379.4L653.3 375.9M653.3 375.9L656 367.9M656 367.9L657.3 363.9M630.2 376.1L631.6 379.6M631.6 379.6L632.9 382.6M649 378.4L650.3 374.8M650.3 374.8L653 366.7M653 366.7L654.4 362.6M630 374.9L631.3 378.2M631.3 378.2L632.6 380.6M646.1 374.3L647.4 370.9M647.4 370.9L648.7 367M629.7 370L631 372.7M631 372.7L633.7 376M633.7 376L636.4 376.8M636.4 376.8L639.1 374.9M639.1 374.9L641.8 370.6M641.8 370.6L643.1 367.5M639.2 374.9L637.7 376.8M637.7 376.8L634.8 378.4M634.8 378.4L631.8 377.2M631.8 377.2L630.4 374.9M644.9 374.1L643.4 376.9M643.4 376.9L640.4 381.6M640.4 381.6L639 382.9M633 381.7L631.6 379.6M631.6 379.6L630.1 375.6M647.5 376.5L646.1 379.7M646.1 379.7L644.6 382.5M632.8 381.9L631.3 378.2M631.3 378.2L629.8 372.7M650.2 377.6L648.8 381.2M648.8 381.2L647.3 384.2M632.5 377.9L631 372.7M631 372.7L629.5 366.4M652.9 377.4L651.4 381M651.4 381L650 384.3M635.2 380.8L633.7 376M633.7 376L632.2 370.1M655.6 375.7L654.1 379.2M654.1 379.2L652.6 382.5M637.9 381.2L636.4 376.8M636.4 376.8L634.9 371.3M658.3 372.6L656.8 375.9M656.8 375.9L655.3 379M640.5 378.9L639.1 374.9M639.1 374.9L637.6 369.9M661 368.4L659.5 371.4M659.5 371.4L656.5 377M656.5 377L655.1 379.1M643.2 374.2L641.8 370.6M641.8 370.6L640.3 366M660.7 368.4L659.2 370.8M659.2 370.8L656.3 374.3M656.3 374.3L653.3 375.9M653.3 375.9L650.3 374.8M650.3 374.8L647.4 370.9M647.4 370.9L645.9 367.7M657.5 367.4L656 367.9M656 367.9L653 366.7M653 366.7L651.6 364.9" stroke="#12268e" stroke-width="0.65" fill="none"/><path d="M641.8 383.4L643.1 385.2M643.1 385.2L645.8 387.3M645.8 387.3L648.5 387.5M648.5 387.5L651.2 385.7M651.2 385.7L653.8 382.1M653.8 382.1L655.2 379.5M636.1 381.3L637.5 384.2M637.5 384.2L640.2 388.7M640.2 388.7L642.8 391.5M642.8 391.5L645.5 392.1M645.5 392.1L648.2 390.5M648.2 390.5L650.9 386.7M650.9 386.7L653.6 381.1M653.6 381.1L654.9 377.7M633.2 380.5L634.5 383.8M634.5 383.8L637.2 389.1M637.2 389.1L639.9 392.6M639.9 392.6L642.6 393.8M642.6 393.8L645.3 392.4M645.3 392.4L647.9 388.7M647.9 388.7L650.6 383M650.6 383L652 379.4M632.9 382.6L634.2 385.6M634.2 385.6L636.9 389.8M636.9 389.8L639.6 391.7M639.6 391.7L642.3 390.9M642.3 390.9L645 387.5M645 387.5L647.7 382M647.7 382L649 378.4M632.6 380.6L634 383M634 383L636.7 385.6M636.7 385.6L639.3 385.5M639.3 385.5L642 382.8M642 382.8L644.7 377.7M644.7 377.7L646.1 374.3M639 382.9L637.5 384.2M637.5 384.2L634.5 383.8M634.5 383.8L633 381.7M644.6 382.5L643.1 385.2M643.1 385.2L640.2 388.7M640.2 388.7L637.2 389.1M637.2 389.1L634.2 385.6M634.2 385.6L632.8 381.9M647.3 384.2L645.8 387.3M645.8 387.3L642.8 391.5M642.8 391.5L639.9 392.6M639.9 392.6L636.9 389.8M636.9 389.8L634 383M634 383L632.5 377.9M650 384.3L648.5 387.5M648.5 387.5L645.5 392.1M645.5 392.1L642.6 393.8M642.6 393.8L639.6 391.7M639.6 391.7L636.7 385.6M636.7 385.6L635.2 380.8M652.6 382.5L651.2 385.7M651.2 385.7L648.2 390.5M648.2 390.5L645.3 392.4M645.3 392.4L642.3 390.9M642.3 390.9L639.3 385.5M639.3 385.5L637.9 381.2M655.3 379L653.8 382.1M653.8 382.1L650.9 386.7M650.9 386.7L647.9 388.7M647.9 388.7L645 387.5M645 387.5L642 382.8M642 382.8L640.5 378.9M655.1 379.1L653.6 381.1M653.6 381.1L650.6 383M650.6 383L647.7 382M647.7 382L644.7 377.7M644.7 377.7L643.2 374.2" stroke="#083371" stroke-width="0.65" fill="none"/><path d="M535 316.8L533.5 315.3M533.5 315.3L530.6 313.5M530.6 313.5L527.6 312.8M527.6 312.8L524.7 312.9M524.7 312.9L521.7 313.5M521.7 313.5L520.2 313.9M599.9 334L601.2 332.4M602.7 333.9L601.2 332.4M601.2 332.4L603.9 329.5M601.2 332.4L598.3 330.4M603.9 329.5L606.6 327.3M598.3 330.4L595.3 329.8M606.6 327.3L609.3 326.3M595.3 329.8L592.4 330.9M609.3 326.3L612 327M592.4 330.9L590.9 332.3M612 327L613.3 328.4M543.6 320.2L542.1 317.3M542.1 317.3L539.2 312.7M539.2 312.7L536.2 309.6M536.2 309.6L533.3 307.8M533.3 307.8L530.3 307.4M530.3 307.4L527.4 308M527.4 308L524.4 309.2M524.4 309.2L521.4 310.7M521.4 310.7L520 311.5M596.9 332.5L598.3 330.4M605.4 331.6L603.9 329.5M598.3 330.4L601 326.1M603.9 329.5L601 326.1M601 326.1L603.6 322.2M601 326.1L598 324.3M603.6 322.2L605 320.9M598 324.3L595 324.5M595 324.5L592.1 326.7M592.1 326.7L590.6 328.6M613 320.8L614.4 322.3M614.4 322.3L615.7 324.8M549.2 321L547.8 317.4M547.8 317.4L544.8 311.1M544.8 311.1L543.3 308.5M528.6 303.3L527.1 304.3M527.1 304.3L524.1 306.6M524.1 306.6L521.2 308.8M521.2 308.8L519.7 309.8M594 332.3L595.3 329.8M608.1 330.2L606.6 327.3M595.3 329.8L598 324.3M606.6 327.3L603.6 322.2M598 324.3L599.3 321.6M603.6 322.2L602.2 320.6M593.3 320.8L591.8 322.5M591.8 322.5L590.3 324.8M615.4 318.8L616.8 321.7M616.8 321.7L618.1 324.9M551.9 314.6L550.4 310.7M647.6 315.6L649 314M550.4 310.7L549 307.2M649 314L651.7 312.1M651.7 312.1L654.4 311.2M654.4 311.2L657 311.2M657 311.2L658.4 311.4M528.3 300.3L526.8 301.9M526.8 301.9L523.9 305M523.9 305L520.9 307.7M520.9 307.7L519.4 308.8M591 333.7L592.4 330.9M610.8 330.1L609.3 326.3M592.4 330.9L595 324.5M609.3 326.3L607.8 322.9M595 324.5L596.4 321.2M593 316.5L591.5 318.6M591.5 318.6L588.6 323.6M588.6 323.6L587.1 326M615.2 315.5L616.5 318.6M616.5 318.6L617.9 321.8M639.3 317.2L640.7 314.7M557.6 315.9L556.1 311.7M640.7 314.7L643.4 310.8M556.1 311.7L554.6 307.5M643.4 310.8L646 308.2M646 308.2L648.7 306.9M648.7 306.9L651.4 306.7M651.4 306.7L654.1 307.4M654.1 307.4L656.8 308.5M656.8 308.5L658.1 309.1M528 299L526.5 301M526.5 301L523.6 304.5M523.6 304.5L522.1 305.9M613.4 331.7L612 327M590.8 330.2L592.1 326.7M612 327L610.5 322.7M592.1 326.7L593.4 322.9M589.8 317.8L588.3 320.1M588.3 320.1L586.8 322.2M614.9 315.5L616.2 318.6M616.2 318.6L617.6 321.2M633.7 316L635 313.4M563.2 317.4L561.7 313.6M635 313.4L637.7 308.6M561.7 313.6L560.2 309.2M637.7 308.6L640.4 305M640.4 305L641.7 303.8M647.1 302.1L648.4 302.3M648.4 302.3L651.1 303.6M651.1 303.6L653.8 305.3M653.8 305.3L656.5 307.1M656.5 307.1L657.8 307.9M527.7 299L526.3 301.2M526.3 301.2L523.3 304.7M523.3 304.7L521.8 306M590.5 326.5L591.8 322.5M591.8 322.5L593.2 318.5M589.5 315.4L588.1 317.4M611.9 312.5L613.3 315.4M588.1 317.4L585.1 320.9M613.3 315.4L614.6 317.9M585.1 320.9L583.6 322.2M628 316.4L629.4 313.8M568.8 318.5L567.4 315.6M629.4 313.8L632.1 308.3M567.4 315.6L564.4 307.6M632.1 308.3L633.4 305.9M564.4 307.6L562.9 302.8M649.5 301.2L650.9 302.4M650.9 302.4L653.5 304.6M653.5 304.6L656.2 306.7M656.2 306.7L657.6 307.5M530.4 295.3L528.9 298M528.9 298L526 302.2M526 302.2L524.5 303.7M615.9 328.3L614.4 322.3M614.4 322.3L612.9 317.2M590.2 322.9L591.5 318.6M591.5 318.6L592.9 314.8M592.2 311L590.7 312.9M609 312.1L610.3 314.8M590.7 312.9L587.8 316.2M610.3 314.8L611.7 317.1M587.8 316.2L584.8 318.8M584.8 318.8L583.3 319.8M625.1 313.2L626.4 310.4M571.5 314L570 311M626.4 310.4L627.8 307.4M570 311L568.6 306.7M646.6 298.3L647.9 299.7M647.9 299.7L650.6 302.4M650.6 302.4L653.3 304.8M653.3 304.8L654.6 305.8M530.2 297.3L528.7 299.8M528.7 299.8L525.7 303.3M525.7 303.3L524.2 304.5M587.3 328L588.6 323.6M588.6 323.6L589.9 319.5M606 313.3L607.4 315.7M591.9 312.7L590.5 314.1M607.4 315.7L608.7 317.8M590.5 314.1L587.5 316.6M587.5 316.6L586 317.4M619.5 316.6L620.8 314.1M577.2 316L575.7 314.2M620.8 314.1L623.5 307.9M575.7 314.2L572.7 307.8M623.5 307.9L624.8 304.7M572.7 307.8L571.3 303.2M646.3 298.9L647.6 300.4M647.6 300.4L650.3 303.1M650.3 303.1L651.7 304.2M532.8 294.9L531.4 297.6M531.4 297.6L528.4 301.6M528.4 301.6L526.9 302.9M618.3 327.7L616.8 321.7M616.8 321.7L615.3 317M587 324.3L588.3 320.1M588.3 320.1L589.7 316.8M600.4 311.3L601.7 313M597.6 310.9L596.1 312.2M601.7 313L604.4 317.3M596.1 312.2L593.1 314.7M604.4 317.3L605.8 319.1M593.1 314.7L590.2 316.7M590.2 316.7L588.7 317.4M616.5 315.6L617.8 312.9M579.8 315L578.4 313M617.8 312.9L620.5 306.2M578.4 313L575.4 306.1M620.5 306.2L621.9 302.8M575.4 306.1L573.9 301.3M643.3 297.1L644.7 298.8M644.7 298.8L647.4 301.7M647.4 301.7L648.7 302.9M535.5 292.9L534 295.8M534 295.8L531.1 300.1M531.1 300.1L529.6 301.6M618 323.4L616.5 318.6M616.5 318.6L615 315.5M586.7 320.9L588.1 317.4M588.1 317.4L590.7 312.9M590.7 312.9L592.1 312.1M594.8 311.7L596.1 312.2M603.2 312L601.7 313M596.1 312.2L598.8 315.2M601.7 313L598.8 315.2M598.8 315.2L600.1 317M598.8 315.2L595.8 317.1M595.8 317.1L594.4 317.8M613.5 314.9L614.9 312M582.5 315.3L581.1 313.1M614.9 312L617.6 304.9M581.1 313.1L578.1 305.7M617.6 304.9L618.9 301.5M578.1 305.7L576.6 300.6M640.4 295.9L641.7 297.6M641.7 297.6L644.4 300.6M644.4 300.6L645.8 301.8M538.2 291.5L536.7 294.5M536.7 294.5L533.8 298.9M533.8 298.9L532.3 300.4M617.7 321.7L616.2 318.6M583.8 324.4L585.1 320.9M616.2 318.6L613.3 315.4M585.1 320.9L587.8 316.2M613.3 315.4L610.3 314.8M587.8 316.2L590.5 314.1M610.3 314.8L607.4 315.7M590.5 314.1L593.1 314.7M607.4 315.7L604.4 317.3M593.1 314.7L595.8 317.1M604.4 317.3L602.9 318M595.8 317.1L597.2 318.6M610.6 314.4L611.9 311.3M611.9 311.3L614.6 304.2M582.3 309.9L580.8 306.1M614.6 304.2L616 300.7M580.8 306.1L579.3 300.8M637.4 295.1L638.8 296.8M638.8 296.8L641.5 299.8M641.5 299.8L642.8 301.1M540.9 290.6L539.4 293.6M539.4 293.6L536.5 298M536.5 298L535 299.5M583.5 321.2L584.8 318.8M584.8 318.8L587.5 316.6M587.5 316.6L590.2 316.7M590.2 316.7L591.5 317.6M607.6 314L609 310.9M609 310.9L611.7 303.9M584.9 310.5L583.5 306.6M611.7 303.9L613 300.5M583.5 306.6L582 301.4M634.5 294.9L635.8 296.5M635.8 296.5L638.5 299.4M638.5 299.4L639.8 300.6M543.6 290.3L542.1 293.2M542.1 293.2L539.1 297.5M539.1 297.5L537.7 298.9M604.7 313.6L606 310.7M606 310.7L608.7 304M587.6 310.4L586.2 306.7M608.7 304L610 300.7M586.2 306.7L584.7 301.7M631.5 295.1L632.9 296.6M632.9 296.6L635.5 299.3M635.5 299.3L636.9 300.4M546.3 290.6L544.8 293.2M544.8 293.2L541.8 297.2M541.8 297.2L540.3 298.6M604.4 307.1L605.8 304M590.3 309.3L588.8 306M605.8 304L607.1 301M588.8 306L587.4 301.5M625.9 293L627.2 294.4M627.2 294.4L629.9 297.1M629.9 297.1L632.6 299.5M632.6 299.5L633.9 300.4M548.9 291.2L547.5 293.6M547.5 293.6L544.5 297.2M544.5 297.2L543 298.4M598.8 311.3L600.1 308.9M600.1 308.9L602.8 303.5M593 307.2L591.5 304.3M602.8 303.5L604.1 301M591.5 304.3L590 300.5M622.9 294.2L624.3 295.4M624.3 295.4L626.9 297.7M626.9 297.7L628.3 298.7M554.6 287.4L553.1 290.1M553.1 290.1L550.1 294.3M550.1 294.3L548.7 295.8M574.3 315.6L575.7 314.2M622.3 315.1L620.8 314.1M575.7 314.2L578.4 313M620.8 314.1L617.8 312.9M578.4 313L581.1 313.1M617.8 312.9L614.9 312M581.1 313.1L582.4 313.4M614.9 312L611.9 311.3M611.9 311.3L609 310.9M609 310.9L606 310.7M606 310.7L604.5 310.4M601.6 309.5L600.1 308.9M595.8 308.1L597.2 306.3M600.1 308.9L597.2 306.3M597.2 306.3L599.8 302M597.2 306.3L594.2 301.9M599.8 302L602.5 298M594.2 301.9L592.7 298.9M602.5 298L603.9 296.3M617.3 293.6L618.6 294.4M618.6 294.4L621.3 296.5M621.3 296.5L624 298.4M624 298.4L625.3 299.2M557.3 289.3L555.8 291.5M555.8 291.5L552.8 295M552.8 295L551.4 296.3M566 318.4L567.4 315.6M630.9 316.2L629.4 313.8M567.4 315.6L570 311M629.4 313.8L626.4 310.4M570 311L572.7 307.8M626.4 310.4L623.5 307.9M572.7 307.8L575.4 306.1M623.5 307.9L620.5 306.2M575.4 306.1L578.1 305.7M620.5 306.2L617.6 304.9M578.1 305.7L580.8 306.1M617.6 304.9L614.6 304.2M580.8 306.1L583.5 306.6M614.6 304.2L611.7 303.9M583.5 306.6L586.2 306.7M611.7 303.9L608.7 304M586.2 306.7L588.8 306M608.7 304L605.8 304M588.8 306L591.5 304.3M605.8 304L602.8 303.5M591.5 304.3L594.2 301.9M602.8 303.5L599.8 302M594.2 301.9L596.9 299.1M599.8 302L596.9 299.1M596.9 299.1L598.2 297.8M596.9 299.1L595.4 296.9M611.6 293.5L613 294.1M613 294.1L615.7 295.7M615.7 295.7L618.4 297.4M618.4 297.4L619.7 298.2M562.9 287.3L561.4 289.4M561.4 289.4L558.5 293M558.5 293L557 294.4M560.4 316.8L561.7 313.6M636.5 316.5L635 313.4M561.7 313.6L564.4 307.6M635 313.4L632.1 308.3M564.4 307.6L565.8 305M632.1 308.3L630.6 306.4M604 298.2L602.5 298M602.5 298L601 297.2M606 293.4L607.3 293.9M607.3 293.9L610 295.2M610 295.2L612.7 296.7M612.7 296.7L615.4 298.2M615.4 298.2L616.7 298.9M568.5 286.5L567.1 288.3M567.1 288.3L564.1 291.6M564.1 291.6L561.2 294.4M561.2 294.4L559.7 295.5M554.7 315.1L556.1 311.7M642.1 318.2L640.7 314.7M556.1 311.7L557.4 308.2M640.7 314.7L637.7 308.6M637.7 308.6L636.2 306M603.1 293.5L604.4 294.3M604.4 294.3L607.1 295.8M607.1 295.8L609.8 297.4M609.8 297.4L611.1 298.1M574.2 287.1L572.7 288.4M572.7 288.4L569.7 291.1M569.7 291.1L566.8 293.6M566.8 293.6L565.3 294.6M546.4 320.2L547.8 317.4M547.8 317.4L550.4 310.7M550.4 310.7L551.8 307M644.8 314L643.4 310.8M643.4 310.8L640.4 305M640.4 305L638.9 302.4M597.4 291.2L598.8 292.2M598.8 292.2L601.4 294.2M601.4 294.2L604.1 296.1M604.1 296.1L606.8 297.7M606.8 297.7L608.1 298.4M579.8 288.8L578.3 289.6M578.3 289.6L575.4 291.5M575.4 291.5L572.4 293.4M572.4 293.4L571 294.3M540.8 319.8L542.1 317.3M542.1 317.3L544.8 311.1M544.8 311.1L546.2 307.4M650.5 317L649 314M649 314L646 308.2M646 308.2L644.6 305.5M600.2 292.5L598.8 292.2M594.5 290L595.8 291.5M598.8 292.2L595.8 291.5M595.8 291.5L598.5 294M595.8 291.5L592.8 290.9M598.5 294L601.2 296.1M592.8 290.9L589.9 290.6M601.2 296.1L602.5 297M589.9 290.6L586.9 290.9M586.9 290.9L584 291.6M584 291.6L581 292.7M581 292.7L578.1 294M578.1 294L576.6 294.6M537.8 315.5L539.2 312.7M539.2 312.7L540.5 309.4M653.2 314.7L651.7 312.1M651.7 312.1L648.7 306.9M648.7 306.9L647.2 304.4M608.8 293.4L607.3 293.9M607.3 293.9L604.4 294.3M604.4 294.3L601.4 294.2M591.5 289.1L592.8 290.9M601.4 294.2L598.5 294M592.8 290.9L595.5 293.8M598.5 294L595.5 293.8M595.5 293.8L598.2 296.1M595.5 293.8L592.6 293.7M598.2 296.1L599.6 296.9M592.6 293.7L589.6 293.9M589.6 293.9L586.7 294.4M586.7 294.4L583.7 295.1M583.7 295.1L582.2 295.5M532.2 317.6L533.5 315.3M533.5 315.3L536.2 309.6M536.2 309.6L537.6 306.1M655.8 313.5L654.4 311.2M654.4 311.2L651.4 306.7M651.4 306.7L648.4 302.3M648.4 302.3L647 300.3M614.5 293.4L613 294.1M613 294.1L610 295.2M610 295.2L607.1 295.8M607.1 295.8L604.1 296.1M588.5 288.7L589.9 290.6M604.1 296.1L601.2 296.1M589.9 290.6L592.6 293.7M601.2 296.1L598.2 296.1M592.6 293.7L595.3 296.1M598.2 296.1L595.3 296.1M595.3 296.1L596.6 296.9M595.3 296.1L593.8 296.1M529.2 315.9L530.6 313.5M530.6 313.5L533.3 307.8M533.3 307.8L534.6 304.5M658.5 313.1L657 311.2M657 311.2L654.1 307.4M654.1 307.4L651.1 303.6M651.1 303.6L649.7 301.9M620.1 293.7L618.6 294.4M618.6 294.4L615.7 295.7M615.7 295.7L612.7 296.7M612.7 296.7L609.8 297.4M609.8 297.4L606.8 297.7M585.6 289L586.9 290.9M606.8 297.7L605.3 297.8M586.9 290.9L589.6 293.9M589.6 293.9L591 295M526.3 315L527.6 312.8M527.6 312.8L530.3 307.4M530.3 307.4L531.6 304.3M658.2 310.1L656.8 308.5M656.8 308.5L653.8 305.3M653.8 305.3L650.9 302.4M650.9 302.4L647.9 299.7M647.9 299.7L646.4 298.5M628.7 294L627.2 294.4M627.2 294.4L624.3 295.4M624.3 295.4L621.3 296.5M621.3 296.5L618.4 297.4M618.4 297.4L615.4 298.2M615.4 298.2L613.9 298.5M582.6 289.8L584 291.6M584 291.6L586.7 294.4M586.7 294.4L588 295.4M523.3 314.9L524.7 312.9M524.7 312.9L527.4 308M527.4 308L528.7 305.2M658 308.4L656.5 307.1M656.5 307.1L653.5 304.6M653.5 304.6L650.6 302.4M650.6 302.4L647.6 300.4M647.6 300.4L644.7 298.8M644.7 298.8L641.7 297.6M641.7 297.6L638.8 296.8M638.8 296.8L635.8 296.5M635.8 296.5L632.9 296.6M632.9 296.6L629.9 297.1M629.9 297.1L626.9 297.7M626.9 297.7L624 298.4M624 298.4L622.5 298.7M577 287.7L578.3 289.6M578.3 289.6L581 292.7M581 292.7L583.7 295.1M583.7 295.1L585 295.9M520.4 315.3L521.7 313.5M521.7 313.5L524.4 309.2M524.4 309.2L527.1 304.3M527.1 304.3L528.4 301.5M657.7 307.7L656.2 306.7M656.2 306.7L653.3 304.8M653.3 304.8L650.3 303.1M650.3 303.1L647.4 301.7M647.4 301.7L644.4 300.6M644.4 300.6L641.5 299.8M641.5 299.8L638.5 299.4M638.5 299.4L635.5 299.3M635.5 299.3L632.6 299.5M632.6 299.5L631.1 299.6M571.4 286.6L572.7 288.4M572.7 288.4L575.4 291.5M575.4 291.5L578.1 294M578.1 294L579.4 294.9M520.1 312.5L521.4 310.7M521.4 310.7L524.1 306.6M524.1 306.6L526.8 301.9M526.8 301.9L528.2 299.4M565.7 286.8L567.1 288.3M567.1 288.3L569.7 291.1M569.7 291.1L572.4 293.4M572.4 293.4L573.8 294.4M519.8 310.5L521.2 308.8M521.2 308.8L523.9 305M523.9 305L526.5 301M526.5 301L527.9 298.9M560.1 288.2L561.4 289.4M561.4 289.4L564.1 291.6M564.1 291.6L566.8 293.6M566.8 293.6L568.1 294.4M519.6 309.2L520.9 307.7M520.9 307.7L523.6 304.5M523.6 304.5L526.3 301.2M526.3 301.2L528.9 298M528.9 298L530.3 296.4M551.8 289.4L553.1 290.1M553.1 290.1L555.8 291.5M555.8 291.5L558.5 293M558.5 293L561.2 294.4M561.2 294.4L562.5 295M522 306L523.3 304.7M523.3 304.7L526 302.2M526 302.2L528.7 299.8M528.7 299.8L531.4 297.6M531.4 297.6L534 295.8M534 295.8L536.7 294.5M536.7 294.5L539.4 293.6M539.4 293.6L542.1 293.2M542.1 293.2L544.8 293.2M544.8 293.2L547.5 293.6M547.5 293.6L550.1 294.3M550.1 294.3L552.8 295M552.8 295L554.2 295.4M524.4 304.3L525.7 303.3M525.7 303.3L528.4 301.6M528.4 301.6L531.1 300.1M531.1 300.1L533.8 298.9M533.8 298.9L536.5 298M536.5 298L539.1 297.5M539.1 297.5L541.8 297.2M541.8 297.2L544.5 297.2M544.5 297.2L545.8 297.3" stroke="#b0d860" stroke-width="0.65" fill="none"/><path d="M605 320.9L606.3 319.5M606.3 319.5L609 318.3M609 318.3L611.7 319.3M611.7 319.3L613 320.8M543.3 308.5L541.9 306M541.9 306L538.9 302.7M538.9 302.7L535.9 301.1M535.9 301.1L533 301.1M533 301.1L530 302.3M530 302.3L528.6 303.3M599.3 321.6L600.7 318.9M602.2 320.6L600.7 318.9M600.7 318.9L603.4 314.4M600.7 318.9L597.7 317.9M603.4 314.4L606.1 311.5M597.7 317.9L594.8 319.2M606.1 311.5L608.7 310.6M594.8 319.2L593.3 320.8M608.7 310.6L611.4 312.2M611.4 312.2L614.1 316M614.1 316L615.4 318.8M549 307.2L547.5 303.7M547.5 303.7L544.5 298.2M544.5 298.2L543.1 296.5M534.2 294.8L532.7 295.8M532.7 295.8L529.8 298.7M529.8 298.7L528.3 300.3M607.8 322.9L606.3 319.5M596.4 321.2L597.7 317.9M606.3 319.5L603.4 314.4M597.7 317.9L600.4 311.9M603.4 314.4L600.4 311.9M600.4 311.9L601.8 309.5M600.4 311.9L597.5 312M597.5 312L594.5 314.5M594.5 314.5L593 316.5M609.8 306.2L611.1 307.6M611.1 307.6L613.8 312.4M613.8 312.4L615.2 315.5M554.6 307.5L553.1 303.3M553.1 303.3L551.7 299.4M533.9 290.7L532.4 292.7M532.4 292.7L529.5 296.9M529.5 296.9L528 299M610.5 322.7L609 318.3M593.4 322.9L594.8 319.2M609 318.3L606.1 311.5M594.8 319.2L597.5 312M606.1 311.5L604.6 309.3M597.5 312L598.8 309M595.7 309.2L594.2 310.9M594.2 310.9L591.3 315.4M609.5 304.7L610.9 306.7M591.3 315.4L589.8 317.8M610.9 306.7L613.6 312.4M613.6 312.4L614.9 315.5M560.2 309.2L558.8 304.7M558.8 304.7L557.3 300.1M641.7 303.8L643.1 302.7M643.1 302.7L645.8 301.9M645.8 301.9L647.1 302.1M533.7 289.1L532.2 291.7M532.2 291.7L529.2 296.8M529.2 296.8L527.7 299M613.2 324.5L611.7 319.3M611.7 319.3L608.7 310.6M593.2 318.5L594.5 314.5M608.7 310.6L607.3 307.7M594.5 314.5L595.8 311M595.4 307.1L594 309.1M594 309.1L591 313.4M609.3 307L610.6 309.6M591 313.4L589.5 315.4M610.6 309.6L611.9 312.5M633.4 305.9L634.8 303.5M562.9 302.8L561.5 298M634.8 303.5L637.4 299.9M561.5 298L560 293M637.4 299.9L640.1 297.8M640.1 297.8L642.8 297.4M642.8 297.4L645.5 298.3M645.5 298.3L648.2 300.1M648.2 300.1L649.5 301.2M533.4 289.7L531.9 292.7M531.9 292.7L530.4 295.3M612.9 317.2L611.4 312.2M611.4 312.2L609.9 308.5M592.9 314.8L594.2 310.9M594.2 310.9L595.6 308M598.1 303.7L596.6 305.4M603.6 303.4L605 304.8M596.6 305.4L593.7 309.2M605 304.8L607.7 309.4M593.7 309.2L592.2 311M607.7 309.4L609 312.1M627.8 307.4L629.1 304.5M568.6 306.7L567.1 302.4M629.1 304.5L631.8 299.3M567.1 302.4L565.6 297.3M631.8 299.3L634.5 295.6M634.5 295.6L637.2 293.7M637.2 293.7L639.9 293.5M639.9 293.5L642.5 294.7M642.5 294.7L645.2 297M645.2 297L646.6 298.3M536.1 285.4L534.6 288.9M534.6 288.9L531.6 294.9M531.6 294.9L530.2 297.3M615.6 321.7L614.1 316M614.1 316L611.1 307.6M589.9 319.5L591.3 315.4M611.1 307.6L609.7 305.1M591.3 315.4L594 309.1M594 309.1L596.6 305.4M596.6 305.4L599.3 304.7M600.8 303.4L599.3 304.7M599.3 304.7L602 306.8M599.3 304.7L596.4 308M602 306.8L604.7 310.9M596.4 308L593.4 311.2M604.7 310.9L606 313.3M593.4 311.2L591.9 312.7M624.8 304.7L626.2 301.6M571.3 303.2L569.8 298.7M626.2 301.6L628.8 296.1M569.8 298.7L568.3 293.2M628.8 296.1L630.2 294.2M638.2 291L639.6 291.8M639.6 291.8L642.3 294.3M642.3 294.3L645 297.3M645 297.3L646.3 298.9M535.8 288.9L534.3 292.2M534.3 292.2L532.8 294.9M615.3 317L613.8 312.4M613.8 312.4L610.9 306.7M589.7 316.8L591 313.4M610.9 306.7L609.4 305.6M591 313.4L593.7 309.2M606.4 304.6L605 304.8M593.7 309.2L596.4 308M605 304.8L602 306.8M596.4 308L599.1 309.5M602 306.8L599.1 309.5M599.1 309.5L600.4 311.3M599.1 309.5L597.6 310.9M621.9 302.8L623.2 299.4M573.9 301.3L572.5 296.4M623.2 299.4L624.6 296.6M572.5 296.4L571 290.6M638 290.8L639.3 292.2M639.3 292.2L642 295.5M642 295.5L643.3 297.1M538.5 286.5L537 290.1M537 290.1L535.5 292.9M615 315.5L613.6 312.4M613.6 312.4L610.6 309.6M610.6 309.6L607.7 309.4M592.1 312.1L593.4 311.2M607.7 309.4L604.7 310.9M593.4 311.2L594.8 311.7M604.7 310.9L603.2 312M618.9 301.5L620.3 298M576.6 300.6L575.1 295.5M620.3 298L621.6 295M575.1 295.5L573.7 289.4M635 289.3L636.4 290.8M636.4 290.8L639 294.2M639 294.2L640.4 295.9M541.2 284.8L539.7 288.5M539.7 288.5L538.2 291.5M616 300.7L617.3 297.2M579.3 300.8L577.8 295.6M617.3 297.2L618.6 294.2M577.8 295.6L576.4 289.4M632.1 288.6L633.4 290M633.4 290L636.1 293.4M636.1 293.4L637.4 295.1M543.8 283.9L542.4 287.7M542.4 287.7L540.9 290.6M613 300.5L614.3 297M582 301.4L580.5 296.2M614.3 297L615.7 294.2M580.5 296.2L579 290M629.1 288.6L630.4 290M630.4 290L633.1 293.3M633.1 293.3L634.5 294.9M546.5 283.9L545.1 287.5M545.1 287.5L543.6 290.3M610 300.7L611.4 297.4M584.7 301.7L583.2 296.8M611.4 297.4L614.1 292M583.2 296.8L581.7 290.9M614.1 292L615.4 290.1M623.5 287.2L624.8 288M624.8 288L627.5 290.6M627.5 290.6L630.2 293.6M630.2 293.6L631.5 295.1M549.2 284.5L547.7 287.9M547.7 287.9L546.3 290.6M607.1 301L608.4 298M587.4 301.5L585.9 297M608.4 298L611.1 293M585.9 297L584.4 291.7M611.1 293L613.8 289.6M613.8 289.6L615.1 288.8M617.8 288L619.2 288M619.2 288L621.9 289.4M621.9 289.4L624.5 291.7M624.5 291.7L625.9 293M554.9 279.2L553.4 282.7M553.4 282.7L550.4 288.8M550.4 288.8L548.9 291.2M604.1 301L605.5 298.4M590 300.5L588.6 296.6M605.5 298.4L608.2 294.1M588.6 296.6L587.1 292.1M608.2 294.1L610.8 291.1M610.8 291.1L613.5 289.7M613.5 289.7L616.2 289.8M616.2 289.8L618.9 291M618.9 291L621.6 293M621.6 293L622.9 294.2M557.5 281.7L556.1 284.8M556.1 284.8L554.6 287.4M592.7 298.9L591.2 295.8M603.9 296.3L605.2 294.6M591.2 295.8L588.3 288.4M605.2 294.6L607.9 292.3M588.3 288.4L586.8 284.6M607.9 292.3L610.6 291.3M610.6 291.3L613.3 291.5M613.3 291.5L615.9 292.7M615.9 292.7L617.3 293.6M563.2 279.2L561.7 281.9M561.7 281.9L558.7 287.1M558.7 287.1L557.3 289.3M598.2 297.8L599.6 296.4M595.4 296.9L593.9 294.7M599.6 296.4L602.3 294.2M593.9 294.7L591 289.2M602.3 294.2L604.9 292.9M591 289.2L589.5 286.2M604.9 292.9L607.6 292.4M607.6 292.4L610.3 292.9M610.3 292.9L611.6 293.5M565.9 282.9L564.4 285.2M564.4 285.2L562.9 287.3M565.8 305L567.1 302.4M630.6 306.4L629.1 304.5M567.1 302.4L569.8 298.7M629.1 304.5L626.2 301.6M569.8 298.7L572.5 296.4M626.2 301.6L623.2 299.4M572.5 296.4L575.1 295.5M623.2 299.4L620.3 298M575.1 295.5L577.8 295.6M620.3 298L617.3 297.2M577.8 295.6L580.5 296.2M617.3 297.2L614.3 297M580.5 296.2L583.2 296.8M614.3 297L611.4 297.4M583.2 296.8L585.9 297M611.4 297.4L608.4 298M585.9 297L588.6 296.6M608.4 298L605.5 298.4M588.6 296.6L591.2 295.8M605.5 298.4L604 298.2M591.2 295.8L593.9 294.7M601 297.2L599.6 296.4M593.9 294.7L596.6 293.6M599.6 296.4L596.6 293.6M596.6 293.6L599.3 292.8M596.6 293.6L593.7 289.8M599.3 292.8L602 292.6M593.7 289.8L592.2 287.7M602 292.6L604.7 292.9M604.7 292.9L606 293.4M574.5 280L573 281.4M573 281.4L570 284.8M570 284.8L568.5 286.5M557.4 308.2L558.8 304.7M558.8 304.7L561.5 298M636.2 306L634.8 303.5M561.5 298L562.8 295.1M634.8 303.5L631.8 299.3M631.8 299.3L628.8 296.1M628.8 296.1L627.4 294.9M615.6 291.6L614.1 292M614.1 292L611.1 293M611.1 293L608.2 294.1M586.9 288L588.3 288.4M608.2 294.1L605.2 294.6M588.3 288.4L591 289.2M605.2 294.6L602.3 294.2M591 289.2L593.7 289.8M602.3 294.2L599.3 292.8M593.7 289.8L596.3 290.6M599.3 292.8L596.3 290.6M596.3 290.6L599 291.6M596.3 290.6L593.4 287.9M599 291.6L601.7 292.8M593.4 287.9L590.4 285.3M601.7 292.8L603.1 293.5M590.4 285.3L589 284.3M583 282.4L581.6 282.5M581.6 282.5L578.6 283.7M578.6 283.7L575.7 285.8M575.7 285.8L574.2 287.1M551.8 307L553.1 303.3M553.1 303.3L554.5 299.4M638.9 302.4L637.4 299.9M637.4 299.9L634.5 295.6M634.5 295.6L633 293.9M615.3 288.9L613.8 289.6M613.8 289.6L610.8 291.1M610.8 291.1L607.9 292.3M607.9 292.3L604.9 292.9M604.9 292.9L602 292.6M592 286.7L593.4 287.9M602 292.6L599 291.6M593.4 287.9L596.1 290.1M599 291.6L596.1 290.1M596.1 290.1L597.4 291.2M596.1 290.1L593.1 288.6M593.1 288.6L590.2 287.4M590.2 287.4L587.2 286.8M587.2 286.8L584.3 287.1M584.3 287.1L581.3 288.1M581.3 288.1L579.8 288.8M546.2 307.4L547.5 303.7M547.5 303.7L548.8 299.7M644.6 305.5L643.1 302.7M643.1 302.7L640.1 297.8M640.1 297.8L637.2 293.7M637.2 293.7L635.7 292M615 288.8L613.5 289.7M613.5 289.7L610.6 291.3M610.6 291.3L607.6 292.4M607.6 292.4L604.7 292.9M589.1 283.5L590.4 285.3M604.7 292.9L601.7 292.8M590.4 285.3L593.1 288.6M601.7 292.8L600.2 292.5M593.1 288.6L594.5 290M540.5 309.4L541.9 306M541.9 306L544.5 298.2M544.5 298.2L545.9 294M647.2 304.4L645.8 301.9M645.8 301.9L642.8 297.4M642.8 297.4L639.9 293.5M639.9 293.5L638.4 291.9M620.6 287.2L619.2 288M619.2 288L616.2 289.8M616.2 289.8L613.3 291.5M613.3 291.5L610.3 292.9M610.3 292.9L608.8 293.4M588.8 285.3L590.2 287.4M590.2 287.4L591.5 289.1M537.6 306.1L538.9 302.7M538.9 302.7L540.2 298.7M647 300.3L645.5 298.3M645.5 298.3L642.5 294.7M642.5 294.7L639.6 291.8M639.6 291.8L638.1 290.6M626.3 287.6L624.8 288M624.8 288L621.9 289.4M621.9 289.4L618.9 291M618.9 291L615.9 292.7M615.9 292.7L614.5 293.4M585.9 284.5L587.2 286.8M587.2 286.8L588.5 288.7M534.6 304.5L535.9 301.1M535.9 301.1L537.3 297.2M649.7 301.9L648.2 300.1M648.2 300.1L645.2 297M645.2 297L642.3 294.3M642.3 294.3L639.3 292.2M639.3 292.2L636.4 290.8M636.4 290.8L633.4 290M633.4 290L630.4 290M630.4 290L627.5 290.6M627.5 290.6L624.5 291.7M624.5 291.7L621.6 293M621.6 293L620.1 293.7M580.2 279.8L581.6 282.5M581.6 282.5L584.3 287.1M584.3 287.1L585.6 289M531.6 304.3L533 301.1M533 301.1L534.3 297.5M646.4 298.5L645 297.3M645 297.3L642 295.5M642 295.5L639 294.2M639 294.2L636.1 293.4M636.1 293.4L633.1 293.3M633.1 293.3L630.2 293.6M630.2 293.6L628.7 294M577.3 281.2L578.6 283.7M578.6 283.7L581.3 288.1M581.3 288.1L582.6 289.8M528.7 305.2L530 302.3M530 302.3L532.7 295.8M532.7 295.8L534.1 292.3M571.6 278.9L573 281.4M573 281.4L575.7 285.8M575.7 285.8L577 287.7M528.4 301.5L529.8 298.7M529.8 298.7L532.4 292.7M532.4 292.7L533.8 289.5M568.7 282.7L570 284.8M570 284.8L571.4 286.6M528.2 299.4L529.5 296.9M529.5 296.9L532.2 291.7M532.2 291.7L533.5 289.2M560.4 280.3L561.7 281.9M561.7 281.9L564.4 285.2M564.4 285.2L565.7 286.8M527.9 298.9L529.2 296.8M529.2 296.8L531.9 292.7M531.9 292.7L534.6 288.9M534.6 288.9L535.9 287.2M552 282L553.4 282.7M553.4 282.7L556.1 284.8M556.1 284.8L558.7 287.1M558.7 287.1L560.1 288.2M530.3 296.4L531.6 294.9M531.6 294.9L534.3 292.2M534.3 292.2L537 290.1M537 290.1L539.7 288.5M539.7 288.5L542.4 287.7M542.4 287.7L545.1 287.5M545.1 287.5L547.7 287.9M547.7 287.9L550.4 288.8M550.4 288.8L551.8 289.4" stroke="#d8bc50" stroke-width="0.65" fill="none"/><path d="M543.1 296.5L541.6 294.7M541.6 294.7L538.6 293.3M538.6 293.3L535.7 293.8M535.7 293.8L534.2 294.8M601.8 309.5L603.1 307.2M603.1 307.2L605.8 304.7M605.8 304.7L608.5 304.8M608.5 304.8L609.8 306.2M551.7 299.4L550.2 295.6M550.2 295.6L547.2 289.7M547.2 289.7L545.7 287.9M539.8 285.4L538.4 286M538.4 286L535.4 288.8M535.4 288.8L533.9 290.7M604.6 309.3L603.1 307.2M598.8 309L600.1 306M603.1 307.2L600.1 306M600.1 306L602.8 302.1M600.1 306L597.2 307.4M602.8 302.1L605.5 300.9M597.2 307.4L595.7 309.2M605.5 300.9L608.2 302.6M608.2 302.6L609.5 304.7M557.3 300.1L555.8 295.5M555.8 295.5L554.3 291.4M536.6 284L535.1 286.4M535.1 286.4L533.7 289.1M607.3 307.7L605.8 304.7M595.8 311L597.2 307.4M605.8 304.7L602.8 302.1M597.2 307.4L599.9 302.5M602.8 302.1L599.9 302.5M599.9 302.5L602.6 300.3M599.9 302.5L596.9 305.1M602.6 300.3L605.2 301M596.9 305.1L595.4 307.1M605.2 301L607.9 304.4M607.9 304.4L609.3 307M560 293L558.5 288.1M558.5 288.1L557 283.5M536.3 283.4L534.9 286.6M534.9 286.6L533.4 289.7M609.9 308.5L608.5 304.8M608.5 304.8L605.5 300.9M595.6 308L596.9 305.1M605.5 300.9L602.6 300.3M596.9 305.1L599.6 302.1M602.6 300.3L599.6 302.1M599.6 302.1L602.3 302M599.6 302.1L598.1 303.7M602.3 302L603.6 303.4M565.6 297.3L564.1 292.2M564.1 292.2L562.7 286.8M539 278.2L537.5 281.9M537.5 281.9L536.1 285.4M609.7 305.1L608.2 302.6M608.2 302.6L605.2 301M605.2 301L602.3 302M602.3 302L600.8 303.4M568.3 293.2L566.8 287.7M630.2 294.2L631.5 292.2M566.8 287.7L565.3 281.9M631.5 292.2L634.2 290.3M634.2 290.3L636.9 290.2M636.9 290.2L638.2 291M538.7 281.7L537.3 285.5M537.3 285.5L535.8 288.9M609.4 305.6L607.9 304.4M607.9 304.4L606.4 304.6M624.6 296.6L625.9 293.7M625.9 293.7L628.6 289.7M628.6 289.7L631.3 287.7M631.3 287.7L633.9 287.8M633.9 287.8L636.6 289.4M636.6 289.4L638 290.8M541.4 278.8L540 282.9M540 282.9L538.5 286.5M621.6 295L622.9 292.1M622.9 292.1L625.6 288M625.6 288L628.3 286M628.3 286L631 286.1M631 286.1L633.7 287.9M633.7 287.9L635 289.3M544.1 276.9L542.6 281.1M542.6 281.1L541.2 284.8M618.6 294.2L620 291.3M620 291.3L622.7 287.2M622.7 287.2L625.4 285.3M625.4 285.3L628 285.4M628 285.4L630.7 287.2M630.7 287.2L632.1 288.6M546.8 276L545.3 280.2M545.3 280.2L543.8 283.9M615.7 294.2L617 291.3M579 290L577.6 283.9M617 291.3L619.7 287.3M577.6 283.9L576.1 277.6M619.7 287.3L622.4 285.4M622.4 285.4L625.1 285.5M625.1 285.5L627.8 287.2M627.8 287.2L629.1 288.6M549.5 276.2L548 280.3M548 280.3L546.5 283.9M581.7 290.9L580.2 285.1M615.4 290.1L616.8 288.2M580.2 285.1L578.8 279.1M616.8 288.2L619.4 286.4M619.4 286.4L622.1 286.5M622.1 286.5L623.5 287.2M552.2 277.3L550.7 281.2M550.7 281.2L549.2 284.5M584.4 291.7L582.9 286.4M582.9 286.4L581.4 280.9M615.1 288.8L616.5 287.9M616.5 287.9L617.8 288M557.8 272.1L556.3 275.8M556.3 275.8L554.9 279.2M587.1 292.1L585.6 287.5M585.6 287.5L584.1 282.8M560.5 275.4L559 278.7M559 278.7L557.5 281.7M586.8 284.6L585.3 280.7M585.3 280.7L583.9 277.2M566.1 273.9L564.7 276.4M564.7 276.4L563.2 279.2M589.5 286.2L588 283.2M588 283.2L585.1 277.8M585.1 277.8L583.6 275.7M571.8 274.8L570.3 276.5M570.3 276.5L567.3 280.7M567.3 280.7L565.9 282.9M592.2 287.7L590.7 285.6M590.7 285.6L587.7 281.7M587.7 281.7L584.8 278.7M584.8 278.7L581.8 277.1M581.8 277.1L578.9 277.1M578.9 277.1L575.9 278.7M575.9 278.7L574.5 280M562.8 295.1L564.1 292.2M564.1 292.2L566.8 287.7M566.8 287.7L568.2 286.2M627.4 294.9L625.9 293.7M625.9 293.7L622.9 292.1M622.9 292.1L620 291.3M576.2 283.5L577.6 283.9M620 291.3L617 291.3M577.6 283.9L580.2 285.1M617 291.3L615.6 291.6M580.2 285.1L582.9 286.4M582.9 286.4L585.6 287.5M585.6 287.5L586.9 288M589 284.3L587.5 283.3M587.5 283.3L584.5 282.3M584.5 282.3L583 282.4M554.5 299.4L555.8 295.5M555.8 295.5L558.5 288.1M558.5 288.1L559.8 284.7M633 293.9L631.5 292.2M631.5 292.2L628.6 289.7M628.6 289.7L625.6 288M625.6 288L622.7 287.2M622.7 287.2L619.7 287.3M619.7 287.3L616.8 288.2M616.8 288.2L615.3 288.9M584 279.4L585.3 280.7M585.3 280.7L588 283.2M588 283.2L590.7 285.6M590.7 285.6L592 286.7M548.8 299.7L550.2 295.6M550.2 295.6L551.5 291.4M635.7 292L634.2 290.3M634.2 290.3L631.3 287.7M631.3 287.7L628.3 286M628.3 286L625.4 285.3M625.4 285.3L622.4 285.4M622.4 285.4L619.4 286.4M619.4 286.4L616.5 287.9M616.5 287.9L615 288.8M583.7 275.7L585.1 277.8M585.1 277.8L587.7 281.7M587.7 281.7L589.1 283.5M545.9 294L547.2 289.7M547.2 289.7L548.6 285.3M638.4 291.9L636.9 290.2M636.9 290.2L633.9 287.8M633.9 287.8L631 286.1M631 286.1L628 285.4M628 285.4L625.1 285.5M625.1 285.5L622.1 286.5M622.1 286.5L620.6 287.2M583.5 276.1L584.8 278.7M584.8 278.7L587.5 283.3M587.5 283.3L588.8 285.3M540.2 298.7L541.6 294.7M541.6 294.7L542.9 290.4M638.1 290.6L636.6 289.4M636.6 289.4L633.7 287.9M633.7 287.9L630.7 287.2M630.7 287.2L627.8 287.2M627.8 287.2L626.3 287.6M580.5 274.2L581.8 277.1M581.8 277.1L584.5 282.3M584.5 282.3L585.9 284.5M537.3 297.2L538.6 293.3M538.6 293.3L540 289.1M577.5 274.2L578.9 277.1M578.9 277.1L580.2 279.8M534.3 297.5L535.7 293.8M535.7 293.8L538.4 286M538.4 286L539.7 281.9M574.6 275.9L575.9 278.7M575.9 278.7L577.3 281.2M534.1 292.3L535.4 288.8M535.4 288.8L536.7 285.2M568.9 273.9L570.3 276.5M570.3 276.5L571.6 278.9M533.8 289.5L535.1 286.4M535.1 286.4L536.5 283.3M563.3 274.3L564.7 276.4M564.7 276.4L567.3 280.7M567.3 280.7L568.7 282.7M533.5 289.2L534.9 286.6M534.9 286.6L537.5 281.9M537.5 281.9L538.9 279.9M555 274.6L556.3 275.8M556.3 275.8L559 278.7M559 278.7L560.4 280.3M535.9 287.2L537.3 285.5M537.3 285.5L540 282.9M540 282.9L542.6 281.1M542.6 281.1L545.3 280.2M545.3 280.2L548 280.3M548 280.3L550.7 281.2M550.7 281.2L552 282" stroke="#b88c3c" stroke-width="0.65" fill="none"/><path d="M545.7 287.9L544.3 286.1M544.3 286.1L541.3 284.9M541.3 284.9L539.8 285.4M554.3 291.4L552.9 287.2M552.9 287.2L549.9 280.8M549.9 280.8L547 277.1M547 277.1L544 276.1M544 276.1L541 277.8M541 277.8L538.1 281.5M538.1 281.5L536.6 284M557 283.5L555.5 279M555.5 279L552.6 272.2M552.6 272.2L549.6 268.3M549.6 268.3L546.7 267.6M546.7 267.6L543.7 269.8M543.7 269.8L540.8 274.4M540.8 274.4L537.8 280.3M537.8 280.3L536.3 283.4M562.7 286.8L561.2 281.4M561.2 281.4L558.2 271.7M558.2 271.7L555.3 264.3M555.3 264.3L552.3 260.2M552.3 260.2L549.4 259.7M549.4 259.7L546.4 262.5M546.4 262.5L543.5 267.8M543.5 267.8L540.5 274.6M540.5 274.6L539 278.2M565.3 281.9L563.9 276.2M563.9 276.2L560.9 265.7M560.9 265.7L558 257.8M558 257.8L555 253.5M555 253.5L552 253.1M552 253.1L549.1 256.3M549.1 256.3L546.1 262.2M546.1 262.2L543.2 269.7M543.2 269.7L540.2 277.8M540.2 277.8L538.7 281.7M571 290.6L569.5 284.7M569.5 284.7L566.6 272.5M566.6 272.5L563.6 261.5M563.6 261.5L560.6 253.1M560.6 253.1L557.7 248.6M557.7 248.6L554.7 248.2M554.7 248.2L551.8 251.6M551.8 251.6L548.8 257.9M548.8 257.9L545.9 266M545.9 266L542.9 274.7M542.9 274.7L541.4 278.8M573.7 289.4L572.2 283.3M572.2 283.3L569.2 270.6M569.2 270.6L566.3 259.1M566.3 259.1L563.3 250.5M563.3 250.5L560.4 245.8M560.4 245.8L557.4 245.3M557.4 245.3L554.5 248.8M554.5 248.8L551.5 255.4M551.5 255.4L548.5 263.7M548.5 263.7L545.6 272.6M545.6 272.6L544.1 276.9M576.4 289.4L574.9 283.2M574.9 283.2L571.9 270.3M571.9 270.3L569 258.6M569 258.6L566 249.9M566 249.9L563.1 245.1M563.1 245.1L560.1 244.6M560.1 244.6L557.1 248.1M557.1 248.1L554.2 254.5M554.2 254.5L551.2 262.8M551.2 262.8L548.3 271.7M548.3 271.7L546.8 276M576.1 277.6L574.6 271.2M574.6 271.2L571.6 259.8M571.6 259.8L568.7 251.2M568.7 251.2L565.7 246.4M565.7 246.4L562.8 245.9M562.8 245.9L559.8 249.2M559.8 249.2L556.9 255.4M556.9 255.4L553.9 263.5M553.9 263.5L551 272.1M551 272.1L549.5 276.2M578.8 279.1L577.3 273.1M577.3 273.1L574.3 262.3M574.3 262.3L571.4 254.1M571.4 254.1L568.4 249.6M568.4 249.6L565.5 249M565.5 249L562.5 252.1M562.5 252.1L559.6 257.9M559.6 257.9L556.6 265.4M556.6 265.4L553.6 273.5M553.6 273.5L552.2 277.3M581.4 280.9L580 275.5M580 275.5L577 265.6M577 265.6L574.1 258.2M574.1 258.2L571.1 254.1M571.1 254.1L568.1 253.6M568.1 253.6L565.2 256.3M565.2 256.3L562.2 261.6M562.2 261.6L559.3 268.4M559.3 268.4L557.8 272.1M584.1 282.8L582.7 278.1M582.7 278.1L579.7 269.6M579.7 269.6L576.7 263.1M576.7 263.1L573.8 259.5M573.8 259.5L570.8 259.1M570.8 259.1L567.9 261.6M567.9 261.6L564.9 266.2M564.9 266.2L562 272.2M562 272.2L560.5 275.4M583.9 277.2L582.4 273.7M582.4 273.7L579.4 268.3M579.4 268.3L576.5 265.4M576.5 265.4L573.5 265.1M573.5 265.1L570.6 267.3M570.6 267.3L567.6 271.3M567.6 271.3L566.1 273.9M583.6 275.7L582.1 273.6M582.1 273.6L579.2 271.4M579.2 271.4L576.2 271.3M576.2 271.3L573.2 273.1M573.2 273.1L571.8 274.8M568.2 286.2L569.5 284.7M569.5 284.7L572.2 283.3M572.2 283.3L574.9 283.2M574.9 283.2L576.2 283.5M559.8 284.7L561.2 281.4M561.2 281.4L563.9 276.2M563.9 276.2L566.6 272.5M566.6 272.5L569.2 270.6M569.2 270.6L571.9 270.3M571.9 270.3L574.6 271.2M574.6 271.2L577.3 273.1M577.3 273.1L580 275.5M580 275.5L582.7 278.1M582.7 278.1L584 279.4M551.5 291.4L552.9 287.2M552.9 287.2L555.5 279M555.5 279L558.2 271.7M558.2 271.7L560.9 265.7M560.9 265.7L563.6 261.5M563.6 261.5L566.3 259.1M566.3 259.1L569 258.6M569 258.6L571.6 259.8M571.6 259.8L574.3 262.3M574.3 262.3L577 265.6M577 265.6L579.7 269.6M579.7 269.6L582.4 273.7M582.4 273.7L583.7 275.7M548.6 285.3L549.9 280.8M549.9 280.8L552.6 272.2M552.6 272.2L555.3 264.3M555.3 264.3L558 257.8M558 257.8L560.6 253.1M560.6 253.1L563.3 250.5M563.3 250.5L566 249.9M566 249.9L568.7 251.2M568.7 251.2L571.4 254.1M571.4 254.1L574.1 258.2M574.1 258.2L576.7 263.1M576.7 263.1L579.4 268.3M579.4 268.3L582.1 273.6M582.1 273.6L583.5 276.1M542.9 290.4L544.3 286.1M544.3 286.1L547 277.1M547 277.1L549.6 268.3M549.6 268.3L552.3 260.2M552.3 260.2L555 253.5M555 253.5L557.7 248.6M557.7 248.6L560.4 245.8M560.4 245.8L563.1 245.1M563.1 245.1L565.7 246.4M565.7 246.4L568.4 249.6M568.4 249.6L571.1 254.1M571.1 254.1L573.8 259.5M573.8 259.5L576.5 265.4M576.5 265.4L579.2 271.4M579.2 271.4L580.5 274.2M540 289.1L541.3 284.9M541.3 284.9L544 276.1M544 276.1L546.7 267.6M546.7 267.6L549.4 259.7M549.4 259.7L552 253.1M552 253.1L554.7 248.2M554.7 248.2L557.4 245.3M557.4 245.3L560.1 244.6M560.1 244.6L562.8 245.9M562.8 245.9L565.5 249M565.5 249L568.1 253.6M568.1 253.6L570.8 259.1M570.8 259.1L573.5 265.1M573.5 265.1L576.2 271.3M576.2 271.3L577.5 274.2M539.7 281.9L541 277.8M541 277.8L543.7 269.8M543.7 269.8L546.4 262.5M546.4 262.5L549.1 256.3M549.1 256.3L551.8 251.6M551.8 251.6L554.5 248.8M554.5 248.8L557.1 248.1M557.1 248.1L559.8 249.2M559.8 249.2L562.5 252.1M562.5 252.1L565.2 256.3M565.2 256.3L567.9 261.6M567.9 261.6L570.6 267.3M570.6 267.3L573.2 273.1M573.2 273.1L574.6 275.9M536.7 285.2L538.1 281.5M538.1 281.5L540.8 274.4M540.8 274.4L543.5 267.8M543.5 267.8L546.1 262.2M546.1 262.2L548.8 257.9M548.8 257.9L551.5 255.4M551.5 255.4L554.2 254.5M554.2 254.5L556.9 255.4M556.9 255.4L559.6 257.9M559.6 257.9L562.2 261.6M562.2 261.6L564.9 266.2M564.9 266.2L567.6 271.3M567.6 271.3L568.9 273.9M536.5 283.3L537.8 280.3M537.8 280.3L540.5 274.6M540.5 274.6L543.2 269.7M543.2 269.7L545.9 266M545.9 266L548.5 263.7M548.5 263.7L551.2 262.8M551.2 262.8L553.9 263.5M553.9 263.5L556.6 265.4M556.6 265.4L559.3 268.4M559.3 268.4L562 272.2M562 272.2L563.3 274.3M538.9 279.9L540.2 277.8M540.2 277.8L542.9 274.7M542.9 274.7L545.6 272.6M545.6 272.6L548.3 271.7M548.3 271.7L551 272.1M551 272.1L553.6 273.5M553.6 273.5L555 274.6" stroke="#86612a" stroke-width="0.65" fill="none"/><path d="M460.5 386.2L605.3 425.3" stroke="#575757" stroke-width="1" fill="none"/><path d="M605.3 425.3L736.8 382.4" stroke="#575757" stroke-width="1" fill="none"/><path d="M460.5 386.2L460.5 257.2" stroke="#575757" stroke-width="1" fill="none"/><path d="M605.3 425.3L600.5 426.9" stroke="#575757" stroke-width="1" fill="none"/><path d="M581.2 418.8L576.3 420.4" stroke="#575757" stroke-width="1" fill="none"/><path d="M557 412.3L552.2 413.8" stroke="#575757" stroke-width="1" fill="none"/><path d="M532.9 405.8L528.1 407.3" stroke="#575757" stroke-width="1" fill="none"/><path d="M508.8 399.2L503.9 400.8" stroke="#575757" stroke-width="1" fill="none"/><path d="M484.6 392.7L479.8 394.3" stroke="#575757" stroke-width="1" fill="none"/><path d="M460.5 386.2L455.7 387.8" stroke="#575757" stroke-width="1" fill="none"/><path d="M605.3 425.3L610.1 426.6" stroke="#575757" stroke-width="1" fill="none"/><path d="M627.2 418.1L632 419.5" stroke="#575757" stroke-width="1" fill="none"/><path d="M649.1 411L654 412.3" stroke="#575757" stroke-width="1" fill="none"/><path d="M671 403.9L675.9 405.2" stroke="#575757" stroke-width="1" fill="none"/><path d="M693 396.7L697.8 398" stroke="#575757" stroke-width="1" fill="none"/><path d="M714.9 389.5L719.7 390.9" stroke="#575757" stroke-width="1" fill="none"/><path d="M736.8 382.4L741.6 383.7" stroke="#575757" stroke-width="1" fill="none"/><path d="M460.5 381.5L455.2 380.1" stroke="#575757" stroke-width="1" fill="none"/><path d="M460.5 355L455.2 353.5" stroke="#575757" stroke-width="1" fill="none"/><path d="M460.5 328.4L455.2 327" stroke="#575757" stroke-width="1" fill="none"/><path d="M460.5 301.9L455.2 300.4" stroke="#575757" stroke-width="1" fill="none"/><path d="M460.5 275.3L455.2 273.9" stroke="#575757" stroke-width="1" fill="none"/><g font-family="Liberation Sans" font-size="8.5" fill="#383838" stroke="#383838" stroke-width="0.25" dominant-baseline="central"><text x="599.2" y="432.1" text-anchor="end">-3</text><text x="575.1" y="425.6" text-anchor="end">-2</text><text x="550.9" y="419.1" text-anchor="end">-1</text><text x="526.8" y="412.6" text-anchor="end">0</text><text x="502.7" y="406" text-anchor="end">1</text><text x="478.5" y="399.5" text-anchor="end">2</text><text x="454.4" y="393" text-anchor="end">3</text><text x="610.9" y="432.1" text-anchor="start">-3</text><text x="632.8" y="424.9" text-anchor="start">-2</text><text x="654.7" y="417.8" text-anchor="start">-1</text><text x="676.6" y="410.7" text-anchor="start">0</text><text x="698.6" y="403.5" text-anchor="start">1</text><text x="720.5" y="396.3" text-anchor="start">2</text><text x="742.4" y="389.2" text-anchor="start">3</text><text x="451" y="380.5" text-anchor="end">-6</text><text x="451" y="354" text-anchor="end">-3</text><text x="451" y="327.4" text-anchor="end">0</text><text x="451" y="300.9" text-anchor="end">3</text><text x="451" y="274.3" text-anchor="end">6</text></g></g></svg>
</body></html>
